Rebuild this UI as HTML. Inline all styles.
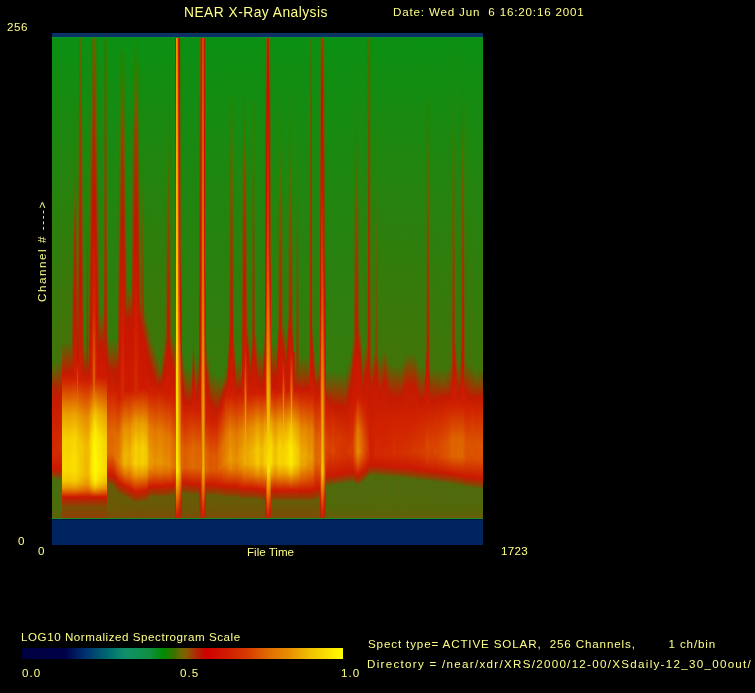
<!DOCTYPE html>
<html><head><meta charset="utf-8">
<style>
html,body{margin:0;padding:0;background:#000;}
body{width:755px;height:693px;position:relative;overflow:hidden;font-family:"Liberation Sans",sans-serif;}
.t{position:absolute;white-space:pre;color:#ffff86;-webkit-font-smoothing:antialiased;will-change:transform;font-size:11.6px;line-height:1;transform-origin:0 0;}
.bar{position:absolute;}
</style></head><body>
<div class="bar" style="left:52px;top:33px;width:431px;height:4px;background:#0a3264"></div>
<svg width="431" height="482" style="position:absolute;left:52px;top:37px" shape-rendering="crispEdges"><defs><linearGradient id="g0" x2="0" y2="1"><stop offset=".001" stop-color="#0b942d"/><stop offset=".0031" stop-color="#0b9013"/><stop offset=".6712" stop-color="#407509"/><stop offset=".6836" stop-color="#4b6e07"/><stop offset=".6961" stop-color="#636004"/><stop offset=".7023" stop-color="#7d4e02"/><stop offset=".7313" stop-color="#b62201"/><stop offset=".7707" stop-color="#cd1a00"/><stop offset=".8641" stop-color="#d32b00"/><stop offset=".8973" stop-color="#c81901"/><stop offset=".9098" stop-color="#854703"/><stop offset=".918" stop-color="#486f0e"/><stop offset=".9782" stop-color="#4d6c0c"/><stop offset=".9969" stop-color="#5f6108"/><stop offset=".999" stop-color="#1a8a2d"/></linearGradient><linearGradient id="g1" x2="0" y2="1"><stop offset=".001" stop-color="#0b942d"/><stop offset=".0031" stop-color="#0b9013"/><stop offset=".6712" stop-color="#407509"/><stop offset=".6878" stop-color="#556905"/><stop offset=".6961" stop-color="#655f04"/><stop offset=".7106" stop-color="#923f02"/><stop offset=".7396" stop-color="#be1d01"/><stop offset=".7977" stop-color="#d12200"/><stop offset=".8683" stop-color="#d32900"/><stop offset=".8973" stop-color="#c81901"/><stop offset=".9098" stop-color="#874603"/><stop offset=".918" stop-color="#4a6e0d"/><stop offset=".9782" stop-color="#4d6c0c"/><stop offset=".9969" stop-color="#5f6108"/><stop offset=".999" stop-color="#1a8a2d"/></linearGradient><linearGradient id="g2" x2="0" y2="1"><stop offset=".001" stop-color="#0b942d"/><stop offset=".0031" stop-color="#0b9013"/><stop offset=".6712" stop-color="#407509"/><stop offset=".6898" stop-color="#5b6505"/><stop offset=".723" stop-color="#aa2c02"/><stop offset=".7562" stop-color="#c91901"/><stop offset=".8641" stop-color="#d32b00"/><stop offset=".8973" stop-color="#c81901"/><stop offset=".9098" stop-color="#884403"/><stop offset=".918" stop-color="#4b6d0d"/><stop offset=".9782" stop-color="#4d6c0c"/><stop offset=".9969" stop-color="#5f6108"/><stop offset=".999" stop-color="#1a8a2d"/></linearGradient><linearGradient id="g3" x2="0" y2="1"><stop offset=".001" stop-color="#0b942d"/><stop offset=".0031" stop-color="#0b9013"/><stop offset=".6712" stop-color="#407509"/><stop offset=".6961" stop-color="#695c04"/><stop offset=".721" stop-color="#a72e02"/><stop offset=".7521" stop-color="#c81901"/><stop offset=".8662" stop-color="#d32a00"/><stop offset=".8973" stop-color="#c81901"/><stop offset=".9098" stop-color="#8a4303"/><stop offset=".918" stop-color="#4d6c0c"/><stop offset=".9782" stop-color="#4d6c0c"/><stop offset=".9969" stop-color="#5f6108"/><stop offset=".999" stop-color="#1a8a2d"/></linearGradient><linearGradient id="g4" x2="0" y2="1"><stop offset=".001" stop-color="#0b942d"/><stop offset=".0031" stop-color="#0b9013"/><stop offset=".6712" stop-color="#407509"/><stop offset=".7002" stop-color="#775203"/><stop offset=".7293" stop-color="#b42401"/><stop offset=".7583" stop-color="#c91901"/><stop offset=".8641" stop-color="#d32b00"/><stop offset=".8973" stop-color="#c91901"/><stop offset=".9077" stop-color="#993802"/><stop offset=".918" stop-color="#4e6b0c"/><stop offset=".9554" stop-color="#486f0e"/><stop offset=".9824" stop-color="#51690b"/><stop offset=".9969" stop-color="#5f6108"/><stop offset=".999" stop-color="#1a8a2d"/></linearGradient><linearGradient id="g5" x2="0" y2="1"><stop offset=".001" stop-color="#0b942d"/><stop offset=".0031" stop-color="#0b9013"/><stop offset=".6753" stop-color="#457208"/><stop offset=".7106" stop-color="#923f02"/><stop offset=".7417" stop-color="#c31a01"/><stop offset=".8496" stop-color="#d42d00"/><stop offset=".8973" stop-color="#c91901"/><stop offset=".9077" stop-color="#9b3702"/><stop offset=".9201" stop-color="#486f0e"/><stop offset=".9782" stop-color="#4d6c0c"/><stop offset=".9969" stop-color="#5f6108"/><stop offset=".999" stop-color="#1a8a2d"/></linearGradient><linearGradient id="g6" x2="0" y2="1"><stop offset=".001" stop-color="#0b942d"/><stop offset=".0031" stop-color="#0b9013"/><stop offset=".6753" stop-color="#467108"/><stop offset=".7127" stop-color="#983a02"/><stop offset=".7417" stop-color="#c41a01"/><stop offset=".8579" stop-color="#d42d00"/><stop offset=".8973" stop-color="#c91901"/><stop offset=".9077" stop-color="#9c3602"/><stop offset=".9201" stop-color="#486f0e"/><stop offset=".9782" stop-color="#4d6c0c"/><stop offset=".9969" stop-color="#5f6108"/><stop offset=".999" stop-color="#1a8a2d"/></linearGradient><linearGradient id="g7" x2="0" y2="1"><stop offset=".001" stop-color="#0b942d"/><stop offset=".0031" stop-color="#0b9013"/><stop offset=".6732" stop-color="#447208"/><stop offset=".7085" stop-color="#914002"/><stop offset=".7396" stop-color="#c31a01"/><stop offset=".8517" stop-color="#d42d00"/><stop offset=".8973" stop-color="#c91901"/><stop offset=".9077" stop-color="#9d3502"/><stop offset=".9201" stop-color="#486f0e"/><stop offset=".9782" stop-color="#4d6c0c"/><stop offset=".9969" stop-color="#5f6108"/><stop offset=".999" stop-color="#1a8a2d"/></linearGradient><linearGradient id="g8" x2="0" y2="1"><stop offset=".001" stop-color="#0b942d"/><stop offset=".0031" stop-color="#0b9013"/><stop offset=".6732" stop-color="#467108"/><stop offset=".7106" stop-color="#983a02"/><stop offset=".7396" stop-color="#c41a01"/><stop offset=".86" stop-color="#d42d00"/><stop offset=".8973" stop-color="#c91901"/><stop offset=".9077" stop-color="#9f3402"/><stop offset=".9201" stop-color="#486f0e"/><stop offset=".9782" stop-color="#4d6c0c"/><stop offset=".9969" stop-color="#5f6108"/><stop offset=".999" stop-color="#1a8a2d"/></linearGradient><linearGradient id="g9" x2="0" y2="1"><stop offset=".001" stop-color="#0b942d"/><stop offset=".0031" stop-color="#0b9013"/><stop offset=".6712" stop-color="#447308"/><stop offset=".7064" stop-color="#904002"/><stop offset=".7376" stop-color="#c31a01"/><stop offset=".8517" stop-color="#d42d00"/><stop offset=".8994" stop-color="#c81901"/><stop offset=".9118" stop-color="#854703"/><stop offset=".9201" stop-color="#486f0e"/><stop offset=".9782" stop-color="#4d6c0c"/><stop offset=".9969" stop-color="#5f6108"/><stop offset=".999" stop-color="#1a8a2d"/></linearGradient><linearGradient id="g10" x2="0" y2="1"><stop offset=".001" stop-color="#0b942d"/><stop offset=".0031" stop-color="#0b9013"/><stop offset=".6338" stop-color="#437308"/><stop offset=".6691" stop-color="#914002"/><stop offset=".7002" stop-color="#c81801"/><stop offset=".721" stop-color="#d53100"/><stop offset=".7811" stop-color="#ea9d00"/><stop offset=".833" stop-color="#f6d200"/><stop offset=".8973" stop-color="#f9dc00"/><stop offset=".9201" stop-color="#f4c900"/><stop offset=".9346" stop-color="#e99900"/><stop offset=".9471" stop-color="#da4c00"/><stop offset=".9533" stop-color="#d01e00"/><stop offset=".9554" stop-color="#c81901"/><stop offset=".9761" stop-color="#7b4e04"/><stop offset=".9969" stop-color="#8e4003"/><stop offset=".999" stop-color="#1a8a2d"/></linearGradient><linearGradient id="g11" x2="0" y2="1"><stop offset=".001" stop-color="#0b942d"/><stop offset=".0031" stop-color="#0b9013"/><stop offset=".6338" stop-color="#447308"/><stop offset=".6691" stop-color="#923f02"/><stop offset=".7002" stop-color="#c81801"/><stop offset=".721" stop-color="#d43100"/><stop offset=".7811" stop-color="#ea9d00"/><stop offset=".833" stop-color="#f6d200"/><stop offset=".8973" stop-color="#f9dc00"/><stop offset=".9201" stop-color="#f4c800"/><stop offset=".9346" stop-color="#e99900"/><stop offset=".9471" stop-color="#da4c00"/><stop offset=".9533" stop-color="#d01e00"/><stop offset=".9554" stop-color="#c81901"/><stop offset=".9761" stop-color="#7b4e04"/><stop offset=".9969" stop-color="#8e4003"/><stop offset=".999" stop-color="#1a8a2d"/></linearGradient><linearGradient id="g12" x2="0" y2="1"><stop offset=".001" stop-color="#0b942d"/><stop offset=".0031" stop-color="#0b9013"/><stop offset=".6338" stop-color="#457208"/><stop offset=".6691" stop-color="#933e02"/><stop offset=".7002" stop-color="#c81801"/><stop offset=".721" stop-color="#d43100"/><stop offset=".7811" stop-color="#ea9d00"/><stop offset=".833" stop-color="#f6d200"/><stop offset=".8973" stop-color="#f8dc00"/><stop offset=".9201" stop-color="#f4c800"/><stop offset=".9346" stop-color="#e99900"/><stop offset=".9471" stop-color="#da4c00"/><stop offset=".9533" stop-color="#d01e00"/><stop offset=".9554" stop-color="#c81901"/><stop offset=".9761" stop-color="#7b4e04"/><stop offset=".9969" stop-color="#8e4003"/><stop offset=".999" stop-color="#1a8a2d"/></linearGradient><linearGradient id="g13" x2="0" y2="1"><stop offset=".001" stop-color="#0b942d"/><stop offset=".0031" stop-color="#0b9013"/><stop offset=".6317" stop-color="#427408"/><stop offset=".667" stop-color="#8f4102"/><stop offset=".6981" stop-color="#c41901"/><stop offset=".7168" stop-color="#d32900"/><stop offset=".7811" stop-color="#ea9c00"/><stop offset=".833" stop-color="#f6d100"/><stop offset=".8973" stop-color="#f8dc00"/><stop offset=".9201" stop-color="#f3c800"/><stop offset=".9346" stop-color="#e99800"/><stop offset=".9471" stop-color="#da4c00"/><stop offset=".9533" stop-color="#d01e00"/><stop offset=".9554" stop-color="#c81901"/><stop offset=".9761" stop-color="#7b4e04"/><stop offset=".9969" stop-color="#8e4003"/><stop offset=".999" stop-color="#1a8a2d"/></linearGradient><linearGradient id="g14" x2="0" y2="1"><stop offset=".001" stop-color="#0b942d"/><stop offset=".0031" stop-color="#0b9013"/><stop offset=".6317" stop-color="#427408"/><stop offset=".667" stop-color="#904102"/><stop offset=".6981" stop-color="#c41901"/><stop offset=".7168" stop-color="#d32900"/><stop offset=".7811" stop-color="#ea9c00"/><stop offset=".833" stop-color="#f6d100"/><stop offset=".8973" stop-color="#f8db00"/><stop offset=".9201" stop-color="#f3c700"/><stop offset=".9346" stop-color="#e99800"/><stop offset=".9471" stop-color="#da4c00"/><stop offset=".9533" stop-color="#d01e00"/><stop offset=".9554" stop-color="#c81901"/><stop offset=".9761" stop-color="#7b4e04"/><stop offset=".9969" stop-color="#8e4003"/><stop offset=".999" stop-color="#1a8a2d"/></linearGradient><linearGradient id="g15" x2="0" y2="1"><stop offset=".001" stop-color="#0b942d"/><stop offset=".0031" stop-color="#0b9013"/><stop offset=".6317" stop-color="#437308"/><stop offset=".667" stop-color="#914002"/><stop offset=".6981" stop-color="#c41901"/><stop offset=".7168" stop-color="#d32800"/><stop offset=".7811" stop-color="#ea9b00"/><stop offset=".833" stop-color="#f5d000"/><stop offset=".8973" stop-color="#f8da00"/><stop offset=".9201" stop-color="#f3c600"/><stop offset=".9346" stop-color="#e99700"/><stop offset=".9471" stop-color="#da4b00"/><stop offset=".9533" stop-color="#d01e00"/><stop offset=".9554" stop-color="#c81901"/><stop offset=".9761" stop-color="#7b4e04"/><stop offset=".9969" stop-color="#8e4003"/><stop offset=".999" stop-color="#1a8a2d"/></linearGradient><linearGradient id="g16" x2="0" y2="1"><stop offset=".001" stop-color="#0b942d"/><stop offset=".0031" stop-color="#0b9013"/><stop offset=".6317" stop-color="#447308"/><stop offset=".667" stop-color="#923f02"/><stop offset=".6981" stop-color="#c41901"/><stop offset=".7168" stop-color="#d32800"/><stop offset=".7811" stop-color="#ea9b00"/><stop offset=".833" stop-color="#f5d000"/><stop offset=".8973" stop-color="#f8da00"/><stop offset=".9201" stop-color="#f3c600"/><stop offset=".9346" stop-color="#e99700"/><stop offset=".9471" stop-color="#da4b00"/><stop offset=".9533" stop-color="#d01e00"/><stop offset=".9554" stop-color="#c81901"/><stop offset=".9761" stop-color="#7b4e04"/><stop offset=".9969" stop-color="#8e4003"/><stop offset=".999" stop-color="#1a8a2d"/></linearGradient><linearGradient id="g17" x2="0" y2="1"><stop offset=".001" stop-color="#0b942d"/><stop offset=".0031" stop-color="#0b9013"/><stop offset=".6317" stop-color="#447308"/><stop offset=".667" stop-color="#923f02"/><stop offset=".6961" stop-color="#c21a01"/><stop offset=".7127" stop-color="#d12200"/><stop offset=".7811" stop-color="#ea9b00"/><stop offset=".833" stop-color="#f6d000"/><stop offset=".8973" stop-color="#f8db00"/><stop offset=".9201" stop-color="#f3c600"/><stop offset=".9346" stop-color="#e99700"/><stop offset=".9471" stop-color="#da4b00"/><stop offset=".9533" stop-color="#d01e00"/><stop offset=".9554" stop-color="#c81901"/><stop offset=".9761" stop-color="#7b4e04"/><stop offset=".9969" stop-color="#8e4003"/><stop offset=".999" stop-color="#1a8a2d"/></linearGradient><linearGradient id="g18" x2="0" y2="1"><stop offset=".001" stop-color="#0b942d"/><stop offset=".0031" stop-color="#0b9013"/><stop offset=".6317" stop-color="#457207"/><stop offset=".667" stop-color="#933e02"/><stop offset=".6961" stop-color="#c31a01"/><stop offset=".7127" stop-color="#d12200"/><stop offset=".7811" stop-color="#ea9c00"/><stop offset=".833" stop-color="#f6d100"/><stop offset=".8973" stop-color="#f8dc00"/><stop offset=".9201" stop-color="#f4c800"/><stop offset=".9346" stop-color="#e99800"/><stop offset=".9471" stop-color="#da4c00"/><stop offset=".9533" stop-color="#d01e00"/><stop offset=".9554" stop-color="#c81901"/><stop offset=".9761" stop-color="#7b4e04"/><stop offset=".9969" stop-color="#8e4003"/><stop offset=".999" stop-color="#1a8a2d"/></linearGradient><linearGradient id="g19" x2="0" y2="1"><stop offset=".001" stop-color="#0b942d"/><stop offset=".0031" stop-color="#0b9013"/><stop offset=".6297" stop-color="#427408"/><stop offset=".6649" stop-color="#8f4102"/><stop offset=".694" stop-color="#c11b01"/><stop offset=".7106" stop-color="#d11f00"/><stop offset=".7832" stop-color="#eba100"/><stop offset=".8351" stop-color="#f7d500"/><stop offset=".8994" stop-color="#f9dd00"/><stop offset=".9222" stop-color="#f3c500"/><stop offset=".9367" stop-color="#e79000"/><stop offset=".9492" stop-color="#d73c00"/><stop offset=".9533" stop-color="#d01e00"/><stop offset=".9554" stop-color="#c81901"/><stop offset=".9761" stop-color="#7b4e04"/><stop offset=".9969" stop-color="#8e4003"/><stop offset=".999" stop-color="#1a8a2d"/></linearGradient><linearGradient id="g20" x2="0" y2="1"><stop offset=".001" stop-color="#0b942d"/><stop offset=".0031" stop-color="#0b9013"/><stop offset=".4658" stop-color="#397908"/><stop offset=".6691" stop-color="#9a3902"/><stop offset=".6981" stop-color="#c51801"/><stop offset=".7168" stop-color="#d32a00"/><stop offset=".779" stop-color="#ea9c00"/><stop offset=".8309" stop-color="#f6d300"/><stop offset=".8952" stop-color="#f9df00"/><stop offset=".9201" stop-color="#f4cb00"/><stop offset=".9346" stop-color="#e99b00"/><stop offset=".9471" stop-color="#da4d00"/><stop offset=".9533" stop-color="#d01e00"/><stop offset=".9554" stop-color="#c81901"/><stop offset=".9761" stop-color="#7b4e04"/><stop offset=".9969" stop-color="#8e4003"/><stop offset=".999" stop-color="#1a8a2d"/></linearGradient><linearGradient id="g21" x2="0" y2="1"><stop offset=".001" stop-color="#0b942d"/><stop offset=".0031" stop-color="#0b9013"/><stop offset=".3143" stop-color="#298108"/><stop offset=".3911" stop-color="#566a02"/><stop offset=".5654" stop-color="#aa2c02"/><stop offset=".7023" stop-color="#cb1801"/><stop offset=".7313" stop-color="#d94700"/><stop offset=".7894" stop-color="#edac00"/><stop offset=".8413" stop-color="#f8da00"/><stop offset=".9056" stop-color="#f9dd00"/><stop offset=".9243" stop-color="#f2c200"/><stop offset=".9388" stop-color="#e58600"/><stop offset=".9533" stop-color="#d01e00"/><stop offset=".9554" stop-color="#c81901"/><stop offset=".9761" stop-color="#7b4e04"/><stop offset=".9969" stop-color="#8e4003"/><stop offset=".999" stop-color="#1a8a2d"/></linearGradient><linearGradient id="g22" x2="0" y2="1"><stop offset=".001" stop-color="#0b942d"/><stop offset=".0031" stop-color="#0b9013"/><stop offset=".279" stop-color="#258309"/><stop offset=".3454" stop-color="#5c6702"/><stop offset=".4098" stop-color="#9f3602"/><stop offset=".5674" stop-color="#c51701"/><stop offset=".7106" stop-color="#d12000"/><stop offset=".7811" stop-color="#eba100"/><stop offset=".8309" stop-color="#f7d500"/><stop offset=".8952" stop-color="#fae100"/><stop offset=".9201" stop-color="#f5cd00"/><stop offset=".9346" stop-color="#ea9d00"/><stop offset=".9471" stop-color="#da4e00"/><stop offset=".9533" stop-color="#d01e00"/><stop offset=".9554" stop-color="#c81901"/><stop offset=".9761" stop-color="#7b4e04"/><stop offset=".9969" stop-color="#8e4003"/><stop offset=".999" stop-color="#1a8a2d"/></linearGradient><linearGradient id="g23" x2="0" y2="1"><stop offset=".001" stop-color="#0b942d"/><stop offset=".0031" stop-color="#0b9013"/><stop offset=".277" stop-color="#258309"/><stop offset=".3434" stop-color="#596802"/><stop offset=".4098" stop-color="#9f3602"/><stop offset=".5674" stop-color="#c51701"/><stop offset=".7106" stop-color="#d12000"/><stop offset=".7811" stop-color="#eba000"/><stop offset=".833" stop-color="#f7d500"/><stop offset=".8973" stop-color="#f9e000"/><stop offset=".9201" stop-color="#f5cc00"/><stop offset=".9346" stop-color="#ea9c00"/><stop offset=".9471" stop-color="#da4d00"/><stop offset=".9533" stop-color="#d01e00"/><stop offset=".9554" stop-color="#c81901"/><stop offset=".9761" stop-color="#7b4e04"/><stop offset=".9969" stop-color="#8e4003"/><stop offset=".999" stop-color="#1a8a2d"/></linearGradient><linearGradient id="g24" x2="0" y2="1"><stop offset=".001" stop-color="#0b942d"/><stop offset=".0031" stop-color="#0b9013"/><stop offset=".3081" stop-color="#288209"/><stop offset=".3869" stop-color="#526c03"/><stop offset=".5488" stop-color="#a43102"/><stop offset=".6836" stop-color="#cd1800"/><stop offset=".7189" stop-color="#d42d00"/><stop offset=".7811" stop-color="#ea9d00"/><stop offset=".833" stop-color="#f6d200"/><stop offset=".8973" stop-color="#f8dc00"/><stop offset=".9201" stop-color="#f4c800"/><stop offset=".9346" stop-color="#e99900"/><stop offset=".9471" stop-color="#da4c00"/><stop offset=".9533" stop-color="#d01e00"/><stop offset=".9554" stop-color="#c81901"/><stop offset=".9761" stop-color="#7b4e04"/><stop offset=".9969" stop-color="#8e4003"/><stop offset=".999" stop-color="#1a8a2d"/></linearGradient><linearGradient id="g25" x2="0" y2="1"><stop offset=".001" stop-color="#0b942d"/><stop offset=".0031" stop-color="#0b9013"/><stop offset=".4201" stop-color="#317d09"/><stop offset=".4927" stop-color="#735702"/><stop offset=".5363" stop-color="#924002"/><stop offset=".6566" stop-color="#c41801"/><stop offset=".6732" stop-color="#c91701"/><stop offset=".6815" stop-color="#d22400"/><stop offset=".7604" stop-color="#e37a00"/><stop offset=".8185" stop-color="#f2c300"/><stop offset=".8745" stop-color="#f8d900"/><stop offset=".9139" stop-color="#f5ce00"/><stop offset=".9305" stop-color="#eca700"/><stop offset=".9429" stop-color="#df6800"/><stop offset=".9533" stop-color="#d01e00"/><stop offset=".9554" stop-color="#c81901"/><stop offset=".9761" stop-color="#7b4e04"/><stop offset=".9969" stop-color="#8e4003"/><stop offset=".999" stop-color="#1a8a2d"/></linearGradient><linearGradient id="g26" x2="0" y2="1"><stop offset=".001" stop-color="#0b942d"/><stop offset=".0031" stop-color="#0b9013"/><stop offset=".1338" stop-color="#138c0f"/><stop offset=".138" stop-color="#1d8608"/><stop offset=".4554" stop-color="#7d5102"/><stop offset=".6421" stop-color="#b32402"/><stop offset=".6691" stop-color="#c91701"/><stop offset=".7189" stop-color="#d32a00"/><stop offset=".7832" stop-color="#e99800"/><stop offset=".8371" stop-color="#f4cb00"/><stop offset=".9015" stop-color="#f6d200"/><stop offset=".9222" stop-color="#f1bb00"/><stop offset=".9367" stop-color="#e68900"/><stop offset=".9533" stop-color="#cf1d00"/><stop offset=".9554" stop-color="#c81901"/><stop offset=".9761" stop-color="#7b4e04"/><stop offset=".9969" stop-color="#8e4003"/><stop offset=".999" stop-color="#1a8a2d"/></linearGradient><linearGradient id="g27" x2="0" y2="1"><stop offset=".001" stop-color="#0b942d"/><stop offset=".0031" stop-color="#2f7c01"/><stop offset=".2728" stop-color="#8d4802"/><stop offset=".5031" stop-color="#bf1901"/><stop offset=".7106" stop-color="#d01d00"/><stop offset=".7873" stop-color="#e99a00"/><stop offset=".8413" stop-color="#f4ca00"/><stop offset=".9035" stop-color="#f5ce00"/><stop offset=".9243" stop-color="#efb300"/><stop offset=".9388" stop-color="#e37c00"/><stop offset=".9533" stop-color="#cf1d00"/><stop offset=".9575" stop-color="#bf2001"/><stop offset=".9761" stop-color="#7b4e04"/><stop offset=".9969" stop-color="#8e4003"/><stop offset=".999" stop-color="#1a8a2d"/></linearGradient><linearGradient id="g28" x2="0" y2="1"><stop offset=".001" stop-color="#0b942d"/><stop offset=".0031" stop-color="#546d00"/><stop offset=".2728" stop-color="#a63103"/><stop offset=".5031" stop-color="#c51501"/><stop offset=".7127" stop-color="#d01f00"/><stop offset=".7873" stop-color="#e99800"/><stop offset=".8434" stop-color="#f4c800"/><stop offset=".9056" stop-color="#f4ca00"/><stop offset=".9263" stop-color="#edab00"/><stop offset=".9409" stop-color="#e16f00"/><stop offset=".9533" stop-color="#cf1d00"/><stop offset=".9575" stop-color="#bf2001"/><stop offset=".9761" stop-color="#7b4e04"/><stop offset=".9969" stop-color="#8e4003"/><stop offset=".999" stop-color="#1a8a2d"/></linearGradient><linearGradient id="g29" x2="0" y2="1"><stop offset=".001" stop-color="#0b942d"/><stop offset=".0031" stop-color="#2f7c01"/><stop offset=".2728" stop-color="#8d4802"/><stop offset=".5031" stop-color="#bf1901"/><stop offset=".7106" stop-color="#cf1c00"/><stop offset=".7894" stop-color="#e99800"/><stop offset=".8454" stop-color="#f3c600"/><stop offset=".9077" stop-color="#f3c600"/><stop offset=".9263" stop-color="#eca900"/><stop offset=".9409" stop-color="#e06e00"/><stop offset=".9533" stop-color="#cf1d00"/><stop offset=".9575" stop-color="#bf2001"/><stop offset=".9761" stop-color="#7b4e04"/><stop offset=".9969" stop-color="#8e4003"/><stop offset=".999" stop-color="#1a8a2d"/></linearGradient><linearGradient id="g30" x2="0" y2="1"><stop offset=".001" stop-color="#0b942d"/><stop offset=".0031" stop-color="#0b9013"/><stop offset=".1338" stop-color="#128c0f"/><stop offset=".138" stop-color="#1d8608"/><stop offset=".4554" stop-color="#7d5102"/><stop offset=".6919" stop-color="#ba1f01"/><stop offset=".7106" stop-color="#cf1c00"/><stop offset=".7894" stop-color="#e99600"/><stop offset=".8454" stop-color="#f3c400"/><stop offset=".9077" stop-color="#f3c400"/><stop offset=".9263" stop-color="#eca600"/><stop offset=".9409" stop-color="#e06c00"/><stop offset=".9533" stop-color="#cf1d00"/><stop offset=".9575" stop-color="#bf2001"/><stop offset=".9761" stop-color="#7b4e04"/><stop offset=".9969" stop-color="#8e4003"/><stop offset=".999" stop-color="#1a8a2d"/></linearGradient><linearGradient id="g31" x2="0" y2="1"><stop offset=".001" stop-color="#0b942d"/><stop offset=".0031" stop-color="#0b9013"/><stop offset=".445" stop-color="#2f7e0a"/><stop offset=".6587" stop-color="#735503"/><stop offset=".6898" stop-color="#b62201"/><stop offset=".7106" stop-color="#cf1b00"/><stop offset=".7915" stop-color="#e89500"/><stop offset=".8496" stop-color="#f2c100"/><stop offset=".9077" stop-color="#f2c000"/><stop offset=".9263" stop-color="#eba300"/><stop offset=".9409" stop-color="#e06a00"/><stop offset=".9533" stop-color="#cf1d00"/><stop offset=".9595" stop-color="#ba2201"/><stop offset=".9761" stop-color="#7b4e04"/><stop offset=".9969" stop-color="#8e4003"/><stop offset=".999" stop-color="#1a8a2d"/></linearGradient><linearGradient id="g32" x2="0" y2="1"><stop offset=".001" stop-color="#0b942d"/><stop offset=".0031" stop-color="#0b9013"/><stop offset=".6276" stop-color="#367b0c"/><stop offset=".667" stop-color="#884702"/><stop offset=".7002" stop-color="#c41901"/><stop offset=".721" stop-color="#d32700"/><stop offset=".7894" stop-color="#e79000"/><stop offset=".8475" stop-color="#f1bd00"/><stop offset=".9077" stop-color="#f1bc00"/><stop offset=".9284" stop-color="#e99a00"/><stop offset=".9429" stop-color="#dd5c00"/><stop offset=".9533" stop-color="#cf1d00"/><stop offset=".9595" stop-color="#ba2201"/><stop offset=".9761" stop-color="#7b4e04"/><stop offset=".9969" stop-color="#8e4003"/><stop offset=".999" stop-color="#1a8a2d"/></linearGradient><linearGradient id="g33" x2="0" y2="1"><stop offset=".001" stop-color="#0b942d"/><stop offset=".0031" stop-color="#0b9013"/><stop offset=".6276" stop-color="#317e0e"/><stop offset=".6691" stop-color="#8b4402"/><stop offset=".7023" stop-color="#c61801"/><stop offset=".7251" stop-color="#d42d00"/><stop offset=".7894" stop-color="#e78d00"/><stop offset=".8496" stop-color="#f0ba00"/><stop offset=".9098" stop-color="#f0b700"/><stop offset=".9284" stop-color="#e99700"/><stop offset=".9429" stop-color="#dd5b00"/><stop offset=".9533" stop-color="#cf1c00"/><stop offset=".9595" stop-color="#ba2201"/><stop offset=".9761" stop-color="#7b4e04"/><stop offset=".9969" stop-color="#8e4003"/><stop offset=".999" stop-color="#1a8a2d"/></linearGradient><linearGradient id="g34" x2="0" y2="1"><stop offset=".001" stop-color="#0b942d"/><stop offset=".0031" stop-color="#0b9013"/><stop offset=".4201" stop-color="#2c800a"/><stop offset=".6525" stop-color="#616104"/><stop offset=".6919" stop-color="#b72201"/><stop offset=".7106" stop-color="#ce1a00"/><stop offset=".7936" stop-color="#e79100"/><stop offset=".8517" stop-color="#f0ba00"/><stop offset=".9098" stop-color="#efb600"/><stop offset=".9284" stop-color="#e99600"/><stop offset=".9429" stop-color="#dc5a00"/><stop offset=".9533" stop-color="#cf1c00"/><stop offset=".9595" stop-color="#ba2201"/><stop offset=".9761" stop-color="#7b4e04"/><stop offset=".9969" stop-color="#8e4003"/><stop offset=".999" stop-color="#1a8a2d"/></linearGradient><linearGradient id="g35" x2="0" y2="1"><stop offset=".001" stop-color="#0b942d"/><stop offset=".0031" stop-color="#0b9013"/><stop offset=".2832" stop-color="#23840a"/><stop offset=".3786" stop-color="#5a6802"/><stop offset=".4201" stop-color="#725902"/><stop offset=".6878" stop-color="#b02702"/><stop offset=".7085" stop-color="#cd1900"/><stop offset=".7956" stop-color="#e89400"/><stop offset=".8537" stop-color="#f1bc00"/><stop offset=".9098" stop-color="#f0b700"/><stop offset=".9284" stop-color="#e99700"/><stop offset=".9429" stop-color="#dd5b00"/><stop offset=".9533" stop-color="#cf1c00"/><stop offset=".9595" stop-color="#ba2201"/><stop offset=".9761" stop-color="#7b4e04"/><stop offset=".9969" stop-color="#8e4003"/><stop offset=".999" stop-color="#1a8a2d"/></linearGradient><linearGradient id="g36" x2="0" y2="1"><stop offset=".001" stop-color="#0b942d"/><stop offset=".0031" stop-color="#0b9013"/><stop offset=".4201" stop-color="#2c800a"/><stop offset=".5612" stop-color="#4e6d05"/><stop offset=".6649" stop-color="#7c4f02"/><stop offset=".7023" stop-color="#c71801"/><stop offset=".7251" stop-color="#d42e00"/><stop offset=".7894" stop-color="#e78f00"/><stop offset=".8475" stop-color="#f1bc00"/><stop offset=".9077" stop-color="#f1bb00"/><stop offset=".9284" stop-color="#e99900"/><stop offset=".9429" stop-color="#dd5c00"/><stop offset=".9533" stop-color="#cf1c00"/><stop offset=".9595" stop-color="#ba2201"/><stop offset=".9761" stop-color="#7b4e04"/><stop offset=".9969" stop-color="#8e4003"/><stop offset=".999" stop-color="#1a8a2d"/></linearGradient><linearGradient id="g37" x2="0" y2="1"><stop offset=".001" stop-color="#0b942d"/><stop offset=".0031" stop-color="#0b9013"/><stop offset=".3039" stop-color="#23840b"/><stop offset=".5695" stop-color="#8b4502"/><stop offset=".6629" stop-color="#ad2902"/><stop offset=".6898" stop-color="#c81701"/><stop offset=".7147" stop-color="#d12100"/><stop offset=".7853" stop-color="#e89400"/><stop offset=".8413" stop-color="#f3c500"/><stop offset=".9035" stop-color="#f4c900"/><stop offset=".9243" stop-color="#eeaf00"/><stop offset=".9388" stop-color="#e37900"/><stop offset=".9533" stop-color="#cf1d00"/><stop offset=".9575" stop-color="#bf2001"/><stop offset=".9761" stop-color="#7b4e04"/><stop offset=".9969" stop-color="#8e4003"/><stop offset=".999" stop-color="#1a8a2d"/></linearGradient><linearGradient id="g38" x2="0" y2="1"><stop offset=".001" stop-color="#0b942d"/><stop offset=".0031" stop-color="#0b9013"/><stop offset=".1483" stop-color="#138c10"/><stop offset=".1525" stop-color="#1e8608"/><stop offset=".3994" stop-color="#7e5102"/><stop offset=".6006" stop-color="#bc1d01"/><stop offset=".7085" stop-color="#cf1b00"/><stop offset=".7853" stop-color="#ea9e00"/><stop offset=".8392" stop-color="#f6d000"/><stop offset=".9035" stop-color="#f7d500"/><stop offset=".9243" stop-color="#f0ba00"/><stop offset=".9388" stop-color="#e48000"/><stop offset=".9533" stop-color="#d01e00"/><stop offset=".9554" stop-color="#c81901"/><stop offset=".9761" stop-color="#7b4e04"/><stop offset=".9969" stop-color="#8e4003"/><stop offset=".999" stop-color="#1a8a2d"/></linearGradient><linearGradient id="g39" x2="0" y2="1"><stop offset=".001" stop-color="#0b942d"/><stop offset=".0031" stop-color="#188705"/><stop offset=".1815" stop-color="#586a01"/><stop offset=".4118" stop-color="#b02602"/><stop offset=".5778" stop-color="#cb1501"/><stop offset=".7127" stop-color="#d22400"/><stop offset=".779" stop-color="#eba000"/><stop offset=".8288" stop-color="#f7d600"/><stop offset=".8911" stop-color="#fae300"/><stop offset=".918" stop-color="#f6d300"/><stop offset=".9326" stop-color="#eca800"/><stop offset=".945" stop-color="#dd5f00"/><stop offset=".9533" stop-color="#d01e00"/><stop offset=".9554" stop-color="#c81901"/><stop offset=".9761" stop-color="#7b4e04"/><stop offset=".9969" stop-color="#8e4003"/><stop offset=".999" stop-color="#1a8a2d"/></linearGradient><linearGradient id="g40" x2="0" y2="1"><stop offset=".001" stop-color="#0b942d"/><stop offset=".0031" stop-color="#397800"/><stop offset=".1981" stop-color="#924503"/><stop offset=".3662" stop-color="#c21601"/><stop offset=".5591" stop-color="#d11d00"/><stop offset=".7189" stop-color="#d53300"/><stop offset=".777" stop-color="#eca800"/><stop offset=".8247" stop-color="#f9df00"/><stop offset=".889" stop-color="#fced00"/><stop offset=".918" stop-color="#f9de00"/><stop offset=".9326" stop-color="#efb300"/><stop offset=".945" stop-color="#df6500"/><stop offset=".9533" stop-color="#d01f00"/><stop offset=".9554" stop-color="#c81901"/><stop offset=".9761" stop-color="#7b4e04"/><stop offset=".9969" stop-color="#8e4003"/><stop offset=".999" stop-color="#1a8a2d"/></linearGradient><linearGradient id="g41" x2="0" y2="1"><stop offset=".001" stop-color="#0b942d"/><stop offset=".0031" stop-color="#5e6900"/><stop offset=".2044" stop-color="#ac2b03"/><stop offset=".3662" stop-color="#c81201"/><stop offset=".555" stop-color="#d22300"/><stop offset=".6857" stop-color="#dc5700"/><stop offset=".721" stop-color="#dd5e00"/><stop offset=".75" stop-color="#e47f00"/><stop offset=".8019" stop-color="#f7d400"/><stop offset=".8517" stop-color="#fdf200"/><stop offset=".9139" stop-color="#fcec00"/><stop offset=".9284" stop-color="#f5ce00"/><stop offset=".9409" stop-color="#e68a00"/><stop offset=".9533" stop-color="#d02000"/><stop offset=".9554" stop-color="#c81901"/><stop offset=".9761" stop-color="#7b4e04"/><stop offset=".9969" stop-color="#8e4003"/><stop offset=".999" stop-color="#1a8a2d"/></linearGradient><linearGradient id="g42" x2="0" y2="1"><stop offset=".001" stop-color="#0b942d"/><stop offset=".0031" stop-color="#5e6900"/><stop offset=".2044" stop-color="#ac2b03"/><stop offset=".3662" stop-color="#c81201"/><stop offset=".555" stop-color="#d22300"/><stop offset=".6857" stop-color="#dc5700"/><stop offset=".721" stop-color="#dd5e00"/><stop offset=".7459" stop-color="#e37b00"/><stop offset=".7956" stop-color="#f7d400"/><stop offset=".8413" stop-color="#fef400"/><stop offset=".9139" stop-color="#fdf100"/><stop offset=".9284" stop-color="#f7d400"/><stop offset=".9409" stop-color="#e78f00"/><stop offset=".9533" stop-color="#d12000"/><stop offset=".9554" stop-color="#c81901"/><stop offset=".9761" stop-color="#7b4e04"/><stop offset=".9969" stop-color="#8e4003"/><stop offset=".999" stop-color="#1a8a2d"/></linearGradient><linearGradient id="g43" x2="0" y2="1"><stop offset=".001" stop-color="#0b942d"/><stop offset=".0031" stop-color="#397800"/><stop offset=".1981" stop-color="#924503"/><stop offset=".3662" stop-color="#c21601"/><stop offset=".5591" stop-color="#d11d00"/><stop offset=".7147" stop-color="#d53200"/><stop offset=".7728" stop-color="#efb500"/><stop offset=".8143" stop-color="#fcea00"/><stop offset=".8807" stop-color="#fefa00"/><stop offset=".918" stop-color="#fdf000"/><stop offset=".9305" stop-color="#f5d000"/><stop offset=".9429" stop-color="#e48200"/><stop offset=".9533" stop-color="#d12000"/><stop offset=".9554" stop-color="#c81901"/><stop offset=".9761" stop-color="#7b4e04"/><stop offset=".9969" stop-color="#8e4003"/><stop offset=".999" stop-color="#1a8a2d"/></linearGradient><linearGradient id="g44" x2="0" y2="1"><stop offset=".001" stop-color="#0b942d"/><stop offset=".0031" stop-color="#188705"/><stop offset=".1815" stop-color="#586a01"/><stop offset=".4118" stop-color="#b02602"/><stop offset=".5778" stop-color="#cb1501"/><stop offset=".7085" stop-color="#d22300"/><stop offset=".7749" stop-color="#eeb200"/><stop offset=".8185" stop-color="#fbe700"/><stop offset=".8849" stop-color="#fef700"/><stop offset=".918" stop-color="#fcea00"/><stop offset=".9305" stop-color="#f4c900"/><stop offset=".9429" stop-color="#e37d00"/><stop offset=".9533" stop-color="#d12000"/><stop offset=".9554" stop-color="#c81901"/><stop offset=".9761" stop-color="#7b4e04"/><stop offset=".9969" stop-color="#8e4003"/><stop offset=".999" stop-color="#1a8a2d"/></linearGradient><linearGradient id="g45" x2="0" y2="1"><stop offset=".001" stop-color="#0b942d"/><stop offset=".0031" stop-color="#0b9013"/><stop offset=".1483" stop-color="#138c10"/><stop offset=".1525" stop-color="#1e8608"/><stop offset=".3994" stop-color="#7e5102"/><stop offset=".6006" stop-color="#bc1d01"/><stop offset=".7044" stop-color="#cf1b00"/><stop offset=".7811" stop-color="#efb600"/><stop offset=".8268" stop-color="#fbe700"/><stop offset=".8973" stop-color="#fdf200"/><stop offset=".9201" stop-color="#fae200"/><stop offset=".9326" stop-color="#f0ba00"/><stop offset=".945" stop-color="#df6900"/><stop offset=".9533" stop-color="#d02000"/><stop offset=".9554" stop-color="#c81901"/><stop offset=".9761" stop-color="#7b4e04"/><stop offset=".9969" stop-color="#8e4003"/><stop offset=".999" stop-color="#1a8a2d"/></linearGradient><linearGradient id="g46" x2="0" y2="1"><stop offset=".001" stop-color="#0b942d"/><stop offset=".0031" stop-color="#0b9013"/><stop offset=".3039" stop-color="#23840b"/><stop offset=".5695" stop-color="#8b4502"/><stop offset=".6255" stop-color="#a23202"/><stop offset=".6525" stop-color="#c71701"/><stop offset=".7044" stop-color="#ce1a00"/><stop offset=".7811" stop-color="#eeb100"/><stop offset=".8268" stop-color="#fae300"/><stop offset=".8952" stop-color="#fdef00"/><stop offset=".9201" stop-color="#f9dd00"/><stop offset=".9326" stop-color="#efb500"/><stop offset=".945" stop-color="#df6700"/><stop offset=".9533" stop-color="#d01f00"/><stop offset=".9554" stop-color="#c81901"/><stop offset=".9761" stop-color="#7b4e04"/><stop offset=".9969" stop-color="#8e4003"/><stop offset=".999" stop-color="#1a8a2d"/></linearGradient><linearGradient id="g47" x2="0" y2="1"><stop offset=".001" stop-color="#0b942d"/><stop offset=".0031" stop-color="#0b9013"/><stop offset=".4782" stop-color="#2f7e0b"/><stop offset=".5902" stop-color="#5f6303"/><stop offset=".6297" stop-color="#b62202"/><stop offset=".6566" stop-color="#c91701"/><stop offset=".7044" stop-color="#ce1a00"/><stop offset=".7832" stop-color="#eeb000"/><stop offset=".8309" stop-color="#fae200"/><stop offset=".8994" stop-color="#fceb00"/><stop offset=".9222" stop-color="#f7d500"/><stop offset=".9346" stop-color="#eca700"/><stop offset=".9471" stop-color="#db5300"/><stop offset=".9533" stop-color="#d01f00"/><stop offset=".9554" stop-color="#c81901"/><stop offset=".9761" stop-color="#7b4e04"/><stop offset=".9969" stop-color="#8e4003"/><stop offset=".999" stop-color="#1a8a2d"/></linearGradient><linearGradient id="g48" x2="0" y2="1"><stop offset=".001" stop-color="#0b942d"/><stop offset=".0031" stop-color="#0b9013"/><stop offset=".5674" stop-color="#347c0b"/><stop offset=".6048" stop-color="#824b02"/><stop offset=".6338" stop-color="#bc1d01"/><stop offset=".6587" stop-color="#c91701"/><stop offset=".7064" stop-color="#cf1c00"/><stop offset=".7811" stop-color="#edaa00"/><stop offset=".8288" stop-color="#f9dd00"/><stop offset=".8952" stop-color="#fbe900"/><stop offset=".9201" stop-color="#f7d600"/><stop offset=".9346" stop-color="#eca400"/><stop offset=".9471" stop-color="#db5200"/><stop offset=".9533" stop-color="#d01f00"/><stop offset=".9554" stop-color="#c81901"/><stop offset=".9761" stop-color="#7b4e04"/><stop offset=".9969" stop-color="#8e4003"/><stop offset=".999" stop-color="#1a8a2d"/></linearGradient><linearGradient id="g49" x2="0" y2="1"><stop offset=".001" stop-color="#0b942d"/><stop offset=".0031" stop-color="#0b9013"/><stop offset=".5674" stop-color="#347c0b"/><stop offset=".6048" stop-color="#824b02"/><stop offset=".6338" stop-color="#bc1d01"/><stop offset=".6587" stop-color="#c91701"/><stop offset=".7064" stop-color="#cf1b00"/><stop offset=".7832" stop-color="#edaa00"/><stop offset=".833" stop-color="#f9dd00"/><stop offset=".8994" stop-color="#fbe600"/><stop offset=".9222" stop-color="#f5cf00"/><stop offset=".9367" stop-color="#e99700"/><stop offset=".9492" stop-color="#d73f00"/><stop offset=".9533" stop-color="#d01e00"/><stop offset=".9554" stop-color="#c81901"/><stop offset=".9761" stop-color="#7b4e04"/><stop offset=".9969" stop-color="#8e4003"/><stop offset=".999" stop-color="#1a8a2d"/></linearGradient><linearGradient id="g50" x2="0" y2="1"><stop offset=".001" stop-color="#0b942d"/><stop offset=".0031" stop-color="#0b9013"/><stop offset=".5674" stop-color="#347c0b"/><stop offset=".6048" stop-color="#824b02"/><stop offset=".6338" stop-color="#bc1d01"/><stop offset=".6587" stop-color="#c91701"/><stop offset=".7064" stop-color="#cf1b00"/><stop offset=".7832" stop-color="#eca700"/><stop offset=".833" stop-color="#f8d900"/><stop offset=".8973" stop-color="#fae300"/><stop offset=".9201" stop-color="#f5d000"/><stop offset=".9346" stop-color="#ea9f00"/><stop offset=".9471" stop-color="#da4f00"/><stop offset=".9533" stop-color="#d01e00"/><stop offset=".9554" stop-color="#c81901"/><stop offset=".9761" stop-color="#7b4e04"/><stop offset=".9969" stop-color="#8e4003"/><stop offset=".999" stop-color="#1a8a2d"/></linearGradient><linearGradient id="g51" x2="0" y2="1"><stop offset=".001" stop-color="#0b942d"/><stop offset=".0031" stop-color="#0b9013"/><stop offset=".4782" stop-color="#307e0a"/><stop offset=".5799" stop-color="#4a6f06"/><stop offset=".6151" stop-color="#9b3802"/><stop offset=".6442" stop-color="#c61701"/><stop offset=".7064" stop-color="#ce1b00"/><stop offset=".7853" stop-color="#eca700"/><stop offset=".8351" stop-color="#f7d700"/><stop offset=".8994" stop-color="#f9e000"/><stop offset=".9222" stop-color="#f4c800"/><stop offset=".9367" stop-color="#e89200"/><stop offset=".9492" stop-color="#d73d00"/><stop offset=".9533" stop-color="#d01e00"/><stop offset=".9554" stop-color="#c81901"/><stop offset=".9761" stop-color="#7b4e04"/><stop offset=".9969" stop-color="#8e4003"/><stop offset=".999" stop-color="#1a8a2d"/></linearGradient><linearGradient id="g52" x2="0" y2="1"><stop offset=".001" stop-color="#0b942d"/><stop offset=".0031" stop-color="#238202"/><stop offset=".3952" stop-color="#7e5102"/><stop offset=".6255" stop-color="#b02702"/><stop offset=".6525" stop-color="#c91701"/><stop offset=".7064" stop-color="#ce1a00"/><stop offset=".7873" stop-color="#eca700"/><stop offset=".8392" stop-color="#f7d600"/><stop offset=".9035" stop-color="#f8db00"/><stop offset=".9243" stop-color="#f2c000"/><stop offset=".9388" stop-color="#e58500"/><stop offset=".9533" stop-color="#d01e00"/><stop offset=".9554" stop-color="#c81901"/><stop offset=".9761" stop-color="#7b4e04"/><stop offset=".9969" stop-color="#8e4003"/><stop offset=".999" stop-color="#1a8a2d"/></linearGradient><linearGradient id="g53" x2="0" y2="1"><stop offset=".001" stop-color="#0b942d"/><stop offset=".0031" stop-color="#546d00"/><stop offset=".3475" stop-color="#a43202"/><stop offset=".6732" stop-color="#c91701"/><stop offset=".7106" stop-color="#d01e00"/><stop offset=".7832" stop-color="#ea9e00"/><stop offset=".8351" stop-color="#f6d100"/><stop offset=".8994" stop-color="#f8da00"/><stop offset=".9222" stop-color="#f2c200"/><stop offset=".9367" stop-color="#e78d00"/><stop offset=".9492" stop-color="#d63b00"/><stop offset=".9533" stop-color="#d01e00"/><stop offset=".9554" stop-color="#c81901"/><stop offset=".9761" stop-color="#7b4e04"/><stop offset=".9969" stop-color="#8e4003"/><stop offset=".999" stop-color="#1a8a2d"/></linearGradient><linearGradient id="g54" x2="0" y2="1"><stop offset=".001" stop-color="#0b942d"/><stop offset=".0031" stop-color="#238202"/><stop offset=".3952" stop-color="#7e5102"/><stop offset=".6546" stop-color="#b62202"/><stop offset=".6815" stop-color="#c81701"/><stop offset=".7106" stop-color="#d01e00"/><stop offset=".7853" stop-color="#ea9e00"/><stop offset=".8392" stop-color="#f5d000"/><stop offset=".9035" stop-color="#f7d500"/><stop offset=".9243" stop-color="#f0b900"/><stop offset=".9388" stop-color="#e48000"/><stop offset=".9533" stop-color="#d01e00"/><stop offset=".9554" stop-color="#c81901"/><stop offset=".9761" stop-color="#7b4e04"/><stop offset=".9969" stop-color="#8e4003"/><stop offset=".999" stop-color="#1a8a2d"/></linearGradient><linearGradient id="g55" x2="0" y2="1"><stop offset=".001" stop-color="#0b942d"/><stop offset=".0031" stop-color="#0b9013"/><stop offset=".4782" stop-color="#307e0a"/><stop offset=".6193" stop-color="#516b05"/><stop offset=".667" stop-color="#b72101"/><stop offset=".6919" stop-color="#c81701"/><stop offset=".7376" stop-color="#d12100"/><stop offset=".8185" stop-color="#de6200"/><stop offset=".8641" stop-color="#df6700"/><stop offset=".9056" stop-color="#cb1900"/><stop offset=".9201" stop-color="#953b02"/><stop offset=".9284" stop-color="#655d07"/><stop offset=".9782" stop-color="#6b5906"/><stop offset=".9969" stop-color="#7d4c04"/><stop offset=".999" stop-color="#1a8a2d"/></linearGradient><linearGradient id="g56" x2="0" y2="1"><stop offset=".001" stop-color="#0b942d"/><stop offset=".0031" stop-color="#0b9013"/><stop offset=".6151" stop-color="#367b0b"/><stop offset=".6525" stop-color="#834a02"/><stop offset=".6836" stop-color="#be1c01"/><stop offset=".7127" stop-color="#c81801"/><stop offset=".75" stop-color="#d42d00"/><stop offset=".8226" stop-color="#de6500"/><stop offset=".8641" stop-color="#df6800"/><stop offset=".9077" stop-color="#c91901"/><stop offset=".9222" stop-color="#8e4003"/><stop offset=".9284" stop-color="#695a06"/><stop offset=".9782" stop-color="#6b5906"/><stop offset=".9969" stop-color="#7d4c04"/><stop offset=".999" stop-color="#1a8a2d"/></linearGradient><linearGradient id="g57" x2="0" y2="1"><stop offset=".001" stop-color="#0b942d"/><stop offset=".0031" stop-color="#0b9013"/><stop offset=".6255" stop-color="#357b0c"/><stop offset=".6629" stop-color="#824b02"/><stop offset=".694" stop-color="#bd1d01"/><stop offset=".7313" stop-color="#cf1d00"/><stop offset=".8185" stop-color="#de6400"/><stop offset=".8641" stop-color="#df6900"/><stop offset=".9077" stop-color="#ca1901"/><stop offset=".9222" stop-color="#923e02"/><stop offset=".9305" stop-color="#655d07"/><stop offset=".9782" stop-color="#6b5906"/><stop offset=".9969" stop-color="#7d4c04"/><stop offset=".999" stop-color="#1a8a2d"/></linearGradient><linearGradient id="g58" x2="0" y2="1"><stop offset=".001" stop-color="#0b942d"/><stop offset=".0031" stop-color="#0b9013"/><stop offset=".6255" stop-color="#357b0c"/><stop offset=".6629" stop-color="#824b02"/><stop offset=".694" stop-color="#bd1d01"/><stop offset=".7313" stop-color="#d01d00"/><stop offset=".8164" stop-color="#de6400"/><stop offset=".8641" stop-color="#e06a00"/><stop offset=".8973" stop-color="#d32900"/><stop offset=".9098" stop-color="#c81901"/><stop offset=".9243" stop-color="#8a4303"/><stop offset=".9305" stop-color="#655d07"/><stop offset=".9782" stop-color="#6b5906"/><stop offset=".9969" stop-color="#7d4c04"/><stop offset=".999" stop-color="#1a8a2d"/></linearGradient><linearGradient id="g59" x2="0" y2="1"><stop offset=".001" stop-color="#0b942d"/><stop offset=".0031" stop-color="#0b9013"/><stop offset=".6255" stop-color="#357b0c"/><stop offset=".6629" stop-color="#824b02"/><stop offset=".694" stop-color="#bd1d01"/><stop offset=".7313" stop-color="#d01e00"/><stop offset=".8164" stop-color="#df6500"/><stop offset=".8641" stop-color="#e06b00"/><stop offset=".8952" stop-color="#d43000"/><stop offset=".9098" stop-color="#c91901"/><stop offset=".9243" stop-color="#8e4003"/><stop offset=".9305" stop-color="#695a06"/><stop offset=".9782" stop-color="#6b5906"/><stop offset=".9969" stop-color="#7d4c04"/><stop offset=".999" stop-color="#1a8a2d"/></linearGradient><linearGradient id="g60" x2="0" y2="1"><stop offset=".001" stop-color="#0b942d"/><stop offset=".0031" stop-color="#0b9013"/><stop offset=".6255" stop-color="#357b0c"/><stop offset=".6629" stop-color="#824b02"/><stop offset=".694" stop-color="#bd1d01"/><stop offset=".7313" stop-color="#d01e00"/><stop offset=".8164" stop-color="#df6600"/><stop offset=".8641" stop-color="#e06c00"/><stop offset=".8952" stop-color="#d53100"/><stop offset=".9098" stop-color="#ca1901"/><stop offset=".9243" stop-color="#923e02"/><stop offset=".9326" stop-color="#655d07"/><stop offset=".9782" stop-color="#6b5906"/><stop offset=".9969" stop-color="#7d4c04"/><stop offset=".999" stop-color="#1a8a2d"/></linearGradient><linearGradient id="g61" x2="0" y2="1"><stop offset=".001" stop-color="#0b942d"/><stop offset=".0031" stop-color="#0b9013"/><stop offset=".6255" stop-color="#357b0c"/><stop offset=".6629" stop-color="#824b02"/><stop offset=".694" stop-color="#bd1d01"/><stop offset=".7313" stop-color="#d01e00"/><stop offset=".8143" stop-color="#df6600"/><stop offset=".8641" stop-color="#e06d00"/><stop offset=".8952" stop-color="#d53300"/><stop offset=".9118" stop-color="#c81901"/><stop offset=".9263" stop-color="#8a4303"/><stop offset=".9326" stop-color="#655d07"/><stop offset=".9782" stop-color="#6b5906"/><stop offset=".9969" stop-color="#7d4c04"/><stop offset=".999" stop-color="#1a8a2d"/></linearGradient><linearGradient id="g62" x2="0" y2="1"><stop offset=".001" stop-color="#0b942d"/><stop offset=".0031" stop-color="#0b9013"/><stop offset=".6255" stop-color="#357b0c"/><stop offset=".6629" stop-color="#824b02"/><stop offset=".694" stop-color="#bd1d01"/><stop offset=".7334" stop-color="#d01d00"/><stop offset=".8185" stop-color="#df6800"/><stop offset=".8683" stop-color="#e17000"/><stop offset=".8973" stop-color="#d63700"/><stop offset=".9139" stop-color="#c91901"/><stop offset=".9284" stop-color="#8f4003"/><stop offset=".9367" stop-color="#655d07"/><stop offset=".9782" stop-color="#6b5906"/><stop offset=".9969" stop-color="#7d4c04"/><stop offset=".999" stop-color="#1a8a2d"/></linearGradient><linearGradient id="g63" x2="0" y2="1"><stop offset=".001" stop-color="#0b942d"/><stop offset=".0031" stop-color="#0b9013"/><stop offset=".6255" stop-color="#357b0c"/><stop offset=".6629" stop-color="#824b02"/><stop offset=".694" stop-color="#bd1d01"/><stop offset=".721" stop-color="#c81801"/><stop offset=".7562" stop-color="#d43000"/><stop offset=".8247" stop-color="#e06c00"/><stop offset=".8724" stop-color="#e17200"/><stop offset=".8994" stop-color="#d63b00"/><stop offset=".916" stop-color="#cb1901"/><stop offset=".9305" stop-color="#933d02"/><stop offset=".9388" stop-color="#655d07"/><stop offset=".9782" stop-color="#6b5906"/><stop offset=".9969" stop-color="#7d4c04"/><stop offset=".999" stop-color="#1a8a2d"/></linearGradient><linearGradient id="g64" x2="0" y2="1"><stop offset=".001" stop-color="#0b942d"/><stop offset=".0031" stop-color="#0b9013"/><stop offset=".6255" stop-color="#357b0c"/><stop offset=".6629" stop-color="#824b02"/><stop offset=".694" stop-color="#bd1d01"/><stop offset=".721" stop-color="#c81801"/><stop offset=".7521" stop-color="#d32900"/><stop offset=".8247" stop-color="#e06c00"/><stop offset=".8745" stop-color="#e27600"/><stop offset=".8994" stop-color="#d84500"/><stop offset=".918" stop-color="#cc1900"/><stop offset=".9326" stop-color="#983a02"/><stop offset=".9409" stop-color="#675b07"/><stop offset=".9782" stop-color="#6b5906"/><stop offset=".9969" stop-color="#7d4c04"/><stop offset=".999" stop-color="#1a8a2d"/></linearGradient><linearGradient id="g65" x2="0" y2="1"><stop offset=".001" stop-color="#0b942d"/><stop offset=".0031" stop-color="#0b9013"/><stop offset=".5446" stop-color="#347c0a"/><stop offset=".6483" stop-color="#5f6304"/><stop offset=".6878" stop-color="#b52302"/><stop offset=".7127" stop-color="#c81801"/><stop offset=".7479" stop-color="#d12100"/><stop offset=".8268" stop-color="#e06d00"/><stop offset=".8786" stop-color="#e37900"/><stop offset=".9015" stop-color="#d94b00"/><stop offset=".9222" stop-color="#ca1901"/><stop offset=".9367" stop-color="#913e03"/><stop offset=".945" stop-color="#655d07"/><stop offset=".9782" stop-color="#6b5906"/><stop offset=".9969" stop-color="#7d4c04"/><stop offset=".999" stop-color="#1a8a2d"/></linearGradient><linearGradient id="g66" x2="0" y2="1"><stop offset=".001" stop-color="#0b942d"/><stop offset=".0031" stop-color="#0b9013"/><stop offset=".3475" stop-color="#27820a"/><stop offset=".638" stop-color="#914002"/><stop offset=".6566" stop-color="#9e3602"/><stop offset=".6857" stop-color="#c61801"/><stop offset=".7479" stop-color="#d01e00"/><stop offset=".8288" stop-color="#e06e00"/><stop offset=".8828" stop-color="#e37b00"/><stop offset=".9056" stop-color="#d94a00"/><stop offset=".9243" stop-color="#cc1900"/><stop offset=".9388" stop-color="#953b02"/><stop offset=".9471" stop-color="#655d07"/><stop offset=".9782" stop-color="#6b5906"/><stop offset=".9969" stop-color="#7d4c04"/><stop offset=".999" stop-color="#1a8a2d"/></linearGradient><linearGradient id="g67" x2="0" y2="1"><stop offset=".001" stop-color="#0b942d"/><stop offset=".0031" stop-color="#0b9013"/><stop offset=".1629" stop-color="#148b0f"/><stop offset=".167" stop-color="#1e8608"/><stop offset=".4139" stop-color="#765602"/><stop offset=".6317" stop-color="#b91f01"/><stop offset=".694" stop-color="#c81801"/><stop offset=".7438" stop-color="#cf1c00"/><stop offset=".8268" stop-color="#e27400"/><stop offset=".8807" stop-color="#e58400"/><stop offset=".9015" stop-color="#dd5d00"/><stop offset=".9243" stop-color="#ce1b00"/><stop offset=".9388" stop-color="#9b3702"/><stop offset=".9492" stop-color="#655d07"/><stop offset=".9803" stop-color="#6d5706"/><stop offset=".9969" stop-color="#7d4c04"/><stop offset=".999" stop-color="#1a8a2d"/></linearGradient><linearGradient id="g68" x2="0" y2="1"><stop offset=".001" stop-color="#0b942d"/><stop offset=".0031" stop-color="#0b9013"/><stop offset=".0259" stop-color="#0c9012"/><stop offset=".0301" stop-color="#188806"/><stop offset=".138" stop-color="#2f7d03"/><stop offset=".2376" stop-color="#676201"/><stop offset=".4616" stop-color="#b52202"/><stop offset=".6359" stop-color="#cc1700"/><stop offset=".7459" stop-color="#d12000"/><stop offset=".8205" stop-color="#e27700"/><stop offset=".8786" stop-color="#e78d00"/><stop offset=".8994" stop-color="#e06a00"/><stop offset=".9263" stop-color="#cc1a00"/><stop offset=".9409" stop-color="#973a02"/><stop offset=".9492" stop-color="#675b07"/><stop offset=".9782" stop-color="#6b5906"/><stop offset=".9969" stop-color="#7d4c04"/><stop offset=".999" stop-color="#1a8a2d"/></linearGradient><linearGradient id="g69" x2="0" y2="1"><stop offset=".001" stop-color="#0b942d"/><stop offset=".0031" stop-color="#0b9013"/><stop offset=".0259" stop-color="#0c9012"/><stop offset=".0342" stop-color="#138b09"/><stop offset=".1131" stop-color="#357a02"/><stop offset=".2044" stop-color="#8c4a02"/><stop offset=".3828" stop-color="#c11701"/><stop offset=".6172" stop-color="#d01d00"/><stop offset=".75" stop-color="#d32800"/><stop offset=".8164" stop-color="#e37c00"/><stop offset=".8745" stop-color="#e99700"/><stop offset=".8911" stop-color="#e68700"/><stop offset=".916" stop-color="#d73b00"/><stop offset=".9284" stop-color="#cb1900"/><stop offset=".9429" stop-color="#923d02"/><stop offset=".9512" stop-color="#655d07"/><stop offset=".9803" stop-color="#6d5706"/><stop offset=".9969" stop-color="#7d4c04"/><stop offset=".999" stop-color="#1a8a2d"/></linearGradient><linearGradient id="g70" x2="0" y2="1"><stop offset=".001" stop-color="#0b942d"/><stop offset=".0031" stop-color="#0b9013"/><stop offset=".0778" stop-color="#228304"/><stop offset=".1566" stop-color="#6a6201"/><stop offset=".2023" stop-color="#964103"/><stop offset=".3849" stop-color="#c11701"/><stop offset=".6234" stop-color="#d01e00"/><stop offset=".7479" stop-color="#d32900"/><stop offset=".8122" stop-color="#e58300"/><stop offset=".8683" stop-color="#eba300"/><stop offset=".8869" stop-color="#ea9b00"/><stop offset=".9098" stop-color="#dd5b00"/><stop offset=".9284" stop-color="#cd1a00"/><stop offset=".9409" stop-color="#a33202"/><stop offset=".9512" stop-color="#695a06"/><stop offset=".9782" stop-color="#6b5906"/><stop offset=".9969" stop-color="#7d4c04"/><stop offset=".999" stop-color="#1a8a2d"/></linearGradient><linearGradient id="g71" x2="0" y2="1"><stop offset=".001" stop-color="#0b942d"/><stop offset=".0031" stop-color="#0b9013"/><stop offset=".0259" stop-color="#0c9012"/><stop offset=".0342" stop-color="#138b09"/><stop offset=".1131" stop-color="#357a02"/><stop offset=".2044" stop-color="#8c4a02"/><stop offset=".3828" stop-color="#c11701"/><stop offset=".6172" stop-color="#d01d00"/><stop offset=".7459" stop-color="#d32900"/><stop offset=".8081" stop-color="#e58700"/><stop offset=".8641" stop-color="#edad00"/><stop offset=".8849" stop-color="#eca900"/><stop offset=".9077" stop-color="#e06c00"/><stop offset=".9284" stop-color="#cf1d00"/><stop offset=".9388" stop-color="#b02801"/><stop offset=".9533" stop-color="#655d07"/><stop offset=".9803" stop-color="#6d5706"/><stop offset=".9969" stop-color="#7d4c04"/><stop offset=".999" stop-color="#1a8a2d"/></linearGradient><linearGradient id="g72" x2="0" y2="1"><stop offset=".001" stop-color="#0b942d"/><stop offset=".0031" stop-color="#0b9013"/><stop offset=".0259" stop-color="#0c9012"/><stop offset=".0301" stop-color="#188806"/><stop offset=".138" stop-color="#2f7d03"/><stop offset=".2376" stop-color="#676201"/><stop offset=".4616" stop-color="#b52202"/><stop offset=".6359" stop-color="#cc1700"/><stop offset=".7376" stop-color="#d01f00"/><stop offset=".8081" stop-color="#e68b00"/><stop offset=".862" stop-color="#eeb100"/><stop offset=".8849" stop-color="#eeae00"/><stop offset=".9077" stop-color="#e17100"/><stop offset=".9305" stop-color="#ce1b00"/><stop offset=".9429" stop-color="#a43102"/><stop offset=".9554" stop-color="#655d07"/><stop offset=".9803" stop-color="#6d5706"/><stop offset=".9969" stop-color="#7d4c04"/><stop offset=".999" stop-color="#1a8a2d"/></linearGradient><linearGradient id="g73" x2="0" y2="1"><stop offset=".001" stop-color="#0b942d"/><stop offset=".0031" stop-color="#0b9013"/><stop offset=".1629" stop-color="#148b0f"/><stop offset=".167" stop-color="#1e8608"/><stop offset=".4139" stop-color="#765602"/><stop offset=".5799" stop-color="#b42302"/><stop offset=".6068" stop-color="#c91601"/><stop offset=".7334" stop-color="#ce1b00"/><stop offset=".8081" stop-color="#e78d00"/><stop offset=".862" stop-color="#efb400"/><stop offset=".8849" stop-color="#eeb100"/><stop offset=".9077" stop-color="#e27500"/><stop offset=".9326" stop-color="#cc1a00"/><stop offset=".9471" stop-color="#953b02"/><stop offset=".9554" stop-color="#655d07"/><stop offset=".9803" stop-color="#6d5706"/><stop offset=".9969" stop-color="#7d4c04"/><stop offset=".999" stop-color="#1a8a2d"/></linearGradient><linearGradient id="g74" x2="0" y2="1"><stop offset=".001" stop-color="#0b942d"/><stop offset=".0031" stop-color="#0b9013"/><stop offset=".3475" stop-color="#27820a"/><stop offset=".5508" stop-color="#745602"/><stop offset=".582" stop-color="#b81f02"/><stop offset=".6089" stop-color="#c91601"/><stop offset=".7334" stop-color="#ce1b00"/><stop offset=".8102" stop-color="#e78e00"/><stop offset=".8641" stop-color="#efb300"/><stop offset=".8849" stop-color="#eeaf00"/><stop offset=".9077" stop-color="#e27600"/><stop offset=".9326" stop-color="#ce1b00"/><stop offset=".9429" stop-color="#ae2a01"/><stop offset=".9575" stop-color="#655d07"/><stop offset=".9824" stop-color="#6f5606"/><stop offset=".9969" stop-color="#7d4c04"/><stop offset=".999" stop-color="#1a8a2d"/></linearGradient><linearGradient id="g75" x2="0" y2="1"><stop offset=".001" stop-color="#0b942d"/><stop offset=".0031" stop-color="#0b9013"/><stop offset=".5156" stop-color="#2c800d"/><stop offset=".5571" stop-color="#884702"/><stop offset=".5861" stop-color="#bf1b01"/><stop offset=".6131" stop-color="#c91601"/><stop offset=".7334" stop-color="#ce1a00"/><stop offset=".8102" stop-color="#e78d00"/><stop offset=".8641" stop-color="#eeb100"/><stop offset=".8869" stop-color="#edaa00"/><stop offset=".9118" stop-color="#df6900"/><stop offset=".9346" stop-color="#cd1a00"/><stop offset=".9492" stop-color="#983a02"/><stop offset=".9575" stop-color="#675b07"/><stop offset=".9782" stop-color="#6b5906"/><stop offset=".9969" stop-color="#7d4c04"/><stop offset=".999" stop-color="#1a8a2d"/></linearGradient><linearGradient id="g76" x2="0" y2="1"><stop offset=".001" stop-color="#0b942d"/><stop offset=".0031" stop-color="#0b9013"/><stop offset=".5156" stop-color="#2c800d"/><stop offset=".5571" stop-color="#8b4502"/><stop offset=".5861" stop-color="#c01a01"/><stop offset=".6193" stop-color="#c91601"/><stop offset=".7334" stop-color="#ce1a00"/><stop offset=".8122" stop-color="#e78c00"/><stop offset=".8662" stop-color="#eeae00"/><stop offset=".8869" stop-color="#eca800"/><stop offset=".9118" stop-color="#df6a00"/><stop offset=".9346" stop-color="#cf1c00"/><stop offset=".9471" stop-color="#a72e02"/><stop offset=".9595" stop-color="#655d07"/><stop offset=".9824" stop-color="#6f5606"/><stop offset=".9969" stop-color="#7d4c04"/><stop offset=".999" stop-color="#1a8a2d"/></linearGradient><linearGradient id="g77" x2="0" y2="1"><stop offset=".001" stop-color="#0b942d"/><stop offset=".0031" stop-color="#0b9013"/><stop offset=".5135" stop-color="#2c800d"/><stop offset=".555" stop-color="#884702"/><stop offset=".584" stop-color="#bf1a01"/><stop offset=".611" stop-color="#c91601"/><stop offset=".7334" stop-color="#cd1a00"/><stop offset=".8122" stop-color="#e68c00"/><stop offset=".8662" stop-color="#eeae00"/><stop offset=".8869" stop-color="#eca800"/><stop offset=".9139" stop-color="#df6500"/><stop offset=".9367" stop-color="#cd1a00"/><stop offset=".9512" stop-color="#9a3802"/><stop offset=".9616" stop-color="#655d07"/><stop offset=".9865" stop-color="#735305"/><stop offset=".9969" stop-color="#7d4c04"/><stop offset=".999" stop-color="#1a8a2d"/></linearGradient><linearGradient id="g78" x2="0" y2="1"><stop offset=".001" stop-color="#0b942d"/><stop offset=".0031" stop-color="#0b9013"/><stop offset=".4969" stop-color="#317d0b"/><stop offset=".5218" stop-color="#407507"/><stop offset=".555" stop-color="#8b4502"/><stop offset=".584" stop-color="#c01a01"/><stop offset=".6172" stop-color="#c91601"/><stop offset=".7334" stop-color="#ce1b00"/><stop offset=".8102" stop-color="#e78e00"/><stop offset=".8641" stop-color="#efb300"/><stop offset=".8869" stop-color="#edad00"/><stop offset=".9139" stop-color="#e06a00"/><stop offset=".9367" stop-color="#cf1c00"/><stop offset=".9409" stop-color="#c81901"/><stop offset=".9554" stop-color="#8a4303"/><stop offset=".9616" stop-color="#655d07"/><stop offset=".9865" stop-color="#735305"/><stop offset=".9969" stop-color="#7d4c04"/><stop offset=".999" stop-color="#1a8a2d"/></linearGradient><linearGradient id="g79" x2="0" y2="1"><stop offset=".001" stop-color="#0b942d"/><stop offset=".0031" stop-color="#0b9013"/><stop offset=".3371" stop-color="#26830a"/><stop offset=".5467" stop-color="#775402"/><stop offset=".5757" stop-color="#b72102"/><stop offset=".6027" stop-color="#c91601"/><stop offset=".7313" stop-color="#cd1a00"/><stop offset=".8081" stop-color="#e89300"/><stop offset=".86" stop-color="#f0ba00"/><stop offset=".8849" stop-color="#f0b800"/><stop offset=".9098" stop-color="#e47f00"/><stop offset=".9388" stop-color="#ce1b00"/><stop offset=".9512" stop-color="#a63002"/><stop offset=".9637" stop-color="#655d07"/><stop offset=".9969" stop-color="#7d4c04"/><stop offset=".999" stop-color="#1a8a2d"/></linearGradient><linearGradient id="g80" x2="0" y2="1"><stop offset=".001" stop-color="#0b942d"/><stop offset=".0031" stop-color="#0b9013"/><stop offset=".1857" stop-color="#158b0f"/><stop offset=".1919" stop-color="#208509"/><stop offset=".445" stop-color="#814e02"/><stop offset=".5654" stop-color="#ae2802"/><stop offset=".5923" stop-color="#ca1601"/><stop offset=".7313" stop-color="#ce1a00"/><stop offset=".806" stop-color="#e89600"/><stop offset=".8579" stop-color="#f2c000"/><stop offset=".8849" stop-color="#f1bf00"/><stop offset=".9098" stop-color="#e58500"/><stop offset=".9409" stop-color="#cd1a00"/><stop offset=".9554" stop-color="#983a02"/><stop offset=".9637" stop-color="#675b07"/><stop offset=".9824" stop-color="#6f5606"/><stop offset=".9969" stop-color="#7d4c04"/><stop offset=".999" stop-color="#1a8a2d"/></linearGradient><linearGradient id="g81" x2="0" y2="1"><stop offset=".001" stop-color="#0b942d"/><stop offset=".0031" stop-color="#0b9013"/><stop offset=".0488" stop-color="#0d8f11"/><stop offset=".0508" stop-color="#1a8706"/><stop offset=".1483" stop-color="#337c03"/><stop offset=".4118" stop-color="#a23302"/><stop offset=".5882" stop-color="#ca1501"/><stop offset=".7334" stop-color="#d01d00"/><stop offset=".8019" stop-color="#e89500"/><stop offset=".8537" stop-color="#f2c300"/><stop offset=".8849" stop-color="#f3c400"/><stop offset=".9098" stop-color="#e68a00"/><stop offset=".9409" stop-color="#cf1c00"/><stop offset=".9512" stop-color="#b02901"/><stop offset=".9658" stop-color="#655d07"/><stop offset=".9969" stop-color="#7d4c04"/><stop offset=".999" stop-color="#1a8a2d"/></linearGradient><linearGradient id="g82" x2="0" y2="1"><stop offset=".001" stop-color="#0b942d"/><stop offset=".0031" stop-color="#0b9013"/><stop offset=".0114" stop-color="#148a07"/><stop offset=".1006" stop-color="#327c02"/><stop offset=".1898" stop-color="#7a5702"/><stop offset=".3869" stop-color="#bb1c02"/><stop offset=".5633" stop-color="#ce1800"/><stop offset=".7396" stop-color="#d32900"/><stop offset=".7977" stop-color="#e89400"/><stop offset=".8475" stop-color="#f3c700"/><stop offset=".8849" stop-color="#f4ca00"/><stop offset=".9077" stop-color="#e99700"/><stop offset=".9429" stop-color="#ce1b00"/><stop offset=".9554" stop-color="#a43102"/><stop offset=".9678" stop-color="#655d07"/><stop offset=".9969" stop-color="#7d4c04"/><stop offset=".999" stop-color="#1a8a2d"/></linearGradient><linearGradient id="g83" x2="0" y2="1"><stop offset=".001" stop-color="#0b942d"/><stop offset=".0031" stop-color="#0b9013"/><stop offset=".0612" stop-color="#248203"/><stop offset=".1463" stop-color="#745c01"/><stop offset=".1836" stop-color="#954203"/><stop offset=".3724" stop-color="#c11701"/><stop offset=".6151" stop-color="#d01d00"/><stop offset=".7376" stop-color="#d22700"/><stop offset=".7977" stop-color="#e99a00"/><stop offset=".8454" stop-color="#f5cc00"/><stop offset=".8849" stop-color="#f6d100"/><stop offset=".9077" stop-color="#ea9e00"/><stop offset=".9429" stop-color="#cf1d00"/><stop offset=".9471" stop-color="#c81901"/><stop offset=".9616" stop-color="#8a4303"/><stop offset=".9678" stop-color="#655d07"/><stop offset=".9969" stop-color="#7d4c04"/><stop offset=".999" stop-color="#1a8a2d"/></linearGradient><linearGradient id="g84" x2="0" y2="1"><stop offset=".001" stop-color="#0b942d"/><stop offset=".0031" stop-color="#0b9013"/><stop offset=".0612" stop-color="#248203"/><stop offset=".1463" stop-color="#745c01"/><stop offset=".1836" stop-color="#954203"/><stop offset=".3724" stop-color="#c11701"/><stop offset=".6151" stop-color="#d01d00"/><stop offset=".7376" stop-color="#d22700"/><stop offset=".7977" stop-color="#e99a00"/><stop offset=".8454" stop-color="#f5cc00"/><stop offset=".8849" stop-color="#f6d100"/><stop offset=".9077" stop-color="#ea9e00"/><stop offset=".9429" stop-color="#cf1c00"/><stop offset=".9533" stop-color="#b02901"/><stop offset=".9678" stop-color="#655d07"/><stop offset=".9969" stop-color="#7d4c04"/><stop offset=".999" stop-color="#1a8a2d"/></linearGradient><linearGradient id="g85" x2="0" y2="1"><stop offset=".001" stop-color="#0b942d"/><stop offset=".0031" stop-color="#0b9013"/><stop offset=".0114" stop-color="#148a07"/><stop offset=".1006" stop-color="#327c02"/><stop offset=".1898" stop-color="#7a5702"/><stop offset=".3869" stop-color="#bb1c02"/><stop offset=".5633" stop-color="#ce1800"/><stop offset=".7396" stop-color="#d32a00"/><stop offset=".7977" stop-color="#e99700"/><stop offset=".8475" stop-color="#f4ca00"/><stop offset=".8849" stop-color="#f5ce00"/><stop offset=".9077" stop-color="#e99a00"/><stop offset=".9429" stop-color="#ce1b00"/><stop offset=".9554" stop-color="#a62f02"/><stop offset=".9678" stop-color="#655d07"/><stop offset=".9969" stop-color="#7d4c04"/><stop offset=".999" stop-color="#1a8a2d"/></linearGradient><linearGradient id="g86" x2="0" y2="1"><stop offset=".001" stop-color="#0b942d"/><stop offset=".0031" stop-color="#0b9013"/><stop offset=".0488" stop-color="#0d8f11"/><stop offset=".0508" stop-color="#1a8706"/><stop offset=".1483" stop-color="#337c03"/><stop offset=".4118" stop-color="#a23302"/><stop offset=".5882" stop-color="#ca1501"/><stop offset=".7334" stop-color="#d01e00"/><stop offset=".7998" stop-color="#e99700"/><stop offset=".8496" stop-color="#f3c700"/><stop offset=".8849" stop-color="#f4ca00"/><stop offset=".9077" stop-color="#e99700"/><stop offset=".9429" stop-color="#ce1b00"/><stop offset=".9554" stop-color="#a43102"/><stop offset=".9678" stop-color="#655d07"/><stop offset=".9969" stop-color="#7d4c04"/><stop offset=".999" stop-color="#1a8a2d"/></linearGradient><linearGradient id="g87" x2="0" y2="1"><stop offset=".001" stop-color="#0b942d"/><stop offset=".0031" stop-color="#0b9013"/><stop offset=".1857" stop-color="#158b0f"/><stop offset=".1919" stop-color="#208509"/><stop offset=".445" stop-color="#814e02"/><stop offset=".5674" stop-color="#b12602"/><stop offset=".5944" stop-color="#c91601"/><stop offset=".7293" stop-color="#cd1a00"/><stop offset=".8039" stop-color="#ea9c00"/><stop offset=".8537" stop-color="#f4c800"/><stop offset=".8849" stop-color="#f4c900"/><stop offset=".9077" stop-color="#e89600"/><stop offset=".9429" stop-color="#cd1a00"/><stop offset=".9575" stop-color="#983902"/><stop offset=".9658" stop-color="#685a06"/><stop offset=".9824" stop-color="#6f5606"/><stop offset=".9969" stop-color="#7d4c04"/><stop offset=".999" stop-color="#1a8a2d"/></linearGradient><linearGradient id="g88" x2="0" y2="1"><stop offset=".001" stop-color="#0b942d"/><stop offset=".0031" stop-color="#0b9013"/><stop offset=".3371" stop-color="#26830a"/><stop offset=".5529" stop-color="#7a5202"/><stop offset=".582" stop-color="#b82002"/><stop offset=".6089" stop-color="#c91601"/><stop offset=".7293" stop-color="#cd1a00"/><stop offset=".8039" stop-color="#ea9e00"/><stop offset=".8537" stop-color="#f4cb00"/><stop offset=".8849" stop-color="#f4cb00"/><stop offset=".9077" stop-color="#e99700"/><stop offset=".9429" stop-color="#cd1a00"/><stop offset=".9575" stop-color="#963a02"/><stop offset=".9658" stop-color="#665c07"/><stop offset=".9969" stop-color="#7d4c04"/><stop offset=".999" stop-color="#1a8a2d"/></linearGradient><linearGradient id="g89" x2="0" y2="1"><stop offset=".001" stop-color="#0b942d"/><stop offset=".0031" stop-color="#0b9013"/><stop offset=".2355" stop-color="#19890e"/><stop offset=".2521" stop-color="#20850b"/><stop offset=".3641" stop-color="#347b07"/><stop offset=".5674" stop-color="#884802"/><stop offset=".5965" stop-color="#bf1b01"/><stop offset=".6234" stop-color="#c91601"/><stop offset=".7293" stop-color="#ce1a00"/><stop offset=".8019" stop-color="#ea9e00"/><stop offset=".8496" stop-color="#f5cd00"/><stop offset=".8849" stop-color="#f5cf00"/><stop offset=".9077" stop-color="#e99a00"/><stop offset=".9409" stop-color="#cf1d00"/><stop offset=".9512" stop-color="#b12801"/><stop offset=".9658" stop-color="#655d07"/><stop offset=".9969" stop-color="#7d4c04"/><stop offset=".999" stop-color="#1a8a2d"/></linearGradient><linearGradient id="g90" x2="0" y2="1"><stop offset=".001" stop-color="#0b942d"/><stop offset=".0031" stop-color="#0b9013"/><stop offset=".2936" stop-color="#23840a"/><stop offset=".3828" stop-color="#596802"/><stop offset=".4284" stop-color="#735802"/><stop offset=".5902" stop-color="#a62f02"/><stop offset=".6172" stop-color="#c81601"/><stop offset=".7293" stop-color="#ce1a00"/><stop offset=".8019" stop-color="#eba000"/><stop offset=".8496" stop-color="#f5cf00"/><stop offset=".8849" stop-color="#f6d200"/><stop offset=".9056" stop-color="#eba200"/><stop offset=".9409" stop-color="#cf1c00"/><stop offset=".9512" stop-color="#af2901"/><stop offset=".9658" stop-color="#655d07"/><stop offset=".9969" stop-color="#7d4c04"/><stop offset=".999" stop-color="#1a8a2d"/></linearGradient><linearGradient id="g91" x2="0" y2="1"><stop offset=".001" stop-color="#0b942d"/><stop offset=".0031" stop-color="#0b9013"/><stop offset=".2355" stop-color="#1a890e"/><stop offset=".3724" stop-color="#387a06"/><stop offset=".5902" stop-color="#914002"/><stop offset=".6193" stop-color="#c21901"/><stop offset=".7064" stop-color="#c81801"/><stop offset=".7334" stop-color="#d01f00"/><stop offset=".7977" stop-color="#e99800"/><stop offset=".8454" stop-color="#f4cb00"/><stop offset=".8849" stop-color="#f5cf00"/><stop offset=".9056" stop-color="#ea9f00"/><stop offset=".9409" stop-color="#ce1b00"/><stop offset=".9512" stop-color="#ae2a01"/><stop offset=".9658" stop-color="#655d07"/><stop offset=".9969" stop-color="#7d4c04"/><stop offset=".999" stop-color="#1a8a2d"/></linearGradient><linearGradient id="g92" x2="0" y2="1"><stop offset=".001" stop-color="#0b942d"/><stop offset=".0031" stop-color="#0b9013"/><stop offset=".5197" stop-color="#367a09"/><stop offset=".5695" stop-color="#4b6f05"/><stop offset=".6068" stop-color="#a13302"/><stop offset=".6338" stop-color="#c71701"/><stop offset=".7293" stop-color="#cd1a00"/><stop offset=".8039" stop-color="#ea9e00"/><stop offset=".8537" stop-color="#f4cb00"/><stop offset=".8849" stop-color="#f4cb00"/><stop offset=".9077" stop-color="#e89500"/><stop offset=".9409" stop-color="#ce1b00"/><stop offset=".9533" stop-color="#a33102"/><stop offset=".9658" stop-color="#655d07"/><stop offset=".9969" stop-color="#7d4c04"/><stop offset=".999" stop-color="#1a8a2d"/></linearGradient><linearGradient id="g93" x2="0" y2="1"><stop offset=".001" stop-color="#0b942d"/><stop offset=".0031" stop-color="#0b9013"/><stop offset=".5695" stop-color="#3a7809"/><stop offset=".6048" stop-color="#864902"/><stop offset=".6338" stop-color="#be1c01"/><stop offset=".6608" stop-color="#c91701"/><stop offset=".7313" stop-color="#cf1c00"/><stop offset=".8019" stop-color="#e99800"/><stop offset=".8517" stop-color="#f3c700"/><stop offset=".8849" stop-color="#f4c800"/><stop offset=".9077" stop-color="#e89200"/><stop offset=".9409" stop-color="#cd1a00"/><stop offset=".9554" stop-color="#973a02"/><stop offset=".9637" stop-color="#675b07"/><stop offset=".9824" stop-color="#6f5606"/><stop offset=".9969" stop-color="#7d4c04"/><stop offset=".999" stop-color="#1a8a2d"/></linearGradient><linearGradient id="g94" x2="0" y2="1"><stop offset=".001" stop-color="#0b942d"/><stop offset=".0031" stop-color="#0b9013"/><stop offset=".5799" stop-color="#3c7709"/><stop offset=".6151" stop-color="#884702"/><stop offset=".6442" stop-color="#be1b01"/><stop offset=".6732" stop-color="#c91701"/><stop offset=".7313" stop-color="#cf1b00"/><stop offset=".8019" stop-color="#e99800"/><stop offset=".8517" stop-color="#f3c600"/><stop offset=".8849" stop-color="#f3c700"/><stop offset=".9077" stop-color="#e79100"/><stop offset=".9409" stop-color="#cc1a00"/><stop offset=".9554" stop-color="#953b02"/><stop offset=".9637" stop-color="#655d07"/><stop offset=".9969" stop-color="#7d4c04"/><stop offset=".999" stop-color="#1a8a2d"/></linearGradient><linearGradient id="g95" x2="0" y2="1"><stop offset=".001" stop-color="#0b942d"/><stop offset=".0031" stop-color="#0b9013"/><stop offset=".5882" stop-color="#3a7809"/><stop offset=".6255" stop-color="#8b4502"/><stop offset=".6546" stop-color="#bf1b01"/><stop offset=".6857" stop-color="#c81701"/><stop offset=".7334" stop-color="#d01d00"/><stop offset=".806" stop-color="#e79000"/><stop offset=".86" stop-color="#f0ba00"/><stop offset=".8869" stop-color="#f0b700"/><stop offset=".9118" stop-color="#e27700"/><stop offset=".9367" stop-color="#ce1c00"/><stop offset=".9471" stop-color="#af2901"/><stop offset=".9616" stop-color="#655d07"/><stop offset=".9865" stop-color="#735305"/><stop offset=".9969" stop-color="#7d4c04"/><stop offset=".999" stop-color="#1a8a2d"/></linearGradient><linearGradient id="g96" x2="0" y2="1"><stop offset=".001" stop-color="#0b942d"/><stop offset=".0031" stop-color="#0b9013"/><stop offset=".5985" stop-color="#3c7709"/><stop offset=".6338" stop-color="#884702"/><stop offset=".6629" stop-color="#be1c01"/><stop offset=".6898" stop-color="#c81701"/><stop offset=".7355" stop-color="#d01e00"/><stop offset=".8102" stop-color="#e68800"/><stop offset=".8683" stop-color="#edac00"/><stop offset=".889" stop-color="#eca600"/><stop offset=".9139" stop-color="#de6300"/><stop offset=".9346" stop-color="#cd1a00"/><stop offset=".9471" stop-color="#a33102"/><stop offset=".9575" stop-color="#695a06"/><stop offset=".9782" stop-color="#6b5906"/><stop offset=".9969" stop-color="#7d4c04"/><stop offset=".999" stop-color="#1a8a2d"/></linearGradient><linearGradient id="g97" x2="0" y2="1"><stop offset=".001" stop-color="#0b942d"/><stop offset=".0031" stop-color="#0b9013"/><stop offset=".6089" stop-color="#3e7609"/><stop offset=".6442" stop-color="#8a4502"/><stop offset=".6732" stop-color="#bf1c01"/><stop offset=".7044" stop-color="#c81801"/><stop offset=".7396" stop-color="#d12100"/><stop offset=".8143" stop-color="#e47f00"/><stop offset=".8745" stop-color="#ea9d00"/><stop offset=".8911" stop-color="#e89500"/><stop offset=".9139" stop-color="#dc5700"/><stop offset=".9326" stop-color="#cc1900"/><stop offset=".9471" stop-color="#953b02"/><stop offset=".9554" stop-color="#655d07"/><stop offset=".9803" stop-color="#6d5706"/><stop offset=".9969" stop-color="#7d4c04"/><stop offset=".999" stop-color="#1a8a2d"/></linearGradient><linearGradient id="g98" x2="0" y2="1"><stop offset=".001" stop-color="#0b942d"/><stop offset=".0031" stop-color="#0b9013"/><stop offset=".6193" stop-color="#3f7509"/><stop offset=".6546" stop-color="#8c4402"/><stop offset=".6836" stop-color="#c01b01"/><stop offset=".7147" stop-color="#c81801"/><stop offset=".7417" stop-color="#d22300"/><stop offset=".8143" stop-color="#e47f00"/><stop offset=".8745" stop-color="#ea9c00"/><stop offset=".8911" stop-color="#e89400"/><stop offset=".9139" stop-color="#dc5600"/><stop offset=".9326" stop-color="#cc1900"/><stop offset=".9471" stop-color="#953b02"/><stop offset=".9554" stop-color="#655d07"/><stop offset=".9803" stop-color="#6d5706"/><stop offset=".9969" stop-color="#7d4c04"/><stop offset=".999" stop-color="#1a8a2d"/></linearGradient><linearGradient id="g99" x2="0" y2="1"><stop offset=".001" stop-color="#0b942d"/><stop offset=".0031" stop-color="#0b9013"/><stop offset=".6255" stop-color="#3f7509"/><stop offset=".6608" stop-color="#8c4402"/><stop offset=".6898" stop-color="#c01b01"/><stop offset=".721" stop-color="#c81801"/><stop offset=".7479" stop-color="#d32b00"/><stop offset=".8164" stop-color="#e47f00"/><stop offset=".8766" stop-color="#ea9b00"/><stop offset=".8932" stop-color="#e78f00"/><stop offset=".916" stop-color="#da4e00"/><stop offset=".9326" stop-color="#cc1900"/><stop offset=".9471" stop-color="#953b02"/><stop offset=".9554" stop-color="#655d07"/><stop offset=".9803" stop-color="#6d5706"/><stop offset=".9969" stop-color="#7d4c04"/><stop offset=".999" stop-color="#1a8a2d"/></linearGradient><linearGradient id="g100" x2="0" y2="1"><stop offset=".001" stop-color="#0b942d"/><stop offset=".0031" stop-color="#0b9013"/><stop offset=".6317" stop-color="#407509"/><stop offset=".667" stop-color="#8c4402"/><stop offset=".6961" stop-color="#bf1b01"/><stop offset=".7376" stop-color="#d01e00"/><stop offset=".8164" stop-color="#e37d00"/><stop offset=".8786" stop-color="#e99900"/><stop offset=".8952" stop-color="#e68900"/><stop offset=".9201" stop-color="#d73e00"/><stop offset=".9326" stop-color="#cc1900"/><stop offset=".9471" stop-color="#953b02"/><stop offset=".9554" stop-color="#655d07"/><stop offset=".9803" stop-color="#6d5706"/><stop offset=".9969" stop-color="#7d4c04"/><stop offset=".999" stop-color="#1a8a2d"/></linearGradient><linearGradient id="g101" x2="0" y2="1"><stop offset=".001" stop-color="#0b942d"/><stop offset=".0031" stop-color="#0b9013"/><stop offset=".638" stop-color="#407509"/><stop offset=".6732" stop-color="#8c4402"/><stop offset=".7044" stop-color="#c11a01"/><stop offset=".7396" stop-color="#d01f00"/><stop offset=".8185" stop-color="#e37c00"/><stop offset=".8807" stop-color="#e89600"/><stop offset=".8994" stop-color="#e37d00"/><stop offset=".9326" stop-color="#cc1900"/><stop offset=".9471" stop-color="#953b02"/><stop offset=".9554" stop-color="#655d07"/><stop offset=".9803" stop-color="#6d5706"/><stop offset=".9969" stop-color="#7d4c04"/><stop offset=".999" stop-color="#1a8a2d"/></linearGradient><linearGradient id="g102" x2="0" y2="1"><stop offset=".001" stop-color="#0b942d"/><stop offset=".0031" stop-color="#0b9013"/><stop offset=".6442" stop-color="#407509"/><stop offset=".6795" stop-color="#8c4402"/><stop offset=".7106" stop-color="#c11a01"/><stop offset=".7396" stop-color="#d01f00"/><stop offset=".8205" stop-color="#e37b00"/><stop offset=".8828" stop-color="#e89200"/><stop offset=".9035" stop-color="#e17000"/><stop offset=".9326" stop-color="#cc1900"/><stop offset=".9471" stop-color="#953b02"/><stop offset=".9554" stop-color="#655d07"/><stop offset=".9803" stop-color="#6d5706"/><stop offset=".9969" stop-color="#7d4c04"/><stop offset=".999" stop-color="#1a8a2d"/></linearGradient><linearGradient id="g103" x2="0" y2="1"><stop offset=".001" stop-color="#0b942d"/><stop offset=".0031" stop-color="#0b9013"/><stop offset=".6504" stop-color="#407509"/><stop offset=".6857" stop-color="#8c4402"/><stop offset=".7168" stop-color="#c11b01"/><stop offset=".7417" stop-color="#d12000"/><stop offset=".8205" stop-color="#e37a00"/><stop offset=".8828" stop-color="#e89100"/><stop offset=".9035" stop-color="#e16f00"/><stop offset=".9326" stop-color="#cc1900"/><stop offset=".9471" stop-color="#953b02"/><stop offset=".9554" stop-color="#655d07"/><stop offset=".9803" stop-color="#6d5706"/><stop offset=".9969" stop-color="#7d4c04"/><stop offset=".999" stop-color="#1a8a2d"/></linearGradient><linearGradient id="g104" x2="0" y2="1"><stop offset=".001" stop-color="#0b942d"/><stop offset=".0031" stop-color="#0b9013"/><stop offset=".6566" stop-color="#407509"/><stop offset=".6919" stop-color="#8c4402"/><stop offset=".7251" stop-color="#c61801"/><stop offset=".7541" stop-color="#d43000"/><stop offset=".8205" stop-color="#e37b00"/><stop offset=".8828" stop-color="#e89300"/><stop offset=".9035" stop-color="#e17000"/><stop offset=".9326" stop-color="#cc1900"/><stop offset=".9471" stop-color="#953b02"/><stop offset=".9554" stop-color="#655d07"/><stop offset=".9803" stop-color="#6d5706"/><stop offset=".9969" stop-color="#7d4c04"/><stop offset=".999" stop-color="#1a8a2d"/></linearGradient><linearGradient id="g105" x2="0" y2="1"><stop offset=".001" stop-color="#0b942d"/><stop offset=".0031" stop-color="#0b9013"/><stop offset=".6629" stop-color="#407509"/><stop offset=".6981" stop-color="#8c4402"/><stop offset=".7251" stop-color="#c71801"/><stop offset=".7541" stop-color="#d53100"/><stop offset=".8205" stop-color="#e37d00"/><stop offset=".8828" stop-color="#e89500"/><stop offset=".9035" stop-color="#e17200"/><stop offset=".9326" stop-color="#cc1900"/><stop offset=".9471" stop-color="#953b02"/><stop offset=".9554" stop-color="#655d07"/><stop offset=".9803" stop-color="#6d5706"/><stop offset=".9969" stop-color="#7d4c04"/><stop offset=".999" stop-color="#1a8a2d"/></linearGradient><linearGradient id="g106" x2="0" y2="1"><stop offset=".001" stop-color="#0b942d"/><stop offset=".0031" stop-color="#0b9013"/><stop offset=".6691" stop-color="#407509"/><stop offset=".7002" stop-color="#814b02"/><stop offset=".7168" stop-color="#ba1f01"/><stop offset=".7355" stop-color="#cf1c00"/><stop offset=".8185" stop-color="#e37d00"/><stop offset=".8807" stop-color="#e99700"/><stop offset=".8994" stop-color="#e47e00"/><stop offset=".9326" stop-color="#cc1900"/><stop offset=".9471" stop-color="#953b02"/><stop offset=".9554" stop-color="#655d07"/><stop offset=".9803" stop-color="#6d5706"/><stop offset=".9969" stop-color="#7d4c04"/><stop offset=".999" stop-color="#1a8a2d"/></linearGradient><linearGradient id="g107" x2="0" y2="1"><stop offset=".001" stop-color="#0b942d"/><stop offset=".0031" stop-color="#0b9013"/><stop offset=".6774" stop-color="#447308"/><stop offset=".6961" stop-color="#675d04"/><stop offset=".7106" stop-color="#a92c02"/><stop offset=".7272" stop-color="#c91801"/><stop offset=".7666" stop-color="#d84300"/><stop offset=".8268" stop-color="#e58400"/><stop offset=".8849" stop-color="#e99600"/><stop offset=".9056" stop-color="#e06e00"/><stop offset=".9326" stop-color="#cc1900"/><stop offset=".9471" stop-color="#953b02"/><stop offset=".9554" stop-color="#655d07"/><stop offset=".9803" stop-color="#6d5706"/><stop offset=".9969" stop-color="#7d4c04"/><stop offset=".999" stop-color="#1a8a2d"/></linearGradient><linearGradient id="g108" x2="0" y2="1"><stop offset=".001" stop-color="#0b942d"/><stop offset=".0031" stop-color="#0b9013"/><stop offset=".6836" stop-color="#447309"/><stop offset=".6961" stop-color="#5b6505"/><stop offset=".6981" stop-color="#765303"/><stop offset=".7147" stop-color="#b52301"/><stop offset=".7313" stop-color="#cc1900"/><stop offset=".8226" stop-color="#e48000"/><stop offset=".8828" stop-color="#e99700"/><stop offset=".9035" stop-color="#e27400"/><stop offset=".9326" stop-color="#cc1900"/><stop offset=".9471" stop-color="#953b02"/><stop offset=".9554" stop-color="#655d07"/><stop offset=".9803" stop-color="#6d5706"/><stop offset=".9969" stop-color="#7d4c04"/><stop offset=".999" stop-color="#1a8a2d"/></linearGradient><linearGradient id="g109" x2="0" y2="1"><stop offset=".001" stop-color="#0b942d"/><stop offset=".0031" stop-color="#0b9013"/><stop offset=".667" stop-color="#407509"/><stop offset=".7023" stop-color="#8c4402"/><stop offset=".721" stop-color="#c01b01"/><stop offset=".7417" stop-color="#d12100"/><stop offset=".8185" stop-color="#e37b00"/><stop offset=".8807" stop-color="#e89500"/><stop offset=".8994" stop-color="#e37d00"/><stop offset=".9326" stop-color="#cc1900"/><stop offset=".9471" stop-color="#943c02"/><stop offset=".9554" stop-color="#655d07"/><stop offset=".9803" stop-color="#6d5706"/><stop offset=".9969" stop-color="#7d4c04"/><stop offset=".999" stop-color="#1a8a2d"/></linearGradient><linearGradient id="g110" x2="0" y2="1"><stop offset=".001" stop-color="#0b942d"/><stop offset=".0031" stop-color="#0b9013"/><stop offset=".6525" stop-color="#407509"/><stop offset=".6878" stop-color="#8c4402"/><stop offset=".7189" stop-color="#c11b01"/><stop offset=".7438" stop-color="#d12200"/><stop offset=".8205" stop-color="#e37a00"/><stop offset=".8828" stop-color="#e89200"/><stop offset=".9015" stop-color="#e27600"/><stop offset=".9326" stop-color="#cb1900"/><stop offset=".9471" stop-color="#933d02"/><stop offset=".9554" stop-color="#655d07"/><stop offset=".9803" stop-color="#6d5706"/><stop offset=".9969" stop-color="#7d4c04"/><stop offset=".999" stop-color="#1a8a2d"/></linearGradient><linearGradient id="g111" x2="0" y2="1"><stop offset=".001" stop-color="#0b942d"/><stop offset=".0031" stop-color="#0b9013"/><stop offset=".638" stop-color="#407509"/><stop offset=".6732" stop-color="#8c4402"/><stop offset=".7044" stop-color="#c11a01"/><stop offset=".7417" stop-color="#d01f00"/><stop offset=".8226" stop-color="#e37900"/><stop offset=".8849" stop-color="#e78f00"/><stop offset=".9056" stop-color="#df6a00"/><stop offset=".9305" stop-color="#ce1b00"/><stop offset=".9429" stop-color="#a62f02"/><stop offset=".9554" stop-color="#655d07"/><stop offset=".9803" stop-color="#6d5706"/><stop offset=".9969" stop-color="#7d4c04"/><stop offset=".999" stop-color="#1a8a2d"/></linearGradient><linearGradient id="g112" x2="0" y2="1"><stop offset=".001" stop-color="#0b942d"/><stop offset=".0031" stop-color="#0b9013"/><stop offset=".6234" stop-color="#3f7509"/><stop offset=".6587" stop-color="#8c4402"/><stop offset=".6878" stop-color="#c01b01"/><stop offset=".7189" stop-color="#c81801"/><stop offset=".7479" stop-color="#d22400"/><stop offset=".8247" stop-color="#e27800"/><stop offset=".8849" stop-color="#e78d00"/><stop offset=".9056" stop-color="#df6800"/><stop offset=".9305" stop-color="#ce1b00"/><stop offset=".9429" stop-color="#a63002"/><stop offset=".9554" stop-color="#655d07"/><stop offset=".9803" stop-color="#6d5706"/><stop offset=".9969" stop-color="#7d4c04"/><stop offset=".999" stop-color="#1a8a2d"/></linearGradient><linearGradient id="g113" x2="0" y2="1"><stop offset=".001" stop-color="#0b942d"/><stop offset=".0031" stop-color="#0b9013"/><stop offset=".6089" stop-color="#3f7508"/><stop offset=".6442" stop-color="#8c4402"/><stop offset=".6732" stop-color="#c01b01"/><stop offset=".7064" stop-color="#c81801"/><stop offset=".7459" stop-color="#d12100"/><stop offset=".8247" stop-color="#e27500"/><stop offset=".8849" stop-color="#e68a00"/><stop offset=".9035" stop-color="#e06c00"/><stop offset=".9305" stop-color="#ce1b00"/><stop offset=".9429" stop-color="#a53002"/><stop offset=".9554" stop-color="#655d07"/><stop offset=".9803" stop-color="#6d5706"/><stop offset=".9969" stop-color="#7d4c04"/><stop offset=".999" stop-color="#1a8a2d"/></linearGradient><linearGradient id="g114" x2="0" y2="1"><stop offset=".001" stop-color="#0b942d"/><stop offset=".0031" stop-color="#0b9013"/><stop offset=".3517" stop-color="#2c7f08"/><stop offset=".6234" stop-color="#824b02"/><stop offset=".6566" stop-color="#bf1b01"/><stop offset=".6878" stop-color="#c81701"/><stop offset=".7417" stop-color="#cf1c00"/><stop offset=".8288" stop-color="#e27700"/><stop offset=".8869" stop-color="#e68800"/><stop offset=".9077" stop-color="#de6000"/><stop offset=".9305" stop-color="#cd1a00"/><stop offset=".945" stop-color="#9a3802"/><stop offset=".9554" stop-color="#655d07"/><stop offset=".9803" stop-color="#6d5706"/><stop offset=".9969" stop-color="#7d4c04"/><stop offset=".999" stop-color="#1a8a2d"/></linearGradient><linearGradient id="g115" x2="0" y2="1"><stop offset=".001" stop-color="#0b942d"/><stop offset=".0031" stop-color="#0b9013"/><stop offset=".2251" stop-color="#218409"/><stop offset=".3143" stop-color="#4b7002"/><stop offset=".3724" stop-color="#6c5d02"/><stop offset=".611" stop-color="#b62202"/><stop offset=".6442" stop-color="#c31901"/><stop offset=".7438" stop-color="#d01e00"/><stop offset=".8268" stop-color="#e27500"/><stop offset=".8869" stop-color="#e68900"/><stop offset=".9077" stop-color="#de6100"/><stop offset=".9305" stop-color="#cd1a00"/><stop offset=".945" stop-color="#993902"/><stop offset=".9533" stop-color="#695a06"/><stop offset=".9782" stop-color="#6b5906"/><stop offset=".9969" stop-color="#7d4c04"/><stop offset=".999" stop-color="#1a8a2d"/></linearGradient><linearGradient id="g116" x2="0" y2="1"><stop offset=".001" stop-color="#0b942d"/><stop offset=".0031" stop-color="#0b9013"/><stop offset=".2168" stop-color="#208509"/><stop offset=".2977" stop-color="#546c02"/><stop offset=".3517" stop-color="#815002"/><stop offset=".584" stop-color="#bb1e01"/><stop offset=".6691" stop-color="#c91701"/><stop offset=".7417" stop-color="#cf1c00"/><stop offset=".8268" stop-color="#e27700"/><stop offset=".8869" stop-color="#e68c00"/><stop offset=".9056" stop-color="#df6900"/><stop offset=".9305" stop-color="#cd1a00"/><stop offset=".945" stop-color="#983a02"/><stop offset=".9533" stop-color="#675b07"/><stop offset=".9782" stop-color="#6b5906"/><stop offset=".9969" stop-color="#7d4c04"/><stop offset=".999" stop-color="#1a8a2d"/></linearGradient><linearGradient id="g117" x2="0" y2="1"><stop offset=".001" stop-color="#0b942d"/><stop offset=".0031" stop-color="#0b9013"/><stop offset=".2251" stop-color="#218409"/><stop offset=".3143" stop-color="#4b7002"/><stop offset=".3724" stop-color="#6c5d02"/><stop offset=".611" stop-color="#b62202"/><stop offset=".6442" stop-color="#c31901"/><stop offset=".7417" stop-color="#cf1c00"/><stop offset=".8288" stop-color="#e27800"/><stop offset=".889" stop-color="#e68a00"/><stop offset=".9077" stop-color="#de6300"/><stop offset=".9305" stop-color="#cd1a00"/><stop offset=".945" stop-color="#963a02"/><stop offset=".9533" stop-color="#665c07"/><stop offset=".9803" stop-color="#6d5706"/><stop offset=".9969" stop-color="#7d4c04"/><stop offset=".999" stop-color="#1a8a2d"/></linearGradient><linearGradient id="g118" x2="0" y2="1"><stop offset=".001" stop-color="#0b942d"/><stop offset=".0031" stop-color="#0b9013"/><stop offset=".3517" stop-color="#2c7f08"/><stop offset=".6234" stop-color="#824b02"/><stop offset=".6566" stop-color="#bf1b01"/><stop offset=".6878" stop-color="#c81701"/><stop offset=".7438" stop-color="#cf1c00"/><stop offset=".8309" stop-color="#e27500"/><stop offset=".889" stop-color="#e58500"/><stop offset=".9077" stop-color="#de6000"/><stop offset=".9305" stop-color="#cc1900"/><stop offset=".945" stop-color="#953b02"/><stop offset=".9533" stop-color="#655d07"/><stop offset=".9803" stop-color="#6d5706"/><stop offset=".9969" stop-color="#7d4c04"/><stop offset=".999" stop-color="#1a8a2d"/></linearGradient><linearGradient id="g119" x2="0" y2="1"><stop offset=".001" stop-color="#0b942d"/><stop offset=".0031" stop-color="#0b9013"/><stop offset=".6089" stop-color="#3f7508"/><stop offset=".6442" stop-color="#8c4402"/><stop offset=".6732" stop-color="#c01b01"/><stop offset=".7064" stop-color="#c81801"/><stop offset=".75" stop-color="#d02000"/><stop offset=".833" stop-color="#e16f00"/><stop offset=".889" stop-color="#e47e00"/><stop offset=".9098" stop-color="#db5400"/><stop offset=".9305" stop-color="#cb1900"/><stop offset=".945" stop-color="#933d02"/><stop offset=".9533" stop-color="#655d07"/><stop offset=".9803" stop-color="#6d5706"/><stop offset=".9969" stop-color="#7d4c04"/><stop offset=".999" stop-color="#1a8a2d"/></linearGradient><linearGradient id="g120" x2="0" y2="1"><stop offset=".001" stop-color="#0b942d"/><stop offset=".0031" stop-color="#0b9013"/><stop offset=".6151" stop-color="#3f7609"/><stop offset=".6504" stop-color="#8b4402"/><stop offset=".6795" stop-color="#bf1b01"/><stop offset=".7106" stop-color="#c81801"/><stop offset=".7541" stop-color="#d12200"/><stop offset=".8371" stop-color="#e06c00"/><stop offset=".8911" stop-color="#e27700"/><stop offset=".9118" stop-color="#d94900"/><stop offset=".9305" stop-color="#ca1901"/><stop offset=".945" stop-color="#913e03"/><stop offset=".9533" stop-color="#655d07"/><stop offset=".9803" stop-color="#6d5706"/><stop offset=".9969" stop-color="#7d4c04"/><stop offset=".999" stop-color="#1a8a2d"/></linearGradient><linearGradient id="g121" x2="0" y2="1"><stop offset=".001" stop-color="#0b942d"/><stop offset=".0031" stop-color="#0b9013"/><stop offset=".6214" stop-color="#3e7609"/><stop offset=".6566" stop-color="#8a4502"/><stop offset=".6857" stop-color="#bf1c01"/><stop offset=".7168" stop-color="#c81801"/><stop offset=".7562" stop-color="#d12200"/><stop offset=".8392" stop-color="#e06a00"/><stop offset=".8911" stop-color="#e17300"/><stop offset=".9139" stop-color="#d74000"/><stop offset=".9305" stop-color="#c91901"/><stop offset=".945" stop-color="#8f4003"/><stop offset=".9533" stop-color="#655d07"/><stop offset=".9803" stop-color="#6d5706"/><stop offset=".9969" stop-color="#7d4c04"/><stop offset=".999" stop-color="#1a8a2d"/></linearGradient><linearGradient id="g122" x2="0" y2="1"><stop offset=".001" stop-color="#0b942d"/><stop offset=".0031" stop-color="#0b9013"/><stop offset=".6276" stop-color="#3d7609"/><stop offset=".6649" stop-color="#8e4202"/><stop offset=".694" stop-color="#c01b01"/><stop offset=".7521" stop-color="#d01e00"/><stop offset=".8413" stop-color="#df6900"/><stop offset=".8911" stop-color="#e17100"/><stop offset=".9139" stop-color="#d73e00"/><stop offset=".9305" stop-color="#c91901"/><stop offset=".945" stop-color="#8c4203"/><stop offset=".9512" stop-color="#675b07"/><stop offset=".9782" stop-color="#6b5906"/><stop offset=".9969" stop-color="#7d4c04"/><stop offset=".999" stop-color="#1a8a2d"/></linearGradient><linearGradient id="g123" x2="0" y2="1"><stop offset=".001" stop-color="#0b942d"/><stop offset=".0031" stop-color="#cf0c00"/><stop offset=".6193" stop-color="#d42d00"/><stop offset=".7936" stop-color="#d84400"/><stop offset=".862" stop-color="#e06e00"/><stop offset=".8932" stop-color="#e06c00"/><stop offset=".918" stop-color="#d63800"/><stop offset=".9699" stop-color="#c61e01"/><stop offset=".9969" stop-color="#ad2a01"/><stop offset=".999" stop-color="#1a8a2d"/></linearGradient><linearGradient id="g124" x2="0" y2="1"><stop offset=".001" stop-color="#0b942d"/><stop offset=".0031" stop-color="#e99500"/><stop offset=".5716" stop-color="#f7d500"/><stop offset=".9015" stop-color="#fae400"/><stop offset=".9886" stop-color="#d22900"/><stop offset=".9969" stop-color="#cc2000"/><stop offset=".999" stop-color="#1a8a2d"/></linearGradient><linearGradient id="g125" x2="0" y2="1"><stop offset=".001" stop-color="#0b942d"/><stop offset=".0031" stop-color="#e47e00"/><stop offset=".6006" stop-color="#f5cf00"/><stop offset=".9015" stop-color="#fae400"/><stop offset=".9886" stop-color="#d22900"/><stop offset=".9969" stop-color="#cc2000"/><stop offset=".999" stop-color="#1a8a2d"/></linearGradient><linearGradient id="g126" x2="0" y2="1"><stop offset=".001" stop-color="#0b942d"/><stop offset=".0031" stop-color="#d01400"/><stop offset=".4699" stop-color="#db5200"/><stop offset=".9015" stop-color="#f5ce00"/><stop offset=".9824" stop-color="#d22800"/><stop offset=".9969" stop-color="#c61e01"/><stop offset=".999" stop-color="#1a8a2d"/></linearGradient><linearGradient id="g127" x2="0" y2="1"><stop offset=".001" stop-color="#0b942d"/><stop offset=".0031" stop-color="#c50e01"/><stop offset=".4035" stop-color="#d11b00"/><stop offset=".528" stop-color="#d63700"/><stop offset=".9015" stop-color="#f0bb00"/><stop offset=".9761" stop-color="#d12800"/><stop offset=".9969" stop-color="#bd2101"/><stop offset=".999" stop-color="#1a8a2d"/></linearGradient><linearGradient id="g128" x2="0" y2="1"><stop offset=".001" stop-color="#0b942d"/><stop offset=".0031" stop-color="#198705"/><stop offset=".445" stop-color="#8c4602"/><stop offset=".5218" stop-color="#c11901"/><stop offset=".6048" stop-color="#d01d00"/><stop offset=".9015" stop-color="#e99900"/><stop offset=".9637" stop-color="#d12600"/><stop offset=".9844" stop-color="#bc2101"/><stop offset=".9969" stop-color="#9f3402"/><stop offset=".999" stop-color="#1a8a2d"/></linearGradient><linearGradient id="g129" x2="0" y2="1"><stop offset=".001" stop-color="#0b942d"/><stop offset=".0031" stop-color="#188705"/><stop offset=".4492" stop-color="#536b03"/><stop offset=".5633" stop-color="#ac2a02"/><stop offset=".6525" stop-color="#ca1701"/><stop offset=".7956" stop-color="#d63800"/><stop offset=".86" stop-color="#df6700"/><stop offset=".8932" stop-color="#df6600"/><stop offset=".945" stop-color="#d02500"/><stop offset=".9741" stop-color="#b82401"/><stop offset=".9969" stop-color="#884503"/><stop offset=".999" stop-color="#1a8a2d"/></linearGradient><linearGradient id="g130" x2="0" y2="1"><stop offset=".001" stop-color="#0b942d"/><stop offset=".0031" stop-color="#0b9013"/><stop offset=".6463" stop-color="#367b0c"/><stop offset=".6836" stop-color="#814b02"/><stop offset=".7147" stop-color="#bd1d01"/><stop offset=".7396" stop-color="#c81801"/><stop offset=".777" stop-color="#d12300"/><stop offset=".8517" stop-color="#de6200"/><stop offset=".8911" stop-color="#df6700"/><stop offset=".916" stop-color="#d42c00"/><stop offset=".9263" stop-color="#c91901"/><stop offset=".9409" stop-color="#8d4103"/><stop offset=".9471" stop-color="#685b06"/><stop offset=".9782" stop-color="#6b5906"/><stop offset=".9969" stop-color="#7d4c04"/><stop offset=".999" stop-color="#1a8a2d"/></linearGradient><linearGradient id="g131" x2="0" y2="1"><stop offset=".001" stop-color="#0b942d"/><stop offset=".0031" stop-color="#0b9013"/><stop offset=".6608" stop-color="#377a0c"/><stop offset=".6981" stop-color="#834a02"/><stop offset=".7293" stop-color="#bd1d01"/><stop offset=".7583" stop-color="#c81901"/><stop offset=".7956" stop-color="#d53200"/><stop offset=".86" stop-color="#de6200"/><stop offset=".8932" stop-color="#de6200"/><stop offset=".9243" stop-color="#cc1900"/><stop offset=".9388" stop-color="#953b02"/><stop offset=".9471" stop-color="#655d07"/><stop offset=".9782" stop-color="#6b5906"/><stop offset=".9969" stop-color="#7d4c04"/><stop offset=".999" stop-color="#1a8a2d"/></linearGradient><linearGradient id="g132" x2="0" y2="1"><stop offset=".001" stop-color="#0b942d"/><stop offset=".0031" stop-color="#0b9013"/><stop offset=".6732" stop-color="#327d0e"/><stop offset=".7147" stop-color="#8a4502"/><stop offset=".7459" stop-color="#c01c01"/><stop offset=".779" stop-color="#d12000"/><stop offset=".8558" stop-color="#dd5d00"/><stop offset=".8932" stop-color="#dd5e00"/><stop offset=".9243" stop-color="#cc1900"/><stop offset=".9388" stop-color="#973a02"/><stop offset=".9471" stop-color="#665c07"/><stop offset=".9782" stop-color="#6b5906"/><stop offset=".9969" stop-color="#7d4c04"/><stop offset=".999" stop-color="#1a8a2d"/></linearGradient><linearGradient id="g133" x2="0" y2="1"><stop offset=".001" stop-color="#0b942d"/><stop offset=".0031" stop-color="#0b9013"/><stop offset=".6878" stop-color="#367a0d"/><stop offset=".7251" stop-color="#814b02"/><stop offset=".7583" stop-color="#c41a01"/><stop offset=".7915" stop-color="#d32b00"/><stop offset=".86" stop-color="#dd5d00"/><stop offset=".8932" stop-color="#dd5d00"/><stop offset=".9263" stop-color="#c91901"/><stop offset=".9409" stop-color="#8d4103"/><stop offset=".9471" stop-color="#685b06"/><stop offset=".9782" stop-color="#6b5906"/><stop offset=".9969" stop-color="#7d4c04"/><stop offset=".999" stop-color="#1a8a2d"/></linearGradient><linearGradient id="g134" x2="0" y2="1"><stop offset=".001" stop-color="#0b942d"/><stop offset=".0031" stop-color="#0b9013"/><stop offset=".6878" stop-color="#367a0d"/><stop offset=".7251" stop-color="#814b02"/><stop offset=".7583" stop-color="#c41a01"/><stop offset=".7915" stop-color="#d32c00"/><stop offset=".86" stop-color="#dd5f00"/><stop offset=".8932" stop-color="#dd5e00"/><stop offset=".9263" stop-color="#c91901"/><stop offset=".9409" stop-color="#8e4003"/><stop offset=".9492" stop-color="#655d07"/><stop offset=".9803" stop-color="#6d5706"/><stop offset=".9969" stop-color="#7d4c04"/><stop offset=".999" stop-color="#1a8a2d"/></linearGradient><linearGradient id="g135" x2="0" y2="1"><stop offset=".001" stop-color="#0b942d"/><stop offset=".0031" stop-color="#0b9013"/><stop offset=".6878" stop-color="#367a0d"/><stop offset=".7251" stop-color="#814b02"/><stop offset=".7583" stop-color="#c51901"/><stop offset=".7915" stop-color="#d42d00"/><stop offset=".8579" stop-color="#de6200"/><stop offset=".8932" stop-color="#de6200"/><stop offset=".9263" stop-color="#ca1901"/><stop offset=".9409" stop-color="#903f03"/><stop offset=".9492" stop-color="#655d07"/><stop offset=".9803" stop-color="#6d5706"/><stop offset=".9969" stop-color="#7d4c04"/><stop offset=".999" stop-color="#1a8a2d"/></linearGradient><linearGradient id="g136" x2="0" y2="1"><stop offset=".001" stop-color="#0b942d"/><stop offset=".0031" stop-color="#0b9013"/><stop offset=".6878" stop-color="#367a0d"/><stop offset=".7251" stop-color="#814b02"/><stop offset=".7583" stop-color="#c61901"/><stop offset=".7936" stop-color="#d53100"/><stop offset=".8579" stop-color="#de6400"/><stop offset=".8932" stop-color="#de6400"/><stop offset=".9263" stop-color="#ca1901"/><stop offset=".9409" stop-color="#913e03"/><stop offset=".9492" stop-color="#655d07"/><stop offset=".9803" stop-color="#6d5706"/><stop offset=".9969" stop-color="#7d4c04"/><stop offset=".999" stop-color="#1a8a2d"/></linearGradient><linearGradient id="g137" x2="0" y2="1"><stop offset=".001" stop-color="#0b942d"/><stop offset=".0031" stop-color="#0b9013"/><stop offset=".6878" stop-color="#367a0d"/><stop offset=".7251" stop-color="#814b02"/><stop offset=".7583" stop-color="#c61901"/><stop offset=".7936" stop-color="#d53100"/><stop offset=".8579" stop-color="#df6500"/><stop offset=".8932" stop-color="#df6500"/><stop offset=".9263" stop-color="#cb1900"/><stop offset=".9409" stop-color="#933d02"/><stop offset=".9492" stop-color="#655d07"/><stop offset=".9803" stop-color="#6d5706"/><stop offset=".9969" stop-color="#7d4c04"/><stop offset=".999" stop-color="#1a8a2d"/></linearGradient><linearGradient id="g138" x2="0" y2="1"><stop offset=".001" stop-color="#0b942d"/><stop offset=".0031" stop-color="#0b9013"/><stop offset=".6878" stop-color="#367a0d"/><stop offset=".7251" stop-color="#814b02"/><stop offset=".7583" stop-color="#c61901"/><stop offset=".7936" stop-color="#d53200"/><stop offset=".8579" stop-color="#df6600"/><stop offset=".8932" stop-color="#df6600"/><stop offset=".9263" stop-color="#cb1900"/><stop offset=".9409" stop-color="#943c02"/><stop offset=".9492" stop-color="#655d07"/><stop offset=".9803" stop-color="#6d5706"/><stop offset=".9969" stop-color="#7d4c04"/><stop offset=".999" stop-color="#1a8a2d"/></linearGradient><linearGradient id="g139" x2="0" y2="1"><stop offset=".001" stop-color="#0b942d"/><stop offset=".0031" stop-color="#0b9013"/><stop offset=".6878" stop-color="#367a0d"/><stop offset=".7251" stop-color="#814b02"/><stop offset=".7562" stop-color="#c41a01"/><stop offset=".7853" stop-color="#d32a00"/><stop offset=".8517" stop-color="#df6500"/><stop offset=".8911" stop-color="#e06b00"/><stop offset=".9139" stop-color="#d63600"/><stop offset=".9284" stop-color="#c81901"/><stop offset=".9429" stop-color="#8a4303"/><stop offset=".9492" stop-color="#655d07"/><stop offset=".9803" stop-color="#6d5706"/><stop offset=".9969" stop-color="#7d4c04"/><stop offset=".999" stop-color="#1a8a2d"/></linearGradient><linearGradient id="g140" x2="0" y2="1"><stop offset=".001" stop-color="#0b942d"/><stop offset=".0031" stop-color="#0b9013"/><stop offset=".6504" stop-color="#367b0c"/><stop offset=".6878" stop-color="#814b02"/><stop offset=".7189" stop-color="#bd1d01"/><stop offset=".7438" stop-color="#c81801"/><stop offset=".777" stop-color="#d12200"/><stop offset=".8496" stop-color="#df6700"/><stop offset=".8911" stop-color="#e06e00"/><stop offset=".9139" stop-color="#d63800"/><stop offset=".9284" stop-color="#c81901"/><stop offset=".9429" stop-color="#8c4203"/><stop offset=".9492" stop-color="#665c07"/><stop offset=".9782" stop-color="#6b5906"/><stop offset=".9969" stop-color="#7d4c04"/><stop offset=".999" stop-color="#1a8a2d"/></linearGradient><linearGradient id="g141" x2="0" y2="1"><stop offset=".001" stop-color="#0b942d"/><stop offset=".0031" stop-color="#0b9013"/><stop offset=".6131" stop-color="#357b0c"/><stop offset=".6504" stop-color="#824b02"/><stop offset=".6815" stop-color="#bd1d01"/><stop offset=".7085" stop-color="#c81801"/><stop offset=".7687" stop-color="#ce1c00"/><stop offset=".8496" stop-color="#df6700"/><stop offset=".8911" stop-color="#e06e00"/><stop offset=".9139" stop-color="#d63900"/><stop offset=".9284" stop-color="#c91901"/><stop offset=".9429" stop-color="#8d4103"/><stop offset=".9492" stop-color="#685b06"/><stop offset=".9782" stop-color="#6b5906"/><stop offset=".9969" stop-color="#7d4c04"/><stop offset=".999" stop-color="#1a8a2d"/></linearGradient><linearGradient id="g142" x2="0" y2="1"><stop offset=".001" stop-color="#0b942d"/><stop offset=".0031" stop-color="#0b9013"/><stop offset=".6483" stop-color="#367b0c"/><stop offset=".6857" stop-color="#814b02"/><stop offset=".7168" stop-color="#bd1d01"/><stop offset=".7417" stop-color="#c81801"/><stop offset=".777" stop-color="#d12200"/><stop offset=".8496" stop-color="#df6600"/><stop offset=".8911" stop-color="#e06d00"/><stop offset=".9139" stop-color="#d63900"/><stop offset=".9284" stop-color="#c91901"/><stop offset=".9429" stop-color="#8e4003"/><stop offset=".9512" stop-color="#655d07"/><stop offset=".9803" stop-color="#6d5706"/><stop offset=".9969" stop-color="#7d4c04"/><stop offset=".999" stop-color="#1a8a2d"/></linearGradient><linearGradient id="g143" x2="0" y2="1"><stop offset=".001" stop-color="#0b942d"/><stop offset=".0031" stop-color="#0b9013"/><stop offset=".6836" stop-color="#367a0d"/><stop offset=".721" stop-color="#814b02"/><stop offset=".7562" stop-color="#c41a01"/><stop offset=".7853" stop-color="#d32a00"/><stop offset=".8517" stop-color="#de6400"/><stop offset=".8932" stop-color="#df6700"/><stop offset=".9284" stop-color="#ca1901"/><stop offset=".9429" stop-color="#903f03"/><stop offset=".9512" stop-color="#655d07"/><stop offset=".9803" stop-color="#6d5706"/><stop offset=".9969" stop-color="#7d4c04"/><stop offset=".999" stop-color="#1a8a2d"/></linearGradient><linearGradient id="g144" x2="0" y2="1"><stop offset=".001" stop-color="#0b942d"/><stop offset=".0031" stop-color="#0b9013"/><stop offset=".6753" stop-color="#367a0c"/><stop offset=".7127" stop-color="#814b02"/><stop offset=".7438" stop-color="#bc1e01"/><stop offset=".7749" stop-color="#d01f00"/><stop offset=".8517" stop-color="#de6200"/><stop offset=".8932" stop-color="#df6600"/><stop offset=".9284" stop-color="#ca1901"/><stop offset=".9429" stop-color="#913e03"/><stop offset=".9512" stop-color="#655d07"/><stop offset=".9803" stop-color="#6d5706"/><stop offset=".9969" stop-color="#7d4c04"/><stop offset=".999" stop-color="#1a8a2d"/></linearGradient><linearGradient id="g145" x2="0" y2="1"><stop offset=".001" stop-color="#0b942d"/><stop offset=".0031" stop-color="#0b9013"/><stop offset=".667" stop-color="#367b0c"/><stop offset=".7044" stop-color="#814b02"/><stop offset=".7355" stop-color="#bc1e01"/><stop offset=".7749" stop-color="#d01f00"/><stop offset=".8517" stop-color="#de6200"/><stop offset=".8932" stop-color="#df6600"/><stop offset=".9284" stop-color="#cb1901"/><stop offset=".9429" stop-color="#933d02"/><stop offset=".9512" stop-color="#655d07"/><stop offset=".9803" stop-color="#6d5706"/><stop offset=".9969" stop-color="#7d4c04"/><stop offset=".999" stop-color="#1a8a2d"/></linearGradient><linearGradient id="g146" x2="0" y2="1"><stop offset=".001" stop-color="#0b942d"/><stop offset=".0031" stop-color="#0b9013"/><stop offset=".6587" stop-color="#367b0c"/><stop offset=".6961" stop-color="#814b02"/><stop offset=".7272" stop-color="#bd1e01"/><stop offset=".7521" stop-color="#c81901"/><stop offset=".7832" stop-color="#d22600"/><stop offset=".8537" stop-color="#de6300"/><stop offset=".8932" stop-color="#df6600"/><stop offset=".9284" stop-color="#cb1900"/><stop offset=".9429" stop-color="#943c02"/><stop offset=".9512" stop-color="#655d07"/><stop offset=".9803" stop-color="#6d5706"/><stop offset=".9969" stop-color="#7d4c04"/><stop offset=".999" stop-color="#1a8a2d"/></linearGradient><linearGradient id="g147" x2="0" y2="1"><stop offset=".001" stop-color="#0b942d"/><stop offset=".0031" stop-color="#706101"/><stop offset=".7127" stop-color="#bd1d01"/><stop offset=".7749" stop-color="#d01f00"/><stop offset=".8517" stop-color="#de6200"/><stop offset=".8932" stop-color="#df6600"/><stop offset=".9284" stop-color="#cb1900"/><stop offset=".9388" stop-color="#b12801"/><stop offset=".9969" stop-color="#854703"/><stop offset=".999" stop-color="#1a8a2d"/></linearGradient><linearGradient id="g148" x2="0" y2="1"><stop offset=".001" stop-color="#0b942d"/><stop offset=".0031" stop-color="#904a03"/><stop offset=".3911" stop-color="#ba1d02"/><stop offset=".7707" stop-color="#ce1b00"/><stop offset=".8537" stop-color="#de6200"/><stop offset=".8932" stop-color="#df6700"/><stop offset=".9284" stop-color="#cc1900"/><stop offset=".9969" stop-color="#9b3702"/><stop offset=".999" stop-color="#1a8a2d"/></linearGradient><linearGradient id="g149" x2="0" y2="1"><stop offset=".001" stop-color="#0b942d"/><stop offset=".0031" stop-color="#d01400"/><stop offset=".5405" stop-color="#d53300"/><stop offset=".86" stop-color="#de6500"/><stop offset=".8952" stop-color="#df6500"/><stop offset=".972" stop-color="#cd2000"/><stop offset=".9969" stop-color="#bb2201"/><stop offset=".999" stop-color="#1a8a2d"/></linearGradient><linearGradient id="g150" x2="0" y2="1"><stop offset=".001" stop-color="#0b942d"/><stop offset=".0031" stop-color="#d94900"/><stop offset=".5384" stop-color="#e17200"/><stop offset=".9015" stop-color="#eba100"/><stop offset=".9865" stop-color="#d12700"/><stop offset=".9969" stop-color="#cc2000"/><stop offset=".999" stop-color="#1a8a2d"/></linearGradient><linearGradient id="g151" x2="0" y2="1"><stop offset=".001" stop-color="#0b942d"/><stop offset=".0031" stop-color="#d73c00"/><stop offset=".5405" stop-color="#e27500"/><stop offset=".9015" stop-color="#eeae00"/><stop offset=".9865" stop-color="#d12700"/><stop offset=".9969" stop-color="#cc2000"/><stop offset=".999" stop-color="#1a8a2d"/></linearGradient><linearGradient id="g152" x2="0" y2="1"><stop offset=".001" stop-color="#0b942d"/><stop offset=".0031" stop-color="#b42103"/><stop offset=".2459" stop-color="#ca0f01"/><stop offset=".4927" stop-color="#d12000"/><stop offset=".9015" stop-color="#e89300"/><stop offset=".9678" stop-color="#d02600"/><stop offset=".9907" stop-color="#bb2201"/><stop offset=".9969" stop-color="#af2901"/><stop offset=".999" stop-color="#1a8a2d"/></linearGradient><linearGradient id="g153" x2="0" y2="1"><stop offset=".001" stop-color="#0b942d"/><stop offset=".0031" stop-color="#188705"/><stop offset=".4554" stop-color="#745702"/><stop offset=".5882" stop-color="#b72102"/><stop offset=".7168" stop-color="#cd1a00"/><stop offset=".7998" stop-color="#d42c00"/><stop offset=".862" stop-color="#de6300"/><stop offset=".8973" stop-color="#df6600"/><stop offset=".9243" stop-color="#d22600"/><stop offset=".9658" stop-color="#b92301"/><stop offset=".9969" stop-color="#874503"/><stop offset=".999" stop-color="#1a8a2d"/></linearGradient><linearGradient id="g154" x2="0" y2="1"><stop offset=".001" stop-color="#0b942d"/><stop offset=".0031" stop-color="#0b9013"/><stop offset=".6338" stop-color="#357b0c"/><stop offset=".6712" stop-color="#814b02"/><stop offset=".7023" stop-color="#bd1d01"/><stop offset=".7272" stop-color="#c81801"/><stop offset=".7853" stop-color="#cf1c00"/><stop offset=".862" stop-color="#de6200"/><stop offset=".8973" stop-color="#df6700"/><stop offset=".9284" stop-color="#cc1900"/><stop offset=".9429" stop-color="#953b02"/><stop offset=".9512" stop-color="#655d07"/><stop offset=".9803" stop-color="#6d5706"/><stop offset=".9969" stop-color="#7d4c04"/><stop offset=".999" stop-color="#1a8a2d"/></linearGradient><linearGradient id="g155" x2="0" y2="1"><stop offset=".001" stop-color="#0b942d"/><stop offset=".0031" stop-color="#0b9013"/><stop offset=".6483" stop-color="#377a0c"/><stop offset=".6857" stop-color="#844902"/><stop offset=".7168" stop-color="#be1d01"/><stop offset=".7459" stop-color="#c81901"/><stop offset=".7915" stop-color="#d12000"/><stop offset=".862" stop-color="#dd6000"/><stop offset=".8973" stop-color="#de6400"/><stop offset=".9284" stop-color="#cc1900"/><stop offset=".9429" stop-color="#953b02"/><stop offset=".9512" stop-color="#655d07"/><stop offset=".9803" stop-color="#6d5706"/><stop offset=".9969" stop-color="#7d4c04"/><stop offset=".999" stop-color="#1a8a2d"/></linearGradient><linearGradient id="g156" x2="0" y2="1"><stop offset=".001" stop-color="#0b942d"/><stop offset=".0031" stop-color="#0b9013"/><stop offset=".6608" stop-color="#367b0c"/><stop offset=".6981" stop-color="#814b02"/><stop offset=".7293" stop-color="#bd1e01"/><stop offset=".7541" stop-color="#c81901"/><stop offset=".7956" stop-color="#d12200"/><stop offset=".8641" stop-color="#dd5d00"/><stop offset=".8994" stop-color="#dd5e00"/><stop offset=".9284" stop-color="#cc1900"/><stop offset=".9429" stop-color="#953b02"/><stop offset=".9512" stop-color="#655d07"/><stop offset=".9803" stop-color="#6d5706"/><stop offset=".9969" stop-color="#7d4c04"/><stop offset=".999" stop-color="#1a8a2d"/></linearGradient><linearGradient id="g157" x2="0" y2="1"><stop offset=".001" stop-color="#0b942d"/><stop offset=".0031" stop-color="#0b9013"/><stop offset=".6753" stop-color="#387a0c"/><stop offset=".7127" stop-color="#844902"/><stop offset=".7438" stop-color="#be1d01"/><stop offset=".7728" stop-color="#c81901"/><stop offset=".806" stop-color="#d32a00"/><stop offset=".8703" stop-color="#dd5b00"/><stop offset=".8994" stop-color="#dc5a00"/><stop offset=".9284" stop-color="#cc1900"/><stop offset=".9429" stop-color="#953b02"/><stop offset=".9512" stop-color="#655d07"/><stop offset=".9803" stop-color="#6d5706"/><stop offset=".9969" stop-color="#7d4c04"/><stop offset=".999" stop-color="#1a8a2d"/></linearGradient><linearGradient id="g158" x2="0" y2="1"><stop offset=".001" stop-color="#0b942d"/><stop offset=".0031" stop-color="#0b9013"/><stop offset=".6878" stop-color="#367a0d"/><stop offset=".7251" stop-color="#814b02"/><stop offset=".7562" stop-color="#bc1e01"/><stop offset=".7956" stop-color="#d01f00"/><stop offset=".8683" stop-color="#dc5800"/><stop offset=".8994" stop-color="#dc5700"/><stop offset=".9284" stop-color="#cc1900"/><stop offset=".9429" stop-color="#953b02"/><stop offset=".9512" stop-color="#655d07"/><stop offset=".9803" stop-color="#6d5706"/><stop offset=".9969" stop-color="#7d4c04"/><stop offset=".999" stop-color="#1a8a2d"/></linearGradient><linearGradient id="g159" x2="0" y2="1"><stop offset=".001" stop-color="#0b942d"/><stop offset=".0031" stop-color="#0b9013"/><stop offset=".6919" stop-color="#38790c"/><stop offset=".7293" stop-color="#844902"/><stop offset=".7604" stop-color="#be1d01"/><stop offset=".7956" stop-color="#d01e00"/><stop offset=".8683" stop-color="#dc5800"/><stop offset=".8994" stop-color="#dc5700"/><stop offset=".9284" stop-color="#cc1900"/><stop offset=".9429" stop-color="#953b02"/><stop offset=".9512" stop-color="#655d07"/><stop offset=".9803" stop-color="#6d5706"/><stop offset=".9969" stop-color="#7d4c04"/><stop offset=".999" stop-color="#1a8a2d"/></linearGradient><linearGradient id="g160" x2="0" y2="1"><stop offset=".001" stop-color="#0b942d"/><stop offset=".0031" stop-color="#0b9013"/><stop offset=".694" stop-color="#377a0c"/><stop offset=".7334" stop-color="#874702"/><stop offset=".7645" stop-color="#bf1c01"/><stop offset=".7977" stop-color="#d02000"/><stop offset=".8683" stop-color="#dc5900"/><stop offset=".8994" stop-color="#dc5900"/><stop offset=".9284" stop-color="#cc1900"/><stop offset=".9429" stop-color="#953b02"/><stop offset=".9512" stop-color="#655d07"/><stop offset=".9803" stop-color="#6d5706"/><stop offset=".9969" stop-color="#7d4c04"/><stop offset=".999" stop-color="#1a8a2d"/></linearGradient><linearGradient id="g161" x2="0" y2="1"><stop offset=".001" stop-color="#0b942d"/><stop offset=".0031" stop-color="#0b9013"/><stop offset=".6961" stop-color="#337c0e"/><stop offset=".7376" stop-color="#8a4502"/><stop offset=".7687" stop-color="#c01c01"/><stop offset=".7998" stop-color="#d12100"/><stop offset=".8683" stop-color="#dc5a00"/><stop offset=".8994" stop-color="#dc5a00"/><stop offset=".9284" stop-color="#cc1900"/><stop offset=".9429" stop-color="#953b02"/><stop offset=".9512" stop-color="#655d07"/><stop offset=".9803" stop-color="#6d5706"/><stop offset=".9969" stop-color="#7d4c04"/><stop offset=".999" stop-color="#1a8a2d"/></linearGradient><linearGradient id="g162" x2="0" y2="1"><stop offset=".001" stop-color="#0b942d"/><stop offset=".0031" stop-color="#0b9013"/><stop offset=".7002" stop-color="#38790c"/><stop offset=".7396" stop-color="#884602"/><stop offset=".7707" stop-color="#bf1c01"/><stop offset=".7998" stop-color="#d12100"/><stop offset=".8683" stop-color="#dc5a00"/><stop offset=".8994" stop-color="#dc5a00"/><stop offset=".9284" stop-color="#cc1900"/><stop offset=".9429" stop-color="#953b02"/><stop offset=".9512" stop-color="#655d07"/><stop offset=".9803" stop-color="#6d5706"/><stop offset=".9969" stop-color="#7d4c04"/><stop offset=".999" stop-color="#1a8a2d"/></linearGradient><linearGradient id="g163" x2="0" y2="1"><stop offset=".001" stop-color="#0b942d"/><stop offset=".0031" stop-color="#0b9013"/><stop offset=".7023" stop-color="#377a0d"/><stop offset=".7417" stop-color="#864802"/><stop offset=".7728" stop-color="#bf1d01"/><stop offset=".7998" stop-color="#d02000"/><stop offset=".8683" stop-color="#dc5a00"/><stop offset=".8994" stop-color="#dc5900"/><stop offset=".9284" stop-color="#cc1900"/><stop offset=".9429" stop-color="#953b02"/><stop offset=".9512" stop-color="#655d07"/><stop offset=".9803" stop-color="#6d5706"/><stop offset=".9969" stop-color="#7d4c04"/><stop offset=".999" stop-color="#1a8a2d"/></linearGradient><linearGradient id="g164" x2="0" y2="1"><stop offset=".001" stop-color="#0b942d"/><stop offset=".0031" stop-color="#0b9013"/><stop offset=".7023" stop-color="#377a0d"/><stop offset=".7417" stop-color="#874702"/><stop offset=".7728" stop-color="#bf1c01"/><stop offset=".8019" stop-color="#d12100"/><stop offset=".8683" stop-color="#dc5800"/><stop offset=".8994" stop-color="#dc5800"/><stop offset=".9284" stop-color="#cc1900"/><stop offset=".9429" stop-color="#953b02"/><stop offset=".9512" stop-color="#655d07"/><stop offset=".9803" stop-color="#6d5706"/><stop offset=".9969" stop-color="#7d4c04"/><stop offset=".999" stop-color="#1a8a2d"/></linearGradient><linearGradient id="g165" x2="0" y2="1"><stop offset=".001" stop-color="#0b942d"/><stop offset=".0031" stop-color="#0b9013"/><stop offset=".7023" stop-color="#387a0d"/><stop offset=".7417" stop-color="#874602"/><stop offset=".7728" stop-color="#bf1c01"/><stop offset=".7977" stop-color="#d12200"/><stop offset=".8641" stop-color="#dd5c00"/><stop offset=".8973" stop-color="#dd5e00"/><stop offset=".9305" stop-color="#c91901"/><stop offset=".945" stop-color="#8c4203"/><stop offset=".9512" stop-color="#675b07"/><stop offset=".9782" stop-color="#6b5906"/><stop offset=".9969" stop-color="#7d4c04"/><stop offset=".999" stop-color="#1a8a2d"/></linearGradient><linearGradient id="g166" x2="0" y2="1"><stop offset=".001" stop-color="#0b942d"/><stop offset=".0031" stop-color="#0b9013"/><stop offset=".7023" stop-color="#38790c"/><stop offset=".7417" stop-color="#884602"/><stop offset=".7749" stop-color="#c81901"/><stop offset=".8205" stop-color="#d74100"/><stop offset=".8766" stop-color="#df6500"/><stop offset=".8973" stop-color="#de6000"/><stop offset=".9305" stop-color="#c91901"/><stop offset=".945" stop-color="#8f4003"/><stop offset=".9533" stop-color="#655d07"/><stop offset=".9803" stop-color="#6d5706"/><stop offset=".9969" stop-color="#7d4c04"/><stop offset=".999" stop-color="#1a8a2d"/></linearGradient><linearGradient id="g167" x2="0" y2="1"><stop offset=".001" stop-color="#0b942d"/><stop offset=".0031" stop-color="#0b9013"/><stop offset=".7023" stop-color="#39790c"/><stop offset=".7396" stop-color="#844902"/><stop offset=".7666" stop-color="#c41a01"/><stop offset=".7956" stop-color="#d32c00"/><stop offset=".8579" stop-color="#de6400"/><stop offset=".8952" stop-color="#df6600"/><stop offset=".9305" stop-color="#ca1901"/><stop offset=".945" stop-color="#913e03"/><stop offset=".9533" stop-color="#655d07"/><stop offset=".9803" stop-color="#6d5706"/><stop offset=".9969" stop-color="#7d4c04"/><stop offset=".999" stop-color="#1a8a2d"/></linearGradient><linearGradient id="g168" x2="0" y2="1"><stop offset=".001" stop-color="#0b942d"/><stop offset=".0031" stop-color="#0b9013"/><stop offset=".7023" stop-color="#39790c"/><stop offset=".7376" stop-color="#7f4c02"/><stop offset=".7541" stop-color="#b82101"/><stop offset=".7728" stop-color="#ce1b00"/><stop offset=".8517" stop-color="#df6600"/><stop offset=".8932" stop-color="#e06b00"/><stop offset=".9222" stop-color="#d32800"/><stop offset=".9305" stop-color="#cb1900"/><stop offset=".945" stop-color="#933d02"/><stop offset=".9533" stop-color="#655d07"/><stop offset=".9803" stop-color="#6d5706"/><stop offset=".9969" stop-color="#7d4c04"/><stop offset=".999" stop-color="#1a8a2d"/></linearGradient><linearGradient id="g169" x2="0" y2="1"><stop offset=".001" stop-color="#0b942d"/><stop offset=".0031" stop-color="#0b9013"/><stop offset=".7002" stop-color="#337c0e"/><stop offset=".7293" stop-color="#705703"/><stop offset=".7459" stop-color="#b12602"/><stop offset=".7645" stop-color="#cc1900"/><stop offset=".8496" stop-color="#e06a00"/><stop offset=".8911" stop-color="#e17100"/><stop offset=".916" stop-color="#d63a00"/><stop offset=".9305" stop-color="#cc1900"/><stop offset=".945" stop-color="#953b02"/><stop offset=".9533" stop-color="#655d07"/><stop offset=".9803" stop-color="#6d5706"/><stop offset=".9969" stop-color="#7d4c04"/><stop offset=".999" stop-color="#1a8a2d"/></linearGradient><linearGradient id="g170" x2="0" y2="1"><stop offset=".001" stop-color="#0b942d"/><stop offset=".0031" stop-color="#0b9013"/><stop offset=".7002" stop-color="#377a0d"/><stop offset=".723" stop-color="#5f6205"/><stop offset=".7251" stop-color="#755303"/><stop offset=".7417" stop-color="#b42401"/><stop offset=".7604" stop-color="#cd1a00"/><stop offset=".8434" stop-color="#e06c00"/><stop offset=".889" stop-color="#e27600"/><stop offset=".9139" stop-color="#d84100"/><stop offset=".9305" stop-color="#cc1900"/><stop offset=".945" stop-color="#983a02"/><stop offset=".9533" stop-color="#675b07"/><stop offset=".9782" stop-color="#6b5906"/><stop offset=".9969" stop-color="#7d4c04"/><stop offset=".999" stop-color="#1a8a2d"/></linearGradient><linearGradient id="g171" x2="0" y2="1"><stop offset=".001" stop-color="#0b942d"/><stop offset=".0031" stop-color="#0b9013"/><stop offset=".694" stop-color="#377a0d"/><stop offset=".7168" stop-color="#5f6205"/><stop offset=".7251" stop-color="#8d4202"/><stop offset=".7417" stop-color="#bf1c01"/><stop offset=".7645" stop-color="#d12200"/><stop offset=".8371" stop-color="#e06e00"/><stop offset=".8869" stop-color="#e37b00"/><stop offset=".9098" stop-color="#da4f00"/><stop offset=".9305" stop-color="#cd1a00"/><stop offset=".945" stop-color="#9a3802"/><stop offset=".9554" stop-color="#655d07"/><stop offset=".9803" stop-color="#6d5706"/><stop offset=".9969" stop-color="#7d4c04"/><stop offset=".999" stop-color="#1a8a2d"/></linearGradient><linearGradient id="g172" x2="0" y2="1"><stop offset=".001" stop-color="#0b942d"/><stop offset=".0031" stop-color="#0b9013"/><stop offset=".6878" stop-color="#367a0d"/><stop offset=".7106" stop-color="#5f6204"/><stop offset=".7272" stop-color="#a92d02"/><stop offset=".7438" stop-color="#c91801"/><stop offset=".7832" stop-color="#d73f00"/><stop offset=".8413" stop-color="#e27600"/><stop offset=".8869" stop-color="#e47e00"/><stop offset=".9118" stop-color="#d94a00"/><stop offset=".9326" stop-color="#ca1901"/><stop offset=".9471" stop-color="#913e03"/><stop offset=".9554" stop-color="#655d07"/><stop offset=".9803" stop-color="#6d5706"/><stop offset=".9969" stop-color="#7d4c04"/><stop offset=".999" stop-color="#1a8a2d"/></linearGradient><linearGradient id="g173" x2="0" y2="1"><stop offset=".001" stop-color="#0b942d"/><stop offset=".0031" stop-color="#0b9013"/><stop offset=".6815" stop-color="#367a0d"/><stop offset=".7064" stop-color="#636004"/><stop offset=".721" stop-color="#a52f02"/><stop offset=".7376" stop-color="#c81801"/><stop offset=".7728" stop-color="#d63900"/><stop offset=".833" stop-color="#e27700"/><stop offset=".8849" stop-color="#e58300"/><stop offset=".9098" stop-color="#db5200"/><stop offset=".9326" stop-color="#cb1900"/><stop offset=".9471" stop-color="#933d02"/><stop offset=".9554" stop-color="#655d07"/><stop offset=".9803" stop-color="#6d5706"/><stop offset=".9969" stop-color="#7d4c04"/><stop offset=".999" stop-color="#1a8a2d"/></linearGradient><linearGradient id="g174" x2="0" y2="1"><stop offset=".001" stop-color="#0b942d"/><stop offset=".0031" stop-color="#0b9013"/><stop offset=".6753" stop-color="#367a0c"/><stop offset=".7023" stop-color="#675d04"/><stop offset=".7168" stop-color="#a92c02"/><stop offset=".7334" stop-color="#c91801"/><stop offset=".7728" stop-color="#d84100"/><stop offset=".833" stop-color="#e37d00"/><stop offset=".8828" stop-color="#e68800"/><stop offset=".9077" stop-color="#dc5900"/><stop offset=".9326" stop-color="#cc1900"/><stop offset=".9471" stop-color="#953b02"/><stop offset=".9554" stop-color="#655d07"/><stop offset=".9803" stop-color="#6d5706"/><stop offset=".9969" stop-color="#7d4c04"/><stop offset=".999" stop-color="#1a8a2d"/></linearGradient><linearGradient id="g175" x2="0" y2="1"><stop offset=".001" stop-color="#0b942d"/><stop offset=".0031" stop-color="#0b9013"/><stop offset=".6483" stop-color="#377a0c"/><stop offset=".6857" stop-color="#834a02"/><stop offset=".7168" stop-color="#be1d01"/><stop offset=".7438" stop-color="#d01d00"/><stop offset=".8226" stop-color="#e27800"/><stop offset=".8807" stop-color="#e78d00"/><stop offset=".9035" stop-color="#df6600"/><stop offset=".9326" stop-color="#cc1900"/><stop offset=".9471" stop-color="#953b02"/><stop offset=".9554" stop-color="#655d07"/><stop offset=".9803" stop-color="#6d5706"/><stop offset=".9969" stop-color="#7d4c04"/><stop offset=".999" stop-color="#1a8a2d"/></linearGradient><linearGradient id="g176" x2="0" y2="1"><stop offset=".001" stop-color="#0b942d"/><stop offset=".0031" stop-color="#0b9013"/><stop offset=".5985" stop-color="#377a0b"/><stop offset=".6297" stop-color="#467207"/><stop offset=".6649" stop-color="#943d02"/><stop offset=".694" stop-color="#c31901"/><stop offset=".7438" stop-color="#d01e00"/><stop offset=".8205" stop-color="#e37b00"/><stop offset=".8786" stop-color="#e89300"/><stop offset=".9015" stop-color="#e16f00"/><stop offset=".9326" stop-color="#cc1900"/><stop offset=".9471" stop-color="#953b02"/><stop offset=".9554" stop-color="#655d07"/><stop offset=".9803" stop-color="#6d5706"/><stop offset=".9969" stop-color="#7d4c04"/><stop offset=".999" stop-color="#1a8a2d"/></linearGradient><linearGradient id="g177" x2="0" y2="1"><stop offset=".001" stop-color="#0b942d"/><stop offset=".0031" stop-color="#0b9013"/><stop offset=".25" stop-color="#1a890e"/><stop offset=".2873" stop-color="#278209"/><stop offset=".6151" stop-color="#814c02"/><stop offset=".6338" stop-color="#8c4302"/><stop offset=".6629" stop-color="#c01b01"/><stop offset=".6961" stop-color="#c81801"/><stop offset=".7417" stop-color="#cf1d00"/><stop offset=".8185" stop-color="#e47f00"/><stop offset=".8745" stop-color="#e99900"/><stop offset=".8932" stop-color="#e58700"/><stop offset=".9222" stop-color="#d53300"/><stop offset=".9346" stop-color="#c81901"/><stop offset=".9492" stop-color="#8a4303"/><stop offset=".9554" stop-color="#655d07"/><stop offset=".9803" stop-color="#6d5706"/><stop offset=".9969" stop-color="#7d4c04"/><stop offset=".999" stop-color="#1a8a2d"/></linearGradient><linearGradient id="g178" x2="0" y2="1"><stop offset=".001" stop-color="#0b942d"/><stop offset=".0031" stop-color="#0b9013"/><stop offset=".1089" stop-color="#118d10"/><stop offset=".1338" stop-color="#1a8809"/><stop offset=".2376" stop-color="#3d7703"/><stop offset=".306" stop-color="#626401"/><stop offset=".584" stop-color="#b22502"/><stop offset=".6214" stop-color="#c11a01"/><stop offset=".6566" stop-color="#c91701"/><stop offset=".7396" stop-color="#ce1b00"/><stop offset=".8185" stop-color="#e48200"/><stop offset=".8745" stop-color="#ea9d00"/><stop offset=".8932" stop-color="#e68a00"/><stop offset=".9201" stop-color="#d63b00"/><stop offset=".9326" stop-color="#cc1900"/><stop offset=".9471" stop-color="#953b02"/><stop offset=".9554" stop-color="#655d07"/><stop offset=".9803" stop-color="#6d5706"/><stop offset=".9969" stop-color="#7d4c04"/><stop offset=".999" stop-color="#1a8a2d"/></linearGradient><linearGradient id="g179" x2="0" y2="1"><stop offset=".001" stop-color="#0b942d"/><stop offset=".0031" stop-color="#0b9013"/><stop offset=".1442" stop-color="#1a880a"/><stop offset=".2293" stop-color="#4a7102"/><stop offset=".2894" stop-color="#7a5502"/><stop offset=".5488" stop-color="#b72002"/><stop offset=".582" stop-color="#c31801"/><stop offset=".7396" stop-color="#ce1a00"/><stop offset=".8205" stop-color="#e48100"/><stop offset=".8766" stop-color="#e99a00"/><stop offset=".8952" stop-color="#e58400"/><stop offset=".9326" stop-color="#cc1900"/><stop offset=".9471" stop-color="#953b02"/><stop offset=".9554" stop-color="#655d07"/><stop offset=".9803" stop-color="#6d5706"/><stop offset=".9969" stop-color="#7d4c04"/><stop offset=".999" stop-color="#1a8a2d"/></linearGradient><linearGradient id="g180" x2="0" y2="1"><stop offset=".001" stop-color="#0b942d"/><stop offset=".0031" stop-color="#0b9013"/><stop offset=".1089" stop-color="#118d10"/><stop offset=".1338" stop-color="#1a8809"/><stop offset=".2376" stop-color="#3d7703"/><stop offset=".306" stop-color="#626401"/><stop offset=".584" stop-color="#b22502"/><stop offset=".6255" stop-color="#bf1b01"/><stop offset=".6566" stop-color="#c91701"/><stop offset=".7417" stop-color="#ce1b00"/><stop offset=".8205" stop-color="#e47e00"/><stop offset=".8766" stop-color="#e99600"/><stop offset=".8973" stop-color="#e37c00"/><stop offset=".9326" stop-color="#cc1900"/><stop offset=".9471" stop-color="#953b02"/><stop offset=".9554" stop-color="#655d07"/><stop offset=".9803" stop-color="#6d5706"/><stop offset=".9969" stop-color="#7d4c04"/><stop offset=".999" stop-color="#1a8a2d"/></linearGradient><linearGradient id="g181" x2="0" y2="1"><stop offset=".001" stop-color="#0b942d"/><stop offset=".0031" stop-color="#0b9013"/><stop offset=".25" stop-color="#1a890e"/><stop offset=".2873" stop-color="#278209"/><stop offset=".6151" stop-color="#814c02"/><stop offset=".6442" stop-color="#8c4402"/><stop offset=".6732" stop-color="#c01b01"/><stop offset=".7064" stop-color="#c81801"/><stop offset=".7479" stop-color="#d12000"/><stop offset=".8205" stop-color="#e37c00"/><stop offset=".8766" stop-color="#e89400"/><stop offset=".8973" stop-color="#e37a00"/><stop offset=".9326" stop-color="#cc1900"/><stop offset=".9471" stop-color="#953b02"/><stop offset=".9554" stop-color="#655d07"/><stop offset=".9803" stop-color="#6d5706"/><stop offset=".9969" stop-color="#7d4c04"/><stop offset=".999" stop-color="#1a8a2d"/></linearGradient><linearGradient id="g182" x2="0" y2="1"><stop offset=".001" stop-color="#0b942d"/><stop offset=".0031" stop-color="#0b9013"/><stop offset=".5985" stop-color="#377a0b"/><stop offset=".6338" stop-color="#467207"/><stop offset=".6691" stop-color="#943d02"/><stop offset=".6981" stop-color="#c31901"/><stop offset=".7479" stop-color="#d01f00"/><stop offset=".8205" stop-color="#e37900"/><stop offset=".8766" stop-color="#e89200"/><stop offset=".8973" stop-color="#e27800"/><stop offset=".9326" stop-color="#cc1900"/><stop offset=".9471" stop-color="#953b02"/><stop offset=".9554" stop-color="#655d07"/><stop offset=".9803" stop-color="#6d5706"/><stop offset=".9969" stop-color="#7d4c04"/><stop offset=".999" stop-color="#1a8a2d"/></linearGradient><linearGradient id="g183" x2="0" y2="1"><stop offset=".001" stop-color="#0b942d"/><stop offset=".0031" stop-color="#0b9013"/><stop offset=".6463" stop-color="#377a0c"/><stop offset=".6836" stop-color="#834a02"/><stop offset=".7147" stop-color="#be1d01"/><stop offset=".7479" stop-color="#d01e00"/><stop offset=".8226" stop-color="#e27800"/><stop offset=".8786" stop-color="#e78f00"/><stop offset=".9015" stop-color="#e06c00"/><stop offset=".9326" stop-color="#cc1900"/><stop offset=".9471" stop-color="#953b02"/><stop offset=".9554" stop-color="#655d07"/><stop offset=".9803" stop-color="#6d5706"/><stop offset=".9969" stop-color="#7d4c04"/><stop offset=".999" stop-color="#1a8a2d"/></linearGradient><linearGradient id="g184" x2="0" y2="1"><stop offset=".001" stop-color="#0b942d"/><stop offset=".0031" stop-color="#0b9013"/><stop offset=".667" stop-color="#367b0c"/><stop offset=".7044" stop-color="#814b02"/><stop offset=".7355" stop-color="#c61901"/><stop offset=".7624" stop-color="#d42f00"/><stop offset=".8247" stop-color="#e27800"/><stop offset=".8807" stop-color="#e78c00"/><stop offset=".9035" stop-color="#df6700"/><stop offset=".9326" stop-color="#cc1a00"/><stop offset=".9471" stop-color="#983902"/><stop offset=".9554" stop-color="#695a06"/><stop offset=".9782" stop-color="#6b5906"/><stop offset=".9969" stop-color="#7d4c04"/><stop offset=".999" stop-color="#1a8a2d"/></linearGradient><linearGradient id="g185" x2="0" y2="1"><stop offset=".001" stop-color="#0b942d"/><stop offset=".0031" stop-color="#0b9013"/><stop offset=".667" stop-color="#367b0c"/><stop offset=".7044" stop-color="#814b02"/><stop offset=".7355" stop-color="#c61901"/><stop offset=".7624" stop-color="#d43000"/><stop offset=".8247" stop-color="#e37b00"/><stop offset=".8807" stop-color="#e79000"/><stop offset=".9035" stop-color="#e06a00"/><stop offset=".9326" stop-color="#cd1a00"/><stop offset=".9471" stop-color="#9b3702"/><stop offset=".9575" stop-color="#655d07"/><stop offset=".9824" stop-color="#6f5606"/><stop offset=".9969" stop-color="#7d4c04"/><stop offset=".999" stop-color="#1a8a2d"/></linearGradient><linearGradient id="g186" x2="0" y2="1"><stop offset=".001" stop-color="#0b942d"/><stop offset=".0031" stop-color="#0b9013"/><stop offset=".667" stop-color="#367b0c"/><stop offset=".7044" stop-color="#814b02"/><stop offset=".7355" stop-color="#c71801"/><stop offset=".7645" stop-color="#d53600"/><stop offset=".8226" stop-color="#e47e00"/><stop offset=".8786" stop-color="#e89600"/><stop offset=".9015" stop-color="#e17400"/><stop offset=".9346" stop-color="#cb1900"/><stop offset=".9492" stop-color="#943c02"/><stop offset=".9575" stop-color="#655d07"/><stop offset=".9824" stop-color="#6f5606"/><stop offset=".9969" stop-color="#7d4c04"/><stop offset=".999" stop-color="#1a8a2d"/></linearGradient><linearGradient id="g187" x2="0" y2="1"><stop offset=".001" stop-color="#0b942d"/><stop offset=".0031" stop-color="#0b9013"/><stop offset=".667" stop-color="#367b0c"/><stop offset=".7044" stop-color="#814b02"/><stop offset=".7334" stop-color="#c51901"/><stop offset=".7583" stop-color="#d42e00"/><stop offset=".8185" stop-color="#e47e00"/><stop offset=".8745" stop-color="#e99a00"/><stop offset=".8932" stop-color="#e68900"/><stop offset=".9222" stop-color="#d63900"/><stop offset=".9367" stop-color="#c81901"/><stop offset=".9512" stop-color="#8c4203"/><stop offset=".9575" stop-color="#675b07"/><stop offset=".9803" stop-color="#6d5706"/><stop offset=".9969" stop-color="#7d4c04"/><stop offset=".999" stop-color="#1a8a2d"/></linearGradient><linearGradient id="g188" x2="0" y2="1"><stop offset=".001" stop-color="#0b942d"/><stop offset=".0031" stop-color="#0b9013"/><stop offset=".667" stop-color="#367b0c"/><stop offset=".7044" stop-color="#814b02"/><stop offset=".7334" stop-color="#c61901"/><stop offset=".7583" stop-color="#d42f00"/><stop offset=".8185" stop-color="#e48000"/><stop offset=".8745" stop-color="#ea9c00"/><stop offset=".8932" stop-color="#e68b00"/><stop offset=".9222" stop-color="#d63b00"/><stop offset=".9367" stop-color="#ca1901"/><stop offset=".9512" stop-color="#8f4003"/><stop offset=".9595" stop-color="#655d07"/><stop offset=".9824" stop-color="#6f5606"/><stop offset=".9969" stop-color="#7d4c04"/><stop offset=".999" stop-color="#1a8a2d"/></linearGradient><linearGradient id="g189" x2="0" y2="1"><stop offset=".001" stop-color="#0b942d"/><stop offset=".0031" stop-color="#0b9013"/><stop offset=".4865" stop-color="#307e0a"/><stop offset=".6898" stop-color="#6e5903"/><stop offset=".7002" stop-color="#765303"/><stop offset=".7334" stop-color="#c61901"/><stop offset=".7583" stop-color="#d43000"/><stop offset=".8164" stop-color="#e48000"/><stop offset=".8724" stop-color="#ea9e00"/><stop offset=".8911" stop-color="#e79100"/><stop offset=".918" stop-color="#d94b00"/><stop offset=".9367" stop-color="#cb1901"/><stop offset=".9512" stop-color="#923d02"/><stop offset=".9595" stop-color="#655d07"/><stop offset=".9824" stop-color="#6f5606"/><stop offset=".9969" stop-color="#7d4c04"/><stop offset=".999" stop-color="#1a8a2d"/></linearGradient><linearGradient id="g190" x2="0" y2="1"><stop offset=".001" stop-color="#0b942d"/><stop offset=".0031" stop-color="#0b9013"/><stop offset=".223" stop-color="#18890f"/><stop offset=".2313" stop-color="#218509"/><stop offset=".5135" stop-color="#7f4f02"/><stop offset=".6795" stop-color="#b22502"/><stop offset=".7064" stop-color="#c81801"/><stop offset=".7459" stop-color="#d01f00"/><stop offset=".8143" stop-color="#e48100"/><stop offset=".8683" stop-color="#eba100"/><stop offset=".889" stop-color="#e99800"/><stop offset=".916" stop-color="#db5500"/><stop offset=".9367" stop-color="#cc1900"/><stop offset=".9512" stop-color="#953b02"/><stop offset=".9595" stop-color="#655d07"/><stop offset=".9824" stop-color="#6f5606"/><stop offset=".9969" stop-color="#7d4c04"/><stop offset=".999" stop-color="#1a8a2d"/></linearGradient><linearGradient id="g191" x2="0" y2="1"><stop offset=".001" stop-color="#0b942d"/><stop offset=".0031" stop-color="#0b9013"/><stop offset=".1089" stop-color="#118d10"/><stop offset=".138" stop-color="#1b8709"/><stop offset=".2272" stop-color="#417502"/><stop offset=".2936" stop-color="#725a02"/><stop offset=".5197" stop-color="#b82002"/><stop offset=".7189" stop-color="#ce1a00"/><stop offset=".75" stop-color="#d32700"/><stop offset=".8122" stop-color="#e58500"/><stop offset=".8662" stop-color="#eca800"/><stop offset=".8869" stop-color="#eba200"/><stop offset=".9118" stop-color="#df6700"/><stop offset=".9367" stop-color="#cc1900"/><stop offset=".9512" stop-color="#953b02"/><stop offset=".9595" stop-color="#655d07"/><stop offset=".9824" stop-color="#6f5606"/><stop offset=".9969" stop-color="#7d4c04"/><stop offset=".999" stop-color="#1a8a2d"/></linearGradient><linearGradient id="g192" x2="0" y2="1"><stop offset=".001" stop-color="#0b942d"/><stop offset=".0031" stop-color="#0b9013"/><stop offset=".1359" stop-color="#19880a"/><stop offset=".2147" stop-color="#4b7101"/><stop offset=".2853" stop-color="#8d4802"/><stop offset=".5135" stop-color="#bf1a01"/><stop offset=".6774" stop-color="#d01d00"/><stop offset=".7853" stop-color="#df6600"/><stop offset=".8392" stop-color="#eba100"/><stop offset=".8828" stop-color="#edac00"/><stop offset=".9077" stop-color="#e27700"/><stop offset=".9367" stop-color="#cc1900"/><stop offset=".9512" stop-color="#953b02"/><stop offset=".9595" stop-color="#655d07"/><stop offset=".9824" stop-color="#6f5606"/><stop offset=".9969" stop-color="#7d4c04"/><stop offset=".999" stop-color="#1a8a2d"/></linearGradient><linearGradient id="g193" x2="0" y2="1"><stop offset=".001" stop-color="#0b942d"/><stop offset=".0031" stop-color="#0b9013"/><stop offset=".1089" stop-color="#118d10"/><stop offset=".138" stop-color="#1b8709"/><stop offset=".2272" stop-color="#417502"/><stop offset=".2936" stop-color="#725a02"/><stop offset=".5197" stop-color="#b82002"/><stop offset=".6463" stop-color="#cf1b00"/><stop offset=".7521" stop-color="#e37900"/><stop offset=".8019" stop-color="#eca400"/><stop offset=".8454" stop-color="#eca500"/><stop offset=".8828" stop-color="#edac00"/><stop offset=".9077" stop-color="#e27700"/><stop offset=".9367" stop-color="#cc1900"/><stop offset=".9512" stop-color="#953b02"/><stop offset=".9595" stop-color="#655d07"/><stop offset=".9824" stop-color="#6f5606"/><stop offset=".9969" stop-color="#7d4c04"/><stop offset=".999" stop-color="#1a8a2d"/></linearGradient><linearGradient id="g194" x2="0" y2="1"><stop offset=".001" stop-color="#0b942d"/><stop offset=".0031" stop-color="#0b9013"/><stop offset=".223" stop-color="#18890f"/><stop offset=".2313" stop-color="#218509"/><stop offset=".5135" stop-color="#7f4f02"/><stop offset=".6214" stop-color="#a62f02"/><stop offset=".6463" stop-color="#c81701"/><stop offset=".7168" stop-color="#d53200"/><stop offset=".7915" stop-color="#e06d00"/><stop offset=".8454" stop-color="#eba300"/><stop offset=".8849" stop-color="#eca800"/><stop offset=".9098" stop-color="#e16f00"/><stop offset=".9367" stop-color="#cc1900"/><stop offset=".9512" stop-color="#953b02"/><stop offset=".9595" stop-color="#655d07"/><stop offset=".9824" stop-color="#6f5606"/><stop offset=".9969" stop-color="#7d4c04"/><stop offset=".999" stop-color="#1a8a2d"/></linearGradient><linearGradient id="g195" x2="0" y2="1"><stop offset=".001" stop-color="#0b942d"/><stop offset=".0031" stop-color="#0b9013"/><stop offset=".4865" stop-color="#307e0a"/><stop offset=".6027" stop-color="#5b6604"/><stop offset=".6421" stop-color="#b42302"/><stop offset=".6691" stop-color="#c91701"/><stop offset=".7479" stop-color="#d22500"/><stop offset=".8122" stop-color="#e58700"/><stop offset=".8662" stop-color="#edab00"/><stop offset=".8869" stop-color="#eba400"/><stop offset=".9118" stop-color="#df6800"/><stop offset=".9367" stop-color="#cc1900"/><stop offset=".9512" stop-color="#953b02"/><stop offset=".9595" stop-color="#655d07"/><stop offset=".9824" stop-color="#6f5606"/><stop offset=".9969" stop-color="#7d4c04"/><stop offset=".999" stop-color="#1a8a2d"/></linearGradient><linearGradient id="g196" x2="0" y2="1"><stop offset=".001" stop-color="#0b942d"/><stop offset=".0031" stop-color="#0b9013"/><stop offset=".6006" stop-color="#357b0b"/><stop offset=".638" stop-color="#824b02"/><stop offset=".64" stop-color="#943e02"/><stop offset=".6546" stop-color="#a82e02"/><stop offset=".6815" stop-color="#c81701"/><stop offset=".7396" stop-color="#ce1b00"/><stop offset=".8143" stop-color="#e68a00"/><stop offset=".8683" stop-color="#edac00"/><stop offset=".8869" stop-color="#eca600"/><stop offset=".9118" stop-color="#df6900"/><stop offset=".9346" stop-color="#cf1c00"/><stop offset=".9388" stop-color="#c81901"/><stop offset=".9533" stop-color="#8a4303"/><stop offset=".9595" stop-color="#655d07"/><stop offset=".9824" stop-color="#6f5606"/><stop offset=".9969" stop-color="#7d4c04"/><stop offset=".999" stop-color="#1a8a2d"/></linearGradient><linearGradient id="g197" x2="0" y2="1"><stop offset=".001" stop-color="#0b942d"/><stop offset=".0031" stop-color="#0b9013"/><stop offset=".6193" stop-color="#357b0c"/><stop offset=".6566" stop-color="#824b02"/><stop offset=".6878" stop-color="#bd1d01"/><stop offset=".7147" stop-color="#c81801"/><stop offset=".7438" stop-color="#d02000"/><stop offset=".8102" stop-color="#e68800"/><stop offset=".8641" stop-color="#eeae00"/><stop offset=".8869" stop-color="#eca800"/><stop offset=".9118" stop-color="#e06a00"/><stop offset=".9346" stop-color="#cf1c00"/><stop offset=".9388" stop-color="#c81901"/><stop offset=".9533" stop-color="#8a4303"/><stop offset=".9595" stop-color="#655d07"/><stop offset=".9824" stop-color="#6f5606"/><stop offset=".9969" stop-color="#7d4c04"/><stop offset=".999" stop-color="#1a8a2d"/></linearGradient><linearGradient id="g198" x2="0" y2="1"><stop offset=".001" stop-color="#0b942d"/><stop offset=".0031" stop-color="#0b9013"/><stop offset=".638" stop-color="#357b0c"/><stop offset=".6753" stop-color="#814b02"/><stop offset=".7064" stop-color="#bd1d01"/><stop offset=".7417" stop-color="#d01e00"/><stop offset=".8102" stop-color="#e68a00"/><stop offset=".862" stop-color="#eeb000"/><stop offset=".8849" stop-color="#edad00"/><stop offset=".9098" stop-color="#e17300"/><stop offset=".9346" stop-color="#cf1d00"/><stop offset=".9388" stop-color="#c81901"/><stop offset=".9533" stop-color="#8a4303"/><stop offset=".9595" stop-color="#655d07"/><stop offset=".9824" stop-color="#6f5606"/><stop offset=".9969" stop-color="#7d4c04"/><stop offset=".999" stop-color="#1a8a2d"/></linearGradient><linearGradient id="g199" x2="0" y2="1"><stop offset=".001" stop-color="#0b942d"/><stop offset=".0031" stop-color="#0b9013"/><stop offset=".6151" stop-color="#357b0c"/><stop offset=".6525" stop-color="#824b02"/><stop offset=".6836" stop-color="#bd1d01"/><stop offset=".7106" stop-color="#c81801"/><stop offset=".7438" stop-color="#d12100"/><stop offset=".8081" stop-color="#e68900"/><stop offset=".86" stop-color="#eeb200"/><stop offset=".8849" stop-color="#eeb000"/><stop offset=".9098" stop-color="#e27400"/><stop offset=".9346" stop-color="#cf1d00"/><stop offset=".9388" stop-color="#c81901"/><stop offset=".9533" stop-color="#8a4303"/><stop offset=".9595" stop-color="#655d07"/><stop offset=".9824" stop-color="#6f5606"/><stop offset=".9969" stop-color="#7d4c04"/><stop offset=".999" stop-color="#1a8a2d"/></linearGradient><linearGradient id="g200" x2="0" y2="1"><stop offset=".001" stop-color="#0b942d"/><stop offset=".0031" stop-color="#0b9013"/><stop offset=".1317" stop-color="#128c10"/><stop offset=".1359" stop-color="#1d8608"/><stop offset=".2832" stop-color="#317d05"/><stop offset=".6359" stop-color="#924002"/><stop offset=".6649" stop-color="#c21901"/><stop offset=".7396" stop-color="#cf1c00"/><stop offset=".8102" stop-color="#e78e00"/><stop offset=".862" stop-color="#efb500"/><stop offset=".8849" stop-color="#efb200"/><stop offset=".9098" stop-color="#e27600"/><stop offset=".9346" stop-color="#cf1d00"/><stop offset=".9388" stop-color="#c81901"/><stop offset=".9533" stop-color="#8a4303"/><stop offset=".9595" stop-color="#655d07"/><stop offset=".9824" stop-color="#6f5606"/><stop offset=".9969" stop-color="#7d4c04"/><stop offset=".999" stop-color="#1a8a2d"/></linearGradient><linearGradient id="g201" x2="0" y2="1"><stop offset=".001" stop-color="#0b942d"/><stop offset=".0031" stop-color="#0b9013"/><stop offset=".167" stop-color="#1b870a"/><stop offset=".2541" stop-color="#4c7002"/><stop offset=".3102" stop-color="#775702"/><stop offset=".584" stop-color="#b62202"/><stop offset=".6089" stop-color="#c51701"/><stop offset=".7376" stop-color="#ce1a00"/><stop offset=".8102" stop-color="#e79000"/><stop offset=".862" stop-color="#f0b800"/><stop offset=".8849" stop-color="#efb500"/><stop offset=".9098" stop-color="#e27800"/><stop offset=".9346" stop-color="#cf1d00"/><stop offset=".9388" stop-color="#c81901"/><stop offset=".9533" stop-color="#8a4303"/><stop offset=".9595" stop-color="#655d07"/><stop offset=".9824" stop-color="#6f5606"/><stop offset=".9969" stop-color="#7d4c04"/><stop offset=".999" stop-color="#1a8a2d"/></linearGradient><linearGradient id="g202" x2="0" y2="1"><stop offset=".001" stop-color="#0b942d"/><stop offset=".0031" stop-color="#0b9013"/><stop offset=".1317" stop-color="#128c10"/><stop offset=".1359" stop-color="#1d8608"/><stop offset=".2832" stop-color="#317d05"/><stop offset=".6089" stop-color="#8a4502"/><stop offset=".638" stop-color="#bf1b01"/><stop offset=".6691" stop-color="#c91701"/><stop offset=".7376" stop-color="#ce1b00"/><stop offset=".8081" stop-color="#e89100"/><stop offset=".8579" stop-color="#f0bb00"/><stop offset=".8849" stop-color="#f0b900"/><stop offset=".9077" stop-color="#e48100"/><stop offset=".9367" stop-color="#cc1a00"/><stop offset=".9512" stop-color="#953b02"/><stop offset=".9595" stop-color="#655d07"/><stop offset=".9824" stop-color="#6f5606"/><stop offset=".9969" stop-color="#7d4c04"/><stop offset=".999" stop-color="#1a8a2d"/></linearGradient><linearGradient id="g203" x2="0" y2="1"><stop offset=".001" stop-color="#0b942d"/><stop offset=".0031" stop-color="#0b9013"/><stop offset=".6027" stop-color="#357b0b"/><stop offset=".64" stop-color="#824b02"/><stop offset=".6712" stop-color="#be1c01"/><stop offset=".6981" stop-color="#c81801"/><stop offset=".7376" stop-color="#cf1c00"/><stop offset=".806" stop-color="#e89400"/><stop offset=".8558" stop-color="#f2c100"/><stop offset=".8849" stop-color="#f2c000"/><stop offset=".9077" stop-color="#e58600"/><stop offset=".9367" stop-color="#cc1a00"/><stop offset=".9512" stop-color="#953b02"/><stop offset=".9595" stop-color="#655d07"/><stop offset=".9824" stop-color="#6f5606"/><stop offset=".9969" stop-color="#7d4c04"/><stop offset=".999" stop-color="#1a8a2d"/></linearGradient><linearGradient id="g204" x2="0" y2="1"><stop offset=".001" stop-color="#0b942d"/><stop offset=".0031" stop-color="#0b9013"/><stop offset=".6172" stop-color="#357b0c"/><stop offset=".6546" stop-color="#824b02"/><stop offset=".6857" stop-color="#bd1d01"/><stop offset=".7127" stop-color="#c81801"/><stop offset=".7396" stop-color="#d02000"/><stop offset=".8039" stop-color="#e99700"/><stop offset=".8517" stop-color="#f3c500"/><stop offset=".8849" stop-color="#f3c700"/><stop offset=".9056" stop-color="#e89200"/><stop offset=".9367" stop-color="#cd1a00"/><stop offset=".9492" stop-color="#a23202"/><stop offset=".9595" stop-color="#685b06"/><stop offset=".9782" stop-color="#6b5906"/><stop offset=".9969" stop-color="#7d4c04"/><stop offset=".999" stop-color="#1a8a2d"/></linearGradient><linearGradient id="g205" x2="0" y2="1"><stop offset=".001" stop-color="#0b942d"/><stop offset=".0031" stop-color="#0b9013"/><stop offset=".6317" stop-color="#357b0c"/><stop offset=".6691" stop-color="#824b02"/><stop offset=".7002" stop-color="#bd1d01"/><stop offset=".7251" stop-color="#c81801"/><stop offset=".7438" stop-color="#d32700"/><stop offset=".8019" stop-color="#e99600"/><stop offset=".8496" stop-color="#f3c700"/><stop offset=".8849" stop-color="#f4ca00"/><stop offset=".9056" stop-color="#e89500"/><stop offset=".9367" stop-color="#ce1b00"/><stop offset=".9471" stop-color="#ad2a01"/><stop offset=".9616" stop-color="#655d07"/><stop offset=".9865" stop-color="#735305"/><stop offset=".9969" stop-color="#7d4c04"/><stop offset=".999" stop-color="#1a8a2d"/></linearGradient><linearGradient id="g206" x2="0" y2="1"><stop offset=".001" stop-color="#0b942d"/><stop offset=".0031" stop-color="#0b9013"/><stop offset=".6463" stop-color="#367b0c"/><stop offset=".6836" stop-color="#814b02"/><stop offset=".7147" stop-color="#bd1d01"/><stop offset=".7376" stop-color="#cf1d00"/><stop offset=".8039" stop-color="#e99600"/><stop offset=".8517" stop-color="#f3c500"/><stop offset=".8849" stop-color="#f3c700"/><stop offset=".9077" stop-color="#e78d00"/><stop offset=".9367" stop-color="#cf1c00"/><stop offset=".9471" stop-color="#af2901"/><stop offset=".9616" stop-color="#655d07"/><stop offset=".9865" stop-color="#735305"/><stop offset=".9969" stop-color="#7d4c04"/><stop offset=".999" stop-color="#1a8a2d"/></linearGradient><linearGradient id="g207" x2="0" y2="1"><stop offset=".001" stop-color="#0b942d"/><stop offset=".0031" stop-color="#0b9013"/><stop offset=".6463" stop-color="#367b0c"/><stop offset=".6836" stop-color="#814b02"/><stop offset=".7147" stop-color="#bd1d01"/><stop offset=".7396" stop-color="#d01e00"/><stop offset=".806" stop-color="#e89500"/><stop offset=".8558" stop-color="#f2c200"/><stop offset=".8849" stop-color="#f2c100"/><stop offset=".9077" stop-color="#e68a00"/><stop offset=".9388" stop-color="#cc1a00"/><stop offset=".9533" stop-color="#953b02"/><stop offset=".9616" stop-color="#655d07"/><stop offset=".9865" stop-color="#735305"/><stop offset=".9969" stop-color="#7d4c04"/><stop offset=".999" stop-color="#1a8a2d"/></linearGradient><linearGradient id="g208" x2="0" y2="1"><stop offset=".001" stop-color="#0b942d"/><stop offset=".0031" stop-color="#0b9013"/><stop offset=".6463" stop-color="#367b0c"/><stop offset=".6836" stop-color="#814b02"/><stop offset=".7147" stop-color="#bd1d01"/><stop offset=".7396" stop-color="#d01d00"/><stop offset=".806" stop-color="#e79000"/><stop offset=".8558" stop-color="#f1bc00"/><stop offset=".8849" stop-color="#f1bc00"/><stop offset=".9098" stop-color="#e48000"/><stop offset=".9388" stop-color="#cd1a00"/><stop offset=".9533" stop-color="#983902"/><stop offset=".9616" stop-color="#685b06"/><stop offset=".9803" stop-color="#6d5706"/><stop offset=".9969" stop-color="#7d4c04"/><stop offset=".999" stop-color="#1a8a2d"/></linearGradient><linearGradient id="g209" x2="0" y2="1"><stop offset=".001" stop-color="#0b942d"/><stop offset=".0031" stop-color="#0b9013"/><stop offset=".6463" stop-color="#367b0c"/><stop offset=".6836" stop-color="#814b02"/><stop offset=".7147" stop-color="#bd1d01"/><stop offset=".7396" stop-color="#cf1d00"/><stop offset=".8081" stop-color="#e78f00"/><stop offset=".86" stop-color="#f0b900"/><stop offset=".8849" stop-color="#f0b700"/><stop offset=".9098" stop-color="#e47e00"/><stop offset=".9388" stop-color="#ce1b00"/><stop offset=".9512" stop-color="#a53002"/><stop offset=".9637" stop-color="#655d07"/><stop offset=".9969" stop-color="#7d4c04"/><stop offset=".999" stop-color="#1a8a2d"/></linearGradient><linearGradient id="g210" x2="0" y2="1"><stop offset=".001" stop-color="#0b942d"/><stop offset=".0031" stop-color="#0b9013"/><stop offset=".6463" stop-color="#367b0c"/><stop offset=".6836" stop-color="#814b02"/><stop offset=".7147" stop-color="#bd1d01"/><stop offset=".7396" stop-color="#cf1d00"/><stop offset=".8081" stop-color="#e79000"/><stop offset=".8579" stop-color="#f0ba00"/><stop offset=".8849" stop-color="#f0b900"/><stop offset=".9098" stop-color="#e48000"/><stop offset=".9388" stop-color="#ce1c00"/><stop offset=".9512" stop-color="#a72f02"/><stop offset=".9637" stop-color="#655d07"/><stop offset=".9969" stop-color="#7d4c04"/><stop offset=".999" stop-color="#1a8a2d"/></linearGradient><linearGradient id="g211" x2="0" y2="1"><stop offset=".001" stop-color="#0b942d"/><stop offset=".0031" stop-color="#0b9013"/><stop offset=".6234" stop-color="#307e0e"/><stop offset=".6649" stop-color="#8a4602"/><stop offset=".694" stop-color="#be1c01"/><stop offset=".7251" stop-color="#c81801"/><stop offset=".7438" stop-color="#d22400"/><stop offset=".8039" stop-color="#e79000"/><stop offset=".8537" stop-color="#f1bf00"/><stop offset=".8849" stop-color="#f2c000"/><stop offset=".9098" stop-color="#e58500"/><stop offset=".9388" stop-color="#cf1d00"/><stop offset=".9429" stop-color="#c81901"/><stop offset=".9575" stop-color="#8a4303"/><stop offset=".9637" stop-color="#655d07"/><stop offset=".9969" stop-color="#7d4c04"/><stop offset=".999" stop-color="#1a8a2d"/></linearGradient><linearGradient id="g212" x2="0" y2="1"><stop offset=".001" stop-color="#0b942d"/><stop offset=".0031" stop-color="#0b9013"/><stop offset=".6027" stop-color="#357b0b"/><stop offset=".64" stop-color="#824b02"/><stop offset=".6712" stop-color="#be1c01"/><stop offset=".6981" stop-color="#c81801"/><stop offset=".7376" stop-color="#cf1d00"/><stop offset=".8039" stop-color="#e99700"/><stop offset=".8517" stop-color="#f3c600"/><stop offset=".8849" stop-color="#f4c800"/><stop offset=".9077" stop-color="#e89100"/><stop offset=".9409" stop-color="#cc1a00"/><stop offset=".9554" stop-color="#953b02"/><stop offset=".9637" stop-color="#655d07"/><stop offset=".9969" stop-color="#7d4c04"/><stop offset=".999" stop-color="#1a8a2d"/></linearGradient><linearGradient id="g213" x2="0" y2="1"><stop offset=".001" stop-color="#0b942d"/><stop offset=".0031" stop-color="#4b7100"/><stop offset=".306" stop-color="#a03602"/><stop offset=".5799" stop-color="#c61601"/><stop offset=".7396" stop-color="#d12100"/><stop offset=".8019" stop-color="#e99900"/><stop offset=".8496" stop-color="#f4cb00"/><stop offset=".8849" stop-color="#f5ce00"/><stop offset=".9056" stop-color="#ea9d00"/><stop offset=".9409" stop-color="#cc1a00"/><stop offset=".9969" stop-color="#9b3702"/><stop offset=".999" stop-color="#1a8a2d"/></linearGradient><linearGradient id="g214" x2="0" y2="1"><stop offset=".001" stop-color="#0b942d"/><stop offset=".0031" stop-color="#716101"/><stop offset=".2064" stop-color="#b71f02"/><stop offset=".3724" stop-color="#cc1200"/><stop offset=".5322" stop-color="#d32a00"/><stop offset=".7832" stop-color="#e37d00"/><stop offset=".833" stop-color="#f2c300"/><stop offset=".8807" stop-color="#f7d600"/><stop offset=".8994" stop-color="#efb300"/><stop offset=".918" stop-color="#e37d00"/><stop offset=".9761" stop-color="#d02400"/><stop offset=".9969" stop-color="#bc2101"/><stop offset=".999" stop-color="#1a8a2d"/></linearGradient><linearGradient id="g215" x2="0" y2="1"><stop offset=".001" stop-color="#0b942d"/><stop offset=".0031" stop-color="#aa2e04"/><stop offset=".1089" stop-color="#c80d01"/><stop offset=".3185" stop-color="#d22400"/><stop offset=".499" stop-color="#db5100"/><stop offset=".8807" stop-color="#f8d900"/><stop offset=".9015" stop-color="#f8da00"/><stop offset=".9886" stop-color="#d22800"/><stop offset=".9969" stop-color="#cc2000"/><stop offset=".999" stop-color="#1a8a2d"/></linearGradient><linearGradient id="g216" x2="0" y2="1"><stop offset=".001" stop-color="#0b942d"/><stop offset=".0031" stop-color="#b42103"/><stop offset=".1131" stop-color="#cc0c00"/><stop offset=".445" stop-color="#d73e00"/><stop offset=".8994" stop-color="#fbe800"/><stop offset=".9886" stop-color="#d22900"/><stop offset=".9969" stop-color="#cc2000"/><stop offset=".999" stop-color="#1a8a2d"/></linearGradient><linearGradient id="g217" x2="0" y2="1"><stop offset=".001" stop-color="#0b942d"/><stop offset=".0031" stop-color="#716101"/><stop offset=".2064" stop-color="#b71f02"/><stop offset=".3724" stop-color="#cc1200"/><stop offset=".4844" stop-color="#d22200"/><stop offset=".8185" stop-color="#f1bd00"/><stop offset=".8641" stop-color="#f9de00"/><stop offset=".9015" stop-color="#f8d900"/><stop offset=".9782" stop-color="#d22900"/><stop offset=".9969" stop-color="#be2101"/><stop offset=".999" stop-color="#1a8a2d"/></linearGradient><linearGradient id="g218" x2="0" y2="1"><stop offset=".001" stop-color="#0b942d"/><stop offset=".0031" stop-color="#198705"/><stop offset=".445" stop-color="#8c4602"/><stop offset=".5114" stop-color="#c11801"/><stop offset=".584" stop-color="#d11d00"/><stop offset=".779" stop-color="#e47f00"/><stop offset=".8268" stop-color="#f4ca00"/><stop offset=".8745" stop-color="#fae300"/><stop offset=".8911" stop-color="#f7d400"/><stop offset=".9658" stop-color="#d22a00"/><stop offset=".9844" stop-color="#c02001"/><stop offset=".9969" stop-color="#a03402"/><stop offset=".999" stop-color="#1a8a2d"/></linearGradient><linearGradient id="g219" x2="0" y2="1"><stop offset=".001" stop-color="#0b942d"/><stop offset=".0031" stop-color="#0b9013"/><stop offset=".6131" stop-color="#357b0c"/><stop offset=".6504" stop-color="#824b02"/><stop offset=".6815" stop-color="#bd1d01"/><stop offset=".7085" stop-color="#c81801"/><stop offset=".7376" stop-color="#d12000"/><stop offset=".7998" stop-color="#eba000"/><stop offset=".8434" stop-color="#f6d300"/><stop offset=".8828" stop-color="#f8dc00"/><stop offset=".9015" stop-color="#efb400"/><stop offset=".9284" stop-color="#d94900"/><stop offset=".9409" stop-color="#cd1a00"/><stop offset=".9554" stop-color="#953b02"/><stop offset=".9637" stop-color="#655d07"/><stop offset=".9969" stop-color="#7d4c04"/><stop offset=".999" stop-color="#1a8a2d"/></linearGradient><linearGradient id="g220" x2="0" y2="1"><stop offset=".001" stop-color="#0b942d"/><stop offset=".0031" stop-color="#0b9013"/><stop offset=".6338" stop-color="#357b0c"/><stop offset=".6712" stop-color="#814b02"/><stop offset=".7023" stop-color="#bd1d01"/><stop offset=".7272" stop-color="#c81801"/><stop offset=".7438" stop-color="#d32900"/><stop offset=".7998" stop-color="#e99900"/><stop offset=".8454" stop-color="#f5cc00"/><stop offset=".8828" stop-color="#f6d400"/><stop offset=".9035" stop-color="#eca600"/><stop offset=".9409" stop-color="#cd1a00"/><stop offset=".9554" stop-color="#953b02"/><stop offset=".9637" stop-color="#655d07"/><stop offset=".9969" stop-color="#7d4c04"/><stop offset=".999" stop-color="#1a8a2d"/></linearGradient><linearGradient id="g221" x2="0" y2="1"><stop offset=".001" stop-color="#0b942d"/><stop offset=".0031" stop-color="#0b9013"/><stop offset=".6338" stop-color="#357b0c"/><stop offset=".6712" stop-color="#814b02"/><stop offset=".7023" stop-color="#bd1d01"/><stop offset=".7272" stop-color="#c81801"/><stop offset=".7459" stop-color="#d32a00"/><stop offset=".8019" stop-color="#e89300"/><stop offset=".8496" stop-color="#f3c400"/><stop offset=".8849" stop-color="#f3c700"/><stop offset=".9077" stop-color="#e79100"/><stop offset=".9409" stop-color="#cc1a00"/><stop offset=".9554" stop-color="#953b02"/><stop offset=".9637" stop-color="#655d07"/><stop offset=".9969" stop-color="#7d4c04"/><stop offset=".999" stop-color="#1a8a2d"/></linearGradient><linearGradient id="g222" x2="0" y2="1"><stop offset=".001" stop-color="#0b942d"/><stop offset=".0031" stop-color="#0b9013"/><stop offset=".6338" stop-color="#357b0c"/><stop offset=".6712" stop-color="#814b02"/><stop offset=".7023" stop-color="#bd1d01"/><stop offset=".7272" stop-color="#c81801"/><stop offset=".7459" stop-color="#d32800"/><stop offset=".8039" stop-color="#e79000"/><stop offset=".8537" stop-color="#f1be00"/><stop offset=".8849" stop-color="#f1bf00"/><stop offset=".9098" stop-color="#e58500"/><stop offset=".9388" stop-color="#cf1d00"/><stop offset=".9429" stop-color="#c81901"/><stop offset=".9575" stop-color="#8a4303"/><stop offset=".9637" stop-color="#655d07"/><stop offset=".9969" stop-color="#7d4c04"/><stop offset=".999" stop-color="#1a8a2d"/></linearGradient><linearGradient id="g223" x2="0" y2="1"><stop offset=".001" stop-color="#0b942d"/><stop offset=".0031" stop-color="#0b9013"/><stop offset=".6338" stop-color="#357b0c"/><stop offset=".6712" stop-color="#814b02"/><stop offset=".7023" stop-color="#bd1d01"/><stop offset=".7272" stop-color="#c81801"/><stop offset=".7459" stop-color="#d32800"/><stop offset=".8039" stop-color="#e79000"/><stop offset=".8537" stop-color="#f1be00"/><stop offset=".8849" stop-color="#f1bf00"/><stop offset=".9098" stop-color="#e58400"/><stop offset=".9388" stop-color="#cf1d00"/><stop offset=".9429" stop-color="#c81901"/><stop offset=".9575" stop-color="#8a4303"/><stop offset=".9637" stop-color="#655d07"/><stop offset=".9969" stop-color="#7d4c04"/><stop offset=".999" stop-color="#1a8a2d"/></linearGradient><linearGradient id="g224" x2="0" y2="1"><stop offset=".001" stop-color="#0b942d"/><stop offset=".0031" stop-color="#0b9013"/><stop offset=".6338" stop-color="#357b0c"/><stop offset=".6712" stop-color="#814b02"/><stop offset=".7023" stop-color="#bd1d01"/><stop offset=".7272" stop-color="#c81801"/><stop offset=".7459" stop-color="#d32900"/><stop offset=".8039" stop-color="#e89300"/><stop offset=".8537" stop-color="#f2c200"/><stop offset=".8849" stop-color="#f2c200"/><stop offset=".9077" stop-color="#e78d00"/><stop offset=".9409" stop-color="#cc1900"/><stop offset=".9554" stop-color="#953b02"/><stop offset=".9637" stop-color="#655d07"/><stop offset=".9969" stop-color="#7d4c04"/><stop offset=".999" stop-color="#1a8a2d"/></linearGradient><linearGradient id="g225" x2="0" y2="1"><stop offset=".001" stop-color="#0b942d"/><stop offset=".0031" stop-color="#0b9013"/><stop offset=".6027" stop-color="#357b0b"/><stop offset=".64" stop-color="#824b02"/><stop offset=".6712" stop-color="#be1c01"/><stop offset=".6981" stop-color="#c81801"/><stop offset=".7355" stop-color="#ce1b00"/><stop offset=".806" stop-color="#ea9d00"/><stop offset=".8537" stop-color="#f4ca00"/><stop offset=".8849" stop-color="#f4cb00"/><stop offset=".9077" stop-color="#e89400"/><stop offset=".9409" stop-color="#cc1a00"/><stop offset=".9554" stop-color="#953b02"/><stop offset=".9637" stop-color="#655d07"/><stop offset=".9969" stop-color="#7d4c04"/><stop offset=".999" stop-color="#1a8a2d"/></linearGradient><linearGradient id="g226" x2="0" y2="1"><stop offset=".001" stop-color="#0b942d"/><stop offset=".0031" stop-color="#0b9013"/><stop offset=".3185" stop-color="#25830a"/><stop offset=".6027" stop-color="#715703"/><stop offset=".6338" stop-color="#b62202"/><stop offset=".6608" stop-color="#c91701"/><stop offset=".7334" stop-color="#cd1a00"/><stop offset=".806" stop-color="#eba300"/><stop offset=".8517" stop-color="#f6d000"/><stop offset=".8849" stop-color="#f6d200"/><stop offset=".9056" stop-color="#eba000"/><stop offset=".9409" stop-color="#cd1a00"/><stop offset=".9554" stop-color="#953b02"/><stop offset=".9637" stop-color="#655d07"/><stop offset=".9969" stop-color="#7d4c04"/><stop offset=".999" stop-color="#1a8a2d"/></linearGradient><linearGradient id="g227" x2="0" y2="1"><stop offset=".001" stop-color="#0b942d"/><stop offset=".0031" stop-color="#0b9013"/><stop offset=".2085" stop-color="#1e860a"/><stop offset=".3102" stop-color="#447403"/><stop offset=".3766" stop-color="#646202"/><stop offset=".6048" stop-color="#ac2a02"/><stop offset=".6317" stop-color="#c91601"/><stop offset=".7334" stop-color="#cd1a00"/><stop offset=".8039" stop-color="#eba400"/><stop offset=".8496" stop-color="#f6d300"/><stop offset=".8849" stop-color="#f7d600"/><stop offset=".9056" stop-color="#eba400"/><stop offset=".9409" stop-color="#cd1a00"/><stop offset=".9554" stop-color="#953b02"/><stop offset=".9637" stop-color="#655d07"/><stop offset=".9969" stop-color="#7d4c04"/><stop offset=".999" stop-color="#1a8a2d"/></linearGradient><linearGradient id="g228" x2="0" y2="1"><stop offset=".001" stop-color="#0b942d"/><stop offset=".0031" stop-color="#0b9013"/><stop offset=".2127" stop-color="#1e860a"/><stop offset=".3019" stop-color="#516d02"/><stop offset=".3537" stop-color="#765702"/><stop offset=".5861" stop-color="#b42302"/><stop offset=".6131" stop-color="#c91601"/><stop offset=".7334" stop-color="#cd1a00"/><stop offset=".8039" stop-color="#eba300"/><stop offset=".8496" stop-color="#f6d200"/><stop offset=".8849" stop-color="#f7d500"/><stop offset=".9056" stop-color="#eba300"/><stop offset=".9409" stop-color="#cd1a00"/><stop offset=".9554" stop-color="#953b02"/><stop offset=".9637" stop-color="#655d07"/><stop offset=".9969" stop-color="#7d4c04"/><stop offset=".999" stop-color="#1a8a2d"/></linearGradient><linearGradient id="g229" x2="0" y2="1"><stop offset=".001" stop-color="#0b942d"/><stop offset=".0031" stop-color="#0b9013"/><stop offset=".2085" stop-color="#1e860a"/><stop offset=".3102" stop-color="#447403"/><stop offset=".3766" stop-color="#646202"/><stop offset=".6048" stop-color="#ac2a02"/><stop offset=".6317" stop-color="#c91601"/><stop offset=".7355" stop-color="#cf1c00"/><stop offset=".8039" stop-color="#eba100"/><stop offset=".8496" stop-color="#f5d000"/><stop offset=".8849" stop-color="#f6d300"/><stop offset=".9056" stop-color="#eba100"/><stop offset=".9409" stop-color="#cd1a00"/><stop offset=".9554" stop-color="#953b02"/><stop offset=".9637" stop-color="#655d07"/><stop offset=".9969" stop-color="#7d4c04"/><stop offset=".999" stop-color="#1a8a2d"/></linearGradient><linearGradient id="g230" x2="0" y2="1"><stop offset=".001" stop-color="#0b942d"/><stop offset=".0031" stop-color="#0b9013"/><stop offset=".3185" stop-color="#25830a"/><stop offset=".6027" stop-color="#715703"/><stop offset=".6338" stop-color="#b62202"/><stop offset=".6608" stop-color="#c91701"/><stop offset=".7106" stop-color="#d22400"/><stop offset=".7666" stop-color="#dd5c00"/><stop offset=".8185" stop-color="#efb300"/><stop offset=".8641" stop-color="#f7d400"/><stop offset=".8869" stop-color="#f5cf00"/><stop offset=".9098" stop-color="#e89200"/><stop offset=".9388" stop-color="#d01e00"/><stop offset=".9429" stop-color="#c81901"/><stop offset=".9575" stop-color="#8a4303"/><stop offset=".9637" stop-color="#655d07"/><stop offset=".9969" stop-color="#7d4c04"/><stop offset=".999" stop-color="#1a8a2d"/></linearGradient><linearGradient id="g231" x2="0" y2="1"><stop offset=".001" stop-color="#0b942d"/><stop offset=".0031" stop-color="#0b9013"/><stop offset=".582" stop-color="#347c0b"/><stop offset=".6193" stop-color="#824b02"/><stop offset=".6483" stop-color="#bb1e01"/><stop offset=".6753" stop-color="#cf1b00"/><stop offset=".7479" stop-color="#e17100"/><stop offset=".7998" stop-color="#eeb200"/><stop offset=".8226" stop-color="#f0b900"/><stop offset=".8703" stop-color="#f7d600"/><stop offset=".889" stop-color="#f4cc00"/><stop offset=".9118" stop-color="#e68b00"/><stop offset=".9388" stop-color="#d01e00"/><stop offset=".9429" stop-color="#c81901"/><stop offset=".9575" stop-color="#8a4303"/><stop offset=".9637" stop-color="#655d07"/><stop offset=".9969" stop-color="#7d4c04"/><stop offset=".999" stop-color="#1a8a2d"/></linearGradient><linearGradient id="g232" x2="0" y2="1"><stop offset=".001" stop-color="#0b942d"/><stop offset=".0031" stop-color="#0b9013"/><stop offset=".5923" stop-color="#347b0b"/><stop offset=".6297" stop-color="#824b02"/><stop offset=".6587" stop-color="#bb1e01"/><stop offset=".6961" stop-color="#cf1c00"/><stop offset=".7624" stop-color="#db5400"/><stop offset=".8122" stop-color="#edad00"/><stop offset=".8579" stop-color="#f7d400"/><stop offset=".8849" stop-color="#f6d300"/><stop offset=".9056" stop-color="#eba100"/><stop offset=".9409" stop-color="#cd1a00"/><stop offset=".9554" stop-color="#953b02"/><stop offset=".9637" stop-color="#655d07"/><stop offset=".9969" stop-color="#7d4c04"/><stop offset=".999" stop-color="#1a8a2d"/></linearGradient><linearGradient id="g233" x2="0" y2="1"><stop offset=".001" stop-color="#0b942d"/><stop offset=".0031" stop-color="#0b9013"/><stop offset=".6027" stop-color="#357b0b"/><stop offset=".64" stop-color="#824b02"/><stop offset=".6712" stop-color="#be1c01"/><stop offset=".6981" stop-color="#c81801"/><stop offset=".7376" stop-color="#d01f00"/><stop offset=".7998" stop-color="#ea9d00"/><stop offset=".8454" stop-color="#f6d100"/><stop offset=".8828" stop-color="#f8d800"/><stop offset=".9015" stop-color="#eeb100"/><stop offset=".9284" stop-color="#d94800"/><stop offset=".9409" stop-color="#cd1a00"/><stop offset=".9554" stop-color="#953b02"/><stop offset=".9637" stop-color="#655d07"/><stop offset=".9969" stop-color="#7d4c04"/><stop offset=".999" stop-color="#1a8a2d"/></linearGradient><linearGradient id="g234" x2="0" y2="1"><stop offset=".001" stop-color="#0b942d"/><stop offset=".0031" stop-color="#0b9013"/><stop offset=".6131" stop-color="#357b0c"/><stop offset=".6504" stop-color="#824b02"/><stop offset=".6815" stop-color="#bd1d01"/><stop offset=".7085" stop-color="#c81801"/><stop offset=".7376" stop-color="#d12000"/><stop offset=".7998" stop-color="#ea9f00"/><stop offset=".8454" stop-color="#f6d300"/><stop offset=".8828" stop-color="#f8db00"/><stop offset=".9015" stop-color="#efb300"/><stop offset=".9284" stop-color="#d94900"/><stop offset=".9409" stop-color="#cd1a00"/><stop offset=".9554" stop-color="#953b02"/><stop offset=".9637" stop-color="#655d07"/><stop offset=".9969" stop-color="#7d4c04"/><stop offset=".999" stop-color="#1a8a2d"/></linearGradient><linearGradient id="g235" x2="0" y2="1"><stop offset=".001" stop-color="#0b942d"/><stop offset=".0031" stop-color="#0b9013"/><stop offset=".582" stop-color="#347c0b"/><stop offset=".6193" stop-color="#824b02"/><stop offset=".6483" stop-color="#bb1e01"/><stop offset=".6732" stop-color="#c91701"/><stop offset=".7334" stop-color="#ce1b00"/><stop offset=".8019" stop-color="#eca600"/><stop offset=".8454" stop-color="#f7d700"/><stop offset=".8849" stop-color="#f8dc00"/><stop offset=".9035" stop-color="#eeb000"/><stop offset=".9409" stop-color="#cd1a00"/><stop offset=".9554" stop-color="#953b02"/><stop offset=".9637" stop-color="#655d07"/><stop offset=".9969" stop-color="#7d4c04"/><stop offset=".999" stop-color="#1a8a2d"/></linearGradient><linearGradient id="g236" x2="0" y2="1"><stop offset=".001" stop-color="#0b942d"/><stop offset=".0031" stop-color="#0b9013"/><stop offset=".3185" stop-color="#25830a"/><stop offset=".5799" stop-color="#6b5b03"/><stop offset=".611" stop-color="#b32402"/><stop offset=".638" stop-color="#c91601"/><stop offset=".7313" stop-color="#cc1900"/><stop offset=".8039" stop-color="#eeae00"/><stop offset=".8475" stop-color="#f9dd00"/><stop offset=".8849" stop-color="#fae100"/><stop offset=".9035" stop-color="#efb500"/><stop offset=".9326" stop-color="#d63800"/><stop offset=".9409" stop-color="#cd1a00"/><stop offset=".9554" stop-color="#953b02"/><stop offset=".9637" stop-color="#655d07"/><stop offset=".9969" stop-color="#7d4c04"/><stop offset=".999" stop-color="#1a8a2d"/></linearGradient><linearGradient id="g237" x2="0" y2="1"><stop offset=".001" stop-color="#0b942d"/><stop offset=".0031" stop-color="#0b9013"/><stop offset=".2085" stop-color="#1e860a"/><stop offset=".3102" stop-color="#447403"/><stop offset=".3766" stop-color="#646202"/><stop offset=".584" stop-color="#a53002"/><stop offset=".611" stop-color="#c81601"/><stop offset=".7334" stop-color="#d12100"/><stop offset=".7521" stop-color="#d84600"/><stop offset=".8019" stop-color="#eeb100"/><stop offset=".8434" stop-color="#fae100"/><stop offset=".8849" stop-color="#fbe600"/><stop offset=".9035" stop-color="#f0bb00"/><stop offset=".9305" stop-color="#d84400"/><stop offset=".9409" stop-color="#cd1a00"/><stop offset=".9533" stop-color="#a03402"/><stop offset=".9637" stop-color="#655d07"/><stop offset=".9969" stop-color="#7d4c04"/><stop offset=".999" stop-color="#1a8a2d"/></linearGradient><linearGradient id="g238" x2="0" y2="1"><stop offset=".001" stop-color="#0b942d"/><stop offset=".0031" stop-color="#0b9013"/><stop offset=".2127" stop-color="#1e860a"/><stop offset=".3019" stop-color="#516d02"/><stop offset=".3537" stop-color="#765702"/><stop offset=".5716" stop-color="#b12602"/><stop offset=".5985" stop-color="#c91601"/><stop offset=".6815" stop-color="#d12000"/><stop offset=".7624" stop-color="#de6300"/><stop offset=".8122" stop-color="#f3c600"/><stop offset=".8537" stop-color="#fcea00"/><stop offset=".8869" stop-color="#fbe800"/><stop offset=".9056" stop-color="#f0b800"/><stop offset=".9409" stop-color="#cd1a00"/><stop offset=".9533" stop-color="#a03402"/><stop offset=".9637" stop-color="#655d07"/><stop offset=".9969" stop-color="#7d4c04"/><stop offset=".999" stop-color="#1a8a2d"/></linearGradient><linearGradient id="g239" x2="0" y2="1"><stop offset=".001" stop-color="#0b942d"/><stop offset=".0031" stop-color="#0b9013"/><stop offset=".2085" stop-color="#1e860a"/><stop offset=".3102" stop-color="#447403"/><stop offset=".3766" stop-color="#646202"/><stop offset=".5965" stop-color="#a92d02"/><stop offset=".6234" stop-color="#c91601"/><stop offset=".6525" stop-color="#c91701"/><stop offset=".6629" stop-color="#d22600"/><stop offset=".7998" stop-color="#f1bf00"/><stop offset=".8185" stop-color="#f5cf00"/><stop offset=".862" stop-color="#fcec00"/><stop offset=".8869" stop-color="#fbe800"/><stop offset=".9056" stop-color="#f0b800"/><stop offset=".9409" stop-color="#cd1a00"/><stop offset=".9533" stop-color="#a03402"/><stop offset=".9637" stop-color="#655d07"/><stop offset=".9969" stop-color="#7d4c04"/><stop offset=".999" stop-color="#1a8a2d"/></linearGradient><linearGradient id="g240" x2="0" y2="1"><stop offset=".001" stop-color="#0b942d"/><stop offset=".0031" stop-color="#0b9013"/><stop offset=".3185" stop-color="#25830a"/><stop offset=".6027" stop-color="#715703"/><stop offset=".6338" stop-color="#b62202"/><stop offset=".6629" stop-color="#cd1800"/><stop offset=".7459" stop-color="#db5100"/><stop offset=".7687" stop-color="#e06c00"/><stop offset=".8185" stop-color="#f3c600"/><stop offset=".8641" stop-color="#fbe600"/><stop offset=".8869" stop-color="#f9e000"/><stop offset=".9056" stop-color="#eeb000"/><stop offset=".9409" stop-color="#cd1a00"/><stop offset=".9554" stop-color="#953b02"/><stop offset=".9637" stop-color="#655d07"/><stop offset=".9969" stop-color="#7d4c04"/><stop offset=".999" stop-color="#1a8a2d"/></linearGradient><linearGradient id="g241" x2="0" y2="1"><stop offset=".001" stop-color="#0b942d"/><stop offset=".0031" stop-color="#0b9013"/><stop offset=".6172" stop-color="#387a0b"/><stop offset=".6525" stop-color="#7f4d02"/><stop offset=".6546" stop-color="#ba1f01"/><stop offset=".7189" stop-color="#cf1c00"/><stop offset=".7417" stop-color="#d32900"/><stop offset=".7977" stop-color="#eba000"/><stop offset=".8413" stop-color="#f7d500"/><stop offset=".8828" stop-color="#f9df00"/><stop offset=".9015" stop-color="#f0b700"/><stop offset=".9284" stop-color="#d94a00"/><stop offset=".9409" stop-color="#cd1a00"/><stop offset=".9554" stop-color="#953b02"/><stop offset=".9637" stop-color="#655d07"/><stop offset=".9969" stop-color="#7d4c04"/><stop offset=".999" stop-color="#1a8a2d"/></linearGradient><linearGradient id="g242" x2="0" y2="1"><stop offset=".001" stop-color="#0b942d"/><stop offset=".0031" stop-color="#0b9013"/><stop offset=".6525" stop-color="#317d0e"/><stop offset=".6546" stop-color="#9a3902"/><stop offset=".723" stop-color="#bb1f01"/><stop offset=".7355" stop-color="#cf1c00"/><stop offset=".8019" stop-color="#eba200"/><stop offset=".8475" stop-color="#f6d300"/><stop offset=".8849" stop-color="#f7d700"/><stop offset=".9056" stop-color="#eca500"/><stop offset=".9409" stop-color="#cd1a00"/><stop offset=".9554" stop-color="#953b02"/><stop offset=".9637" stop-color="#655d07"/><stop offset=".9969" stop-color="#7d4c04"/><stop offset=".999" stop-color="#1a8a2d"/></linearGradient><linearGradient id="g243" x2="0" y2="1"><stop offset=".001" stop-color="#0b942d"/><stop offset=".0031" stop-color="#0b9013"/><stop offset=".6608" stop-color="#367b0c"/><stop offset=".6981" stop-color="#814b02"/><stop offset=".7293" stop-color="#c81801"/><stop offset=".75" stop-color="#d63700"/><stop offset=".8019" stop-color="#ea9d00"/><stop offset=".8475" stop-color="#f5cf00"/><stop offset=".8849" stop-color="#f6d300"/><stop offset=".9056" stop-color="#eba100"/><stop offset=".9409" stop-color="#cd1a00"/><stop offset=".9554" stop-color="#953b02"/><stop offset=".9637" stop-color="#655d07"/><stop offset=".9969" stop-color="#7d4c04"/><stop offset=".999" stop-color="#1a8a2d"/></linearGradient><linearGradient id="g244" x2="0" y2="1"><stop offset=".001" stop-color="#0b942d"/><stop offset=".0031" stop-color="#0b9013"/><stop offset=".36" stop-color="#28820a"/><stop offset=".6919" stop-color="#804c02"/><stop offset=".7023" stop-color="#8c4402"/><stop offset=".7313" stop-color="#ca1801"/><stop offset=".7583" stop-color="#d94700"/><stop offset=".8081" stop-color="#eba200"/><stop offset=".8558" stop-color="#f5ce00"/><stop offset=".8849" stop-color="#f5ce00"/><stop offset=".9056" stop-color="#ea9d00"/><stop offset=".9409" stop-color="#cc1a00"/><stop offset=".9554" stop-color="#953b02"/><stop offset=".9637" stop-color="#655d07"/><stop offset=".9969" stop-color="#7d4c04"/><stop offset=".999" stop-color="#1a8a2d"/></linearGradient><linearGradient id="g245" x2="0" y2="1"><stop offset=".001" stop-color="#0b942d"/><stop offset=".0031" stop-color="#0b9013"/><stop offset=".2936" stop-color="#23840a"/><stop offset=".3869" stop-color="#576902"/><stop offset=".4616" stop-color="#765502"/><stop offset=".6898" stop-color="#a92d02"/><stop offset=".7189" stop-color="#ae2902"/><stop offset=".7334" stop-color="#cc1900"/><stop offset=".8081" stop-color="#ea9e00"/><stop offset=".8558" stop-color="#f4c900"/><stop offset=".8849" stop-color="#f4c900"/><stop offset=".9077" stop-color="#e89200"/><stop offset=".9409" stop-color="#cc1a00"/><stop offset=".9554" stop-color="#953b02"/><stop offset=".9637" stop-color="#655d07"/><stop offset=".9969" stop-color="#7d4c04"/><stop offset=".999" stop-color="#1a8a2d"/></linearGradient><linearGradient id="g246" x2="0" y2="1"><stop offset=".001" stop-color="#0b942d"/><stop offset=".0031" stop-color="#0b9013"/><stop offset=".36" stop-color="#28820a"/><stop offset=".6919" stop-color="#804c02"/><stop offset=".7023" stop-color="#8c4402"/><stop offset=".7313" stop-color="#c91801"/><stop offset=".7562" stop-color="#d73e00"/><stop offset=".8081" stop-color="#e99800"/><stop offset=".8579" stop-color="#f3c400"/><stop offset=".8849" stop-color="#f2c300"/><stop offset=".9077" stop-color="#e78e00"/><stop offset=".9409" stop-color="#cc1900"/><stop offset=".9554" stop-color="#953b02"/><stop offset=".9637" stop-color="#655d07"/><stop offset=".9969" stop-color="#7d4c04"/><stop offset=".999" stop-color="#1a8a2d"/></linearGradient><linearGradient id="g247" x2="0" y2="1"><stop offset=".001" stop-color="#0b942d"/><stop offset=".0031" stop-color="#0b9013"/><stop offset=".6608" stop-color="#367b0c"/><stop offset=".6981" stop-color="#814b02"/><stop offset=".7313" stop-color="#c81801"/><stop offset=".7541" stop-color="#d53500"/><stop offset=".8081" stop-color="#e79100"/><stop offset=".8579" stop-color="#f0ba00"/><stop offset=".8849" stop-color="#f0ba00"/><stop offset=".9098" stop-color="#e48100"/><stop offset=".9388" stop-color="#cf1d00"/><stop offset=".9429" stop-color="#c81901"/><stop offset=".9575" stop-color="#8a4303"/><stop offset=".9637" stop-color="#655d07"/><stop offset=".9969" stop-color="#7d4c04"/><stop offset=".999" stop-color="#1a8a2d"/></linearGradient><linearGradient id="g248" x2="0" y2="1"><stop offset=".001" stop-color="#0b942d"/><stop offset=".0031" stop-color="#0b9013"/><stop offset=".6608" stop-color="#367b0c"/><stop offset=".6981" stop-color="#814b02"/><stop offset=".7334" stop-color="#c91801"/><stop offset=".7604" stop-color="#d73c00"/><stop offset=".8143" stop-color="#e78f00"/><stop offset=".8662" stop-color="#eeb100"/><stop offset=".8869" stop-color="#edac00"/><stop offset=".9139" stop-color="#e06d00"/><stop offset=".9388" stop-color="#cf1c00"/><stop offset=".9429" stop-color="#c81901"/><stop offset=".9575" stop-color="#8a4303"/><stop offset=".9637" stop-color="#655d07"/><stop offset=".9969" stop-color="#7d4c04"/><stop offset=".999" stop-color="#1a8a2d"/></linearGradient><linearGradient id="g249" x2="0" y2="1"><stop offset=".001" stop-color="#0b942d"/><stop offset=".0031" stop-color="#0b9013"/><stop offset=".6608" stop-color="#367b0c"/><stop offset=".6981" stop-color="#814b02"/><stop offset=".7334" stop-color="#c81801"/><stop offset=".7604" stop-color="#d63900"/><stop offset=".8143" stop-color="#e68900"/><stop offset=".8683" stop-color="#edaa00"/><stop offset=".889" stop-color="#eba100"/><stop offset=".918" stop-color="#dd5b00"/><stop offset=".9409" stop-color="#cc1900"/><stop offset=".9554" stop-color="#953b02"/><stop offset=".9637" stop-color="#655d07"/><stop offset=".9969" stop-color="#7d4c04"/><stop offset=".999" stop-color="#1a8a2d"/></linearGradient><linearGradient id="g250" x2="0" y2="1"><stop offset=".001" stop-color="#0b942d"/><stop offset=".0031" stop-color="#0b9013"/><stop offset=".6608" stop-color="#367b0c"/><stop offset=".6981" stop-color="#814b02"/><stop offset=".7334" stop-color="#c91801"/><stop offset=".7624" stop-color="#d73d00"/><stop offset=".8164" stop-color="#e68a00"/><stop offset=".8703" stop-color="#edaa00"/><stop offset=".889" stop-color="#eba000"/><stop offset=".918" stop-color="#dc5a00"/><stop offset=".9409" stop-color="#cc1900"/><stop offset=".9554" stop-color="#953b02"/><stop offset=".9637" stop-color="#655d07"/><stop offset=".9969" stop-color="#7d4c04"/><stop offset=".999" stop-color="#1a8a2d"/></linearGradient><linearGradient id="g251" x2="0" y2="1"><stop offset=".001" stop-color="#0b942d"/><stop offset=".0031" stop-color="#0b9013"/><stop offset=".6608" stop-color="#367b0c"/><stop offset=".6981" stop-color="#814b02"/><stop offset=".7334" stop-color="#c91801"/><stop offset=".7645" stop-color="#d84300"/><stop offset=".8164" stop-color="#e78c00"/><stop offset=".8703" stop-color="#edac00"/><stop offset=".889" stop-color="#eba100"/><stop offset=".918" stop-color="#dd5b00"/><stop offset=".9409" stop-color="#cc1900"/><stop offset=".9554" stop-color="#953b02"/><stop offset=".9637" stop-color="#655d07"/><stop offset=".9969" stop-color="#7d4c04"/><stop offset=".999" stop-color="#1a8a2d"/></linearGradient><linearGradient id="g252" x2="0" y2="1"><stop offset=".001" stop-color="#0b942d"/><stop offset=".0031" stop-color="#0b9013"/><stop offset=".6608" stop-color="#367b0c"/><stop offset=".6981" stop-color="#814b02"/><stop offset=".7313" stop-color="#c71801"/><stop offset=".7562" stop-color="#d53400"/><stop offset=".8122" stop-color="#e68800"/><stop offset=".8662" stop-color="#edab00"/><stop offset=".8869" stop-color="#eba300"/><stop offset=".916" stop-color="#de6100"/><stop offset=".9388" stop-color="#ce1c00"/><stop offset=".9429" stop-color="#c81901"/><stop offset=".9575" stop-color="#8a4303"/><stop offset=".9637" stop-color="#655d07"/><stop offset=".9969" stop-color="#7d4c04"/><stop offset=".999" stop-color="#1a8a2d"/></linearGradient><linearGradient id="g253" x2="0" y2="1"><stop offset=".001" stop-color="#0b942d"/><stop offset=".0031" stop-color="#0b9013"/><stop offset=".6608" stop-color="#367b0c"/><stop offset=".6981" stop-color="#814b02"/><stop offset=".7313" stop-color="#c71801"/><stop offset=".7562" stop-color="#d53400"/><stop offset=".8122" stop-color="#e58600"/><stop offset=".8662" stop-color="#eca800"/><stop offset=".8869" stop-color="#eba000"/><stop offset=".916" stop-color="#dd5e00"/><stop offset=".9388" stop-color="#ce1b00"/><stop offset=".9429" stop-color="#c81901"/><stop offset=".9575" stop-color="#8a4303"/><stop offset=".9637" stop-color="#655d07"/><stop offset=".9969" stop-color="#7d4c04"/><stop offset=".999" stop-color="#1a8a2d"/></linearGradient><linearGradient id="g254" x2="0" y2="1"><stop offset=".001" stop-color="#0b942d"/><stop offset=".0031" stop-color="#0b9013"/><stop offset=".6608" stop-color="#367b0c"/><stop offset=".6981" stop-color="#814b02"/><stop offset=".7313" stop-color="#c71801"/><stop offset=".7562" stop-color="#d53200"/><stop offset=".8143" stop-color="#e58500"/><stop offset=".8683" stop-color="#eba400"/><stop offset=".889" stop-color="#e99900"/><stop offset=".918" stop-color="#dc5500"/><stop offset=".9409" stop-color="#cb1900"/><stop offset=".9554" stop-color="#953b02"/><stop offset=".9637" stop-color="#655d07"/><stop offset=".9969" stop-color="#7d4c04"/><stop offset=".999" stop-color="#1a8a2d"/></linearGradient><linearGradient id="g255" x2="0" y2="1"><stop offset=".001" stop-color="#0b942d"/><stop offset=".0031" stop-color="#0b9013"/><stop offset=".6608" stop-color="#367b0c"/><stop offset=".6981" stop-color="#814b02"/><stop offset=".7313" stop-color="#c71801"/><stop offset=".7562" stop-color="#d53100"/><stop offset=".8143" stop-color="#e48200"/><stop offset=".8683" stop-color="#ea9f00"/><stop offset=".889" stop-color="#e89400"/><stop offset=".918" stop-color="#db5300"/><stop offset=".9409" stop-color="#cb1900"/><stop offset=".9554" stop-color="#953b02"/><stop offset=".9637" stop-color="#655d07"/><stop offset=".9969" stop-color="#7d4c04"/><stop offset=".999" stop-color="#1a8a2d"/></linearGradient><linearGradient id="g256" x2="0" y2="1"><stop offset=".001" stop-color="#0b942d"/><stop offset=".0031" stop-color="#0b9013"/><stop offset=".6608" stop-color="#367b0c"/><stop offset=".6981" stop-color="#814b02"/><stop offset=".7313" stop-color="#c71801"/><stop offset=".7562" stop-color="#d43000"/><stop offset=".8164" stop-color="#e48000"/><stop offset=".8724" stop-color="#ea9c00"/><stop offset=".8952" stop-color="#e58600"/><stop offset=".9409" stop-color="#cb1900"/><stop offset=".9554" stop-color="#953b02"/><stop offset=".9637" stop-color="#655d07"/><stop offset=".9969" stop-color="#7d4c04"/><stop offset=".999" stop-color="#1a8a2d"/></linearGradient><linearGradient id="g257" x2="0" y2="1"><stop offset=".001" stop-color="#0b942d"/><stop offset=".0031" stop-color="#0b9013"/><stop offset=".2521" stop-color="#1a890e"/><stop offset=".2811" stop-color="#23840a"/><stop offset=".6857" stop-color="#636004"/><stop offset=".7313" stop-color="#c71801"/><stop offset=".7583" stop-color="#d53200"/><stop offset=".8164" stop-color="#e47e00"/><stop offset=".8724" stop-color="#e99800"/><stop offset=".8952" stop-color="#e58300"/><stop offset=".9409" stop-color="#cb1900"/><stop offset=".9554" stop-color="#953b02"/><stop offset=".9637" stop-color="#655d07"/><stop offset=".9969" stop-color="#7d4c04"/><stop offset=".999" stop-color="#1a8a2d"/></linearGradient><linearGradient id="g258" x2="0" y2="1"><stop offset=".001" stop-color="#0b942d"/><stop offset=".0031" stop-color="#3d7600"/><stop offset=".4616" stop-color="#a43102"/><stop offset=".6836" stop-color="#c51801"/><stop offset=".7438" stop-color="#d01f00"/><stop offset=".8143" stop-color="#e37d00"/><stop offset=".8703" stop-color="#e99900"/><stop offset=".8932" stop-color="#e58600"/><stop offset=".9284" stop-color="#d53100"/><stop offset=".9429" stop-color="#c81901"/><stop offset=".9575" stop-color="#8a4303"/><stop offset=".9637" stop-color="#655d07"/><stop offset=".9969" stop-color="#7d4c04"/><stop offset=".999" stop-color="#1a8a2d"/></linearGradient><linearGradient id="g259" x2="0" y2="1"><stop offset=".001" stop-color="#0b942d"/><stop offset=".0031" stop-color="#3d7600"/><stop offset=".4616" stop-color="#a43102"/><stop offset=".6234" stop-color="#be1b01"/><stop offset=".6504" stop-color="#c91701"/><stop offset=".7376" stop-color="#ce1a00"/><stop offset=".8164" stop-color="#e58300"/><stop offset=".8724" stop-color="#ea9e00"/><stop offset=".8952" stop-color="#e58600"/><stop offset=".9409" stop-color="#cb1900"/><stop offset=".9554" stop-color="#953b02"/><stop offset=".9637" stop-color="#655d07"/><stop offset=".9969" stop-color="#7d4c04"/><stop offset=".999" stop-color="#1a8a2d"/></linearGradient><linearGradient id="g260" x2="0" y2="1"><stop offset=".001" stop-color="#0b942d"/><stop offset=".0031" stop-color="#0b9013"/><stop offset=".2521" stop-color="#1a890e"/><stop offset=".2811" stop-color="#23840a"/><stop offset=".6027" stop-color="#576804"/><stop offset=".6463" stop-color="#b62202"/><stop offset=".6732" stop-color="#c91701"/><stop offset=".7396" stop-color="#cf1c00"/><stop offset=".8164" stop-color="#e47f00"/><stop offset=".8724" stop-color="#e99800"/><stop offset=".8973" stop-color="#e47e00"/><stop offset=".9409" stop-color="#cb1900"/><stop offset=".9554" stop-color="#953b02"/><stop offset=".9637" stop-color="#655d07"/><stop offset=".9969" stop-color="#7d4c04"/><stop offset=".999" stop-color="#1a8a2d"/></linearGradient><linearGradient id="g261" x2="0" y2="1"><stop offset=".001" stop-color="#0b942d"/><stop offset=".0031" stop-color="#0b9013"/><stop offset=".6131" stop-color="#357b0c"/><stop offset=".6504" stop-color="#824b02"/><stop offset=".6815" stop-color="#bd1d01"/><stop offset=".7085" stop-color="#c81801"/><stop offset=".7479" stop-color="#d12100"/><stop offset=".8205" stop-color="#e17300"/><stop offset=".8766" stop-color="#e58700"/><stop offset=".9056" stop-color="#dd5f00"/><stop offset=".9388" stop-color="#cc1900"/><stop offset=".9533" stop-color="#9b3702"/><stop offset=".9637" stop-color="#655d07"/><stop offset=".9969" stop-color="#7d4c04"/><stop offset=".999" stop-color="#1a8a2d"/></linearGradient><linearGradient id="g262" x2="0" y2="1"><stop offset=".001" stop-color="#0b942d"/><stop offset=".0031" stop-color="#0b9013"/><stop offset=".6421" stop-color="#377a0b"/><stop offset=".6795" stop-color="#844902"/><stop offset=".7106" stop-color="#be1c01"/><stop offset=".7479" stop-color="#d01e00"/><stop offset=".8288" stop-color="#e06b00"/><stop offset=".8807" stop-color="#e27500"/><stop offset=".9139" stop-color="#d84300"/><stop offset=".9388" stop-color="#cb1901"/><stop offset=".9533" stop-color="#953b02"/><stop offset=".9616" stop-color="#655d07"/><stop offset=".9865" stop-color="#735305"/><stop offset=".9969" stop-color="#7d4c04"/><stop offset=".999" stop-color="#1a8a2d"/></linearGradient><linearGradient id="g263" x2="0" y2="1"><stop offset=".001" stop-color="#0b942d"/><stop offset=".0031" stop-color="#0b9013"/><stop offset=".6691" stop-color="#367a0c"/><stop offset=".7023" stop-color="#765303"/><stop offset=".721" stop-color="#b32401"/><stop offset=".7417" stop-color="#cc1900"/><stop offset=".8371" stop-color="#df6500"/><stop offset=".8828" stop-color="#df6900"/><stop offset=".9388" stop-color="#c91901"/><stop offset=".9533" stop-color="#903f03"/><stop offset=".9616" stop-color="#655d07"/><stop offset=".9865" stop-color="#735305"/><stop offset=".9969" stop-color="#7d4c04"/><stop offset=".999" stop-color="#1a8a2d"/></linearGradient><linearGradient id="g264" x2="0" y2="1"><stop offset=".001" stop-color="#0b942d"/><stop offset=".0031" stop-color="#0b9013"/><stop offset=".6691" stop-color="#367a0c"/><stop offset=".7002" stop-color="#745503"/><stop offset=".721" stop-color="#b42301"/><stop offset=".7438" stop-color="#cd1a00"/><stop offset=".8392" stop-color="#de6000"/><stop offset=".8828" stop-color="#de6300"/><stop offset=".9367" stop-color="#ca1901"/><stop offset=".9512" stop-color="#953b02"/><stop offset=".9595" stop-color="#655d07"/><stop offset=".9824" stop-color="#6f5606"/><stop offset=".9969" stop-color="#7d4c04"/><stop offset=".999" stop-color="#1a8a2d"/></linearGradient><linearGradient id="g265" x2="0" y2="1"><stop offset=".001" stop-color="#0b942d"/><stop offset=".0031" stop-color="#0b9013"/><stop offset=".6691" stop-color="#367a0c"/><stop offset=".7002" stop-color="#745503"/><stop offset=".7189" stop-color="#b12602"/><stop offset=".7396" stop-color="#cb1900"/><stop offset=".8392" stop-color="#de6400"/><stop offset=".8828" stop-color="#df6700"/><stop offset=".9367" stop-color="#ca1901"/><stop offset=".9512" stop-color="#953b02"/><stop offset=".9595" stop-color="#655d07"/><stop offset=".9824" stop-color="#6f5606"/><stop offset=".9969" stop-color="#7d4c04"/><stop offset=".999" stop-color="#1a8a2d"/></linearGradient><linearGradient id="g266" x2="0" y2="1"><stop offset=".001" stop-color="#0b942d"/><stop offset=".0031" stop-color="#0b9013"/><stop offset=".6691" stop-color="#367a0c"/><stop offset=".7002" stop-color="#745403"/><stop offset=".7189" stop-color="#b22502"/><stop offset=".7396" stop-color="#cc1900"/><stop offset=".8371" stop-color="#df6700"/><stop offset=".8828" stop-color="#e06a00"/><stop offset=".9367" stop-color="#ca1901"/><stop offset=".9512" stop-color="#953b02"/><stop offset=".9595" stop-color="#655d07"/><stop offset=".9824" stop-color="#6f5606"/><stop offset=".9969" stop-color="#7d4c04"/><stop offset=".999" stop-color="#1a8a2d"/></linearGradient><linearGradient id="g267" x2="0" y2="1"><stop offset=".001" stop-color="#0b942d"/><stop offset=".0031" stop-color="#0b9013"/><stop offset=".6691" stop-color="#367a0c"/><stop offset=".7002" stop-color="#745403"/><stop offset=".7189" stop-color="#b32501"/><stop offset=".7396" stop-color="#cc1900"/><stop offset=".8351" stop-color="#df6700"/><stop offset=".8828" stop-color="#e06c00"/><stop offset=".9222" stop-color="#d42c00"/><stop offset=".9388" stop-color="#c81901"/><stop offset=".9533" stop-color="#8a4303"/><stop offset=".9595" stop-color="#655d07"/><stop offset=".9824" stop-color="#6f5606"/><stop offset=".9969" stop-color="#7d4c04"/><stop offset=".999" stop-color="#1a8a2d"/></linearGradient><linearGradient id="g268" x2="0" y2="1"><stop offset=".001" stop-color="#0b942d"/><stop offset=".0031" stop-color="#278002"/><stop offset=".3081" stop-color="#993d02"/><stop offset=".5322" stop-color="#ca1401"/><stop offset=".7459" stop-color="#d63a00"/><stop offset=".7977" stop-color="#da4f00"/><stop offset=".86" stop-color="#e17000"/><stop offset=".8869" stop-color="#df6800"/><stop offset=".9077" stop-color="#dc5800"/><stop offset=".9533" stop-color="#cf2300"/><stop offset=".9824" stop-color="#b72401"/><stop offset=".9969" stop-color="#9d3602"/><stop offset=".999" stop-color="#1a8a2d"/></linearGradient><linearGradient id="g269" x2="0" y2="1"><stop offset=".001" stop-color="#0b942d"/><stop offset=".0031" stop-color="#914a03"/><stop offset=".1566" stop-color="#c21301"/><stop offset=".3226" stop-color="#d01600"/><stop offset=".5218" stop-color="#d73c00"/><stop offset=".9015" stop-color="#eeae00"/><stop offset=".9803" stop-color="#d12700"/><stop offset=".9969" stop-color="#c61e01"/><stop offset=".999" stop-color="#1a8a2d"/></linearGradient><linearGradient id="g270" x2="0" y2="1"><stop offset=".001" stop-color="#0b942d"/><stop offset=".0031" stop-color="#9e3c04"/><stop offset=".1276" stop-color="#c51001"/><stop offset=".2998" stop-color="#d01900"/><stop offset=".501" stop-color="#d84400"/><stop offset=".9015" stop-color="#f4c800"/><stop offset=".9865" stop-color="#d22900"/><stop offset=".9969" stop-color="#cc2000"/><stop offset=".999" stop-color="#1a8a2d"/></linearGradient><linearGradient id="g271" x2="0" y2="1"><stop offset=".001" stop-color="#0b942d"/><stop offset=".0031" stop-color="#387800"/><stop offset=".1795" stop-color="#9c3c03"/><stop offset=".3164" stop-color="#c41401"/><stop offset=".472" stop-color="#d11c00"/><stop offset=".9015" stop-color="#eeae00"/><stop offset=".9741" stop-color="#d22800"/><stop offset=".9969" stop-color="#bd2101"/><stop offset=".999" stop-color="#1a8a2d"/></linearGradient><linearGradient id="g272" x2="0" y2="1"><stop offset=".001" stop-color="#0b942d"/><stop offset=".0031" stop-color="#198705"/><stop offset=".4471" stop-color="#8d4502"/><stop offset=".5384" stop-color="#c11801"/><stop offset=".64" stop-color="#d11f00"/><stop offset=".9015" stop-color="#e37a00"/><stop offset=".9595" stop-color="#d02400"/><stop offset=".9844" stop-color="#b82401"/><stop offset=".9969" stop-color="#9e3502"/><stop offset=".999" stop-color="#1a8a2d"/></linearGradient><linearGradient id="g273" x2="0" y2="1"><stop offset=".001" stop-color="#0b942d"/><stop offset=".0031" stop-color="#0f8d0b"/><stop offset=".4512" stop-color="#536b03"/><stop offset=".5902" stop-color="#ac2a02"/><stop offset=".7023" stop-color="#ca1801"/><stop offset=".779" stop-color="#d22500"/><stop offset=".8454" stop-color="#da4f00"/><stop offset=".8745" stop-color="#d94800"/><stop offset=".8932" stop-color="#d73c00"/><stop offset=".9533" stop-color="#c51e01"/><stop offset=".9907" stop-color="#933d02"/><stop offset=".9969" stop-color="#874503"/><stop offset=".999" stop-color="#1a8a2d"/></linearGradient><linearGradient id="g274" x2="0" y2="1"><stop offset=".001" stop-color="#0b942d"/><stop offset=".0031" stop-color="#0b9013"/><stop offset=".6919" stop-color="#377a0d"/><stop offset=".7272" stop-color="#7d4e03"/><stop offset=".7459" stop-color="#b72201"/><stop offset=".7687" stop-color="#ce1b00"/><stop offset=".8454" stop-color="#d94900"/><stop offset=".8745" stop-color="#d73f00"/><stop offset=".9118" stop-color="#c81901"/><stop offset=".9243" stop-color="#884403"/><stop offset=".9326" stop-color="#4d6c0c"/><stop offset=".9782" stop-color="#53680a"/><stop offset=".9969" stop-color="#655d07"/><stop offset=".999" stop-color="#1a8a2d"/></linearGradient><linearGradient id="g275" x2="0" y2="1"><stop offset=".001" stop-color="#0b942d"/><stop offset=".0031" stop-color="#0b9013"/><stop offset=".6919" stop-color="#377a0d"/><stop offset=".7293" stop-color="#814b02"/><stop offset=".7479" stop-color="#b82101"/><stop offset=".7728" stop-color="#cf1c00"/><stop offset=".8454" stop-color="#d94700"/><stop offset=".8745" stop-color="#d73d00"/><stop offset=".9098" stop-color="#ca1901"/><stop offset=".9222" stop-color="#943c02"/><stop offset=".9326" stop-color="#4d6c0c"/><stop offset=".9782" stop-color="#53680a"/><stop offset=".9969" stop-color="#655d07"/><stop offset=".999" stop-color="#1a8a2d"/></linearGradient><linearGradient id="g276" x2="0" y2="1"><stop offset=".001" stop-color="#0b942d"/><stop offset=".0031" stop-color="#0b9013"/><stop offset=".6919" stop-color="#377a0d"/><stop offset=".7293" stop-color="#814b02"/><stop offset=".7541" stop-color="#bf1c01"/><stop offset=".7832" stop-color="#d12100"/><stop offset=".8496" stop-color="#d84400"/><stop offset=".8807" stop-color="#d53400"/><stop offset=".9098" stop-color="#c91901"/><stop offset=".9222" stop-color="#923d02"/><stop offset=".9326" stop-color="#4d6c0c"/><stop offset=".9782" stop-color="#53680a"/><stop offset=".9969" stop-color="#655d07"/><stop offset=".999" stop-color="#1a8a2d"/></linearGradient><linearGradient id="g277" x2="0" y2="1"><stop offset=".001" stop-color="#0b942d"/><stop offset=".0031" stop-color="#0b9013"/><stop offset=".6919" stop-color="#377a0d"/><stop offset=".7293" stop-color="#814b02"/><stop offset=".7583" stop-color="#c21b01"/><stop offset=".7936" stop-color="#d22600"/><stop offset=".8558" stop-color="#d84200"/><stop offset=".9098" stop-color="#c91901"/><stop offset=".9222" stop-color="#903f03"/><stop offset=".9326" stop-color="#4d6c0c"/><stop offset=".9782" stop-color="#53680a"/><stop offset=".9969" stop-color="#655d07"/><stop offset=".999" stop-color="#1a8a2d"/></linearGradient><linearGradient id="g278" x2="0" y2="1"><stop offset=".001" stop-color="#0b942d"/><stop offset=".0031" stop-color="#0b9013"/><stop offset=".6919" stop-color="#377a0d"/><stop offset=".7293" stop-color="#814b02"/><stop offset=".7604" stop-color="#c31a01"/><stop offset=".7998" stop-color="#d32b00"/><stop offset=".8579" stop-color="#d84200"/><stop offset=".9098" stop-color="#c91901"/><stop offset=".9222" stop-color="#8e4003"/><stop offset=".9305" stop-color="#54680a"/><stop offset=".9741" stop-color="#4f6a0b"/><stop offset=".9969" stop-color="#655d07"/><stop offset=".999" stop-color="#1a8a2d"/></linearGradient><linearGradient id="g279" x2="0" y2="1"><stop offset=".001" stop-color="#0b942d"/><stop offset=".0031" stop-color="#0b9013"/><stop offset=".6919" stop-color="#377a0d"/><stop offset=".7293" stop-color="#814b02"/><stop offset=".7604" stop-color="#c31a01"/><stop offset=".7956" stop-color="#d32900"/><stop offset=".8537" stop-color="#d84600"/><stop offset=".8869" stop-color="#d42d00"/><stop offset=".9098" stop-color="#c81901"/><stop offset=".9222" stop-color="#8c4203"/><stop offset=".9305" stop-color="#52690b"/><stop offset=".9782" stop-color="#53680a"/><stop offset=".9969" stop-color="#655d07"/><stop offset=".999" stop-color="#1a8a2d"/></linearGradient><linearGradient id="g280" x2="0" y2="1"><stop offset=".001" stop-color="#0b942d"/><stop offset=".0031" stop-color="#0b9013"/><stop offset=".6919" stop-color="#377a0d"/><stop offset=".7293" stop-color="#814b02"/><stop offset=".7624" stop-color="#c51901"/><stop offset=".8039" stop-color="#d43100"/><stop offset=".8579" stop-color="#d94800"/><stop offset=".9098" stop-color="#c81901"/><stop offset=".9222" stop-color="#8a4303"/><stop offset=".9305" stop-color="#4f6a0b"/><stop offset=".9782" stop-color="#53680a"/><stop offset=".9969" stop-color="#655d07"/><stop offset=".999" stop-color="#1a8a2d"/></linearGradient><linearGradient id="g281" x2="0" y2="1"><stop offset=".001" stop-color="#0b942d"/><stop offset=".0031" stop-color="#0b9013"/><stop offset=".6919" stop-color="#377a0d"/><stop offset=".7293" stop-color="#814b02"/><stop offset=".7645" stop-color="#c51901"/><stop offset=".8143" stop-color="#d63600"/><stop offset=".862" stop-color="#d84500"/><stop offset=".9098" stop-color="#c81901"/><stop offset=".9222" stop-color="#884403"/><stop offset=".9305" stop-color="#4d6c0c"/><stop offset=".9782" stop-color="#53680a"/><stop offset=".9969" stop-color="#655d07"/><stop offset=".999" stop-color="#1a8a2d"/></linearGradient><linearGradient id="g282" x2="0" y2="1"><stop offset=".001" stop-color="#0b942d"/><stop offset=".0031" stop-color="#0b9013"/><stop offset=".6919" stop-color="#377a0d"/><stop offset=".7293" stop-color="#814b02"/><stop offset=".7645" stop-color="#c41a01"/><stop offset=".8081" stop-color="#d43000"/><stop offset=".862" stop-color="#d84200"/><stop offset=".9077" stop-color="#ca1901"/><stop offset=".9201" stop-color="#943c02"/><stop offset=".9305" stop-color="#4d6c0c"/><stop offset=".9782" stop-color="#53680a"/><stop offset=".9969" stop-color="#655d07"/><stop offset=".999" stop-color="#1a8a2d"/></linearGradient><linearGradient id="g283" x2="0" y2="1"><stop offset=".001" stop-color="#0b942d"/><stop offset=".0031" stop-color="#0b9013"/><stop offset=".6919" stop-color="#377a0d"/><stop offset=".7293" stop-color="#814b02"/><stop offset=".7645" stop-color="#c31a01"/><stop offset=".806" stop-color="#d42c00"/><stop offset=".86" stop-color="#d74000"/><stop offset=".9077" stop-color="#c91901"/><stop offset=".9201" stop-color="#923e02"/><stop offset=".9305" stop-color="#4d6c0c"/><stop offset=".9782" stop-color="#53680a"/><stop offset=".9969" stop-color="#655d07"/><stop offset=".999" stop-color="#1a8a2d"/></linearGradient><linearGradient id="g284" x2="0" y2="1"><stop offset=".001" stop-color="#0b942d"/><stop offset=".0031" stop-color="#0b9013"/><stop offset=".6919" stop-color="#337c0e"/><stop offset=".7334" stop-color="#8a4502"/><stop offset=".7666" stop-color="#c51901"/><stop offset=".8371" stop-color="#d63b00"/><stop offset=".8703" stop-color="#d63800"/><stop offset=".9077" stop-color="#c91901"/><stop offset=".9201" stop-color="#903f03"/><stop offset=".9305" stop-color="#4d6c0c"/><stop offset=".9782" stop-color="#53680a"/><stop offset=".9969" stop-color="#655d07"/><stop offset=".999" stop-color="#1a8a2d"/></linearGradient><linearGradient id="g285" x2="0" y2="1"><stop offset=".001" stop-color="#0b942d"/><stop offset=".0031" stop-color="#0b9013"/><stop offset=".694" stop-color="#38790c"/><stop offset=".7313" stop-color="#844902"/><stop offset=".7666" stop-color="#c51901"/><stop offset=".8351" stop-color="#d63a00"/><stop offset=".8703" stop-color="#d63700"/><stop offset=".9077" stop-color="#c81901"/><stop offset=".9201" stop-color="#8d4103"/><stop offset=".9284" stop-color="#53680b"/><stop offset=".9782" stop-color="#53680a"/><stop offset=".9969" stop-color="#655d07"/><stop offset=".999" stop-color="#1a8a2d"/></linearGradient><linearGradient id="g286" x2="0" y2="1"><stop offset=".001" stop-color="#0b942d"/><stop offset=".0031" stop-color="#0b9013"/><stop offset=".694" stop-color="#38790c"/><stop offset=".7334" stop-color="#884602"/><stop offset=".7666" stop-color="#c41a01"/><stop offset=".8351" stop-color="#d63900"/><stop offset=".8703" stop-color="#d63700"/><stop offset=".9077" stop-color="#c81901"/><stop offset=".9201" stop-color="#8b4203"/><stop offset=".9284" stop-color="#506a0b"/><stop offset=".9782" stop-color="#53680a"/><stop offset=".9969" stop-color="#655d07"/><stop offset=".999" stop-color="#1a8a2d"/></linearGradient><linearGradient id="g287" x2="0" y2="1"><stop offset=".001" stop-color="#0b942d"/><stop offset=".0031" stop-color="#0b9013"/><stop offset=".694" stop-color="#377a0c"/><stop offset=".7334" stop-color="#874702"/><stop offset=".7666" stop-color="#c41a01"/><stop offset=".833" stop-color="#d63800"/><stop offset=".8703" stop-color="#d63600"/><stop offset=".9077" stop-color="#c81901"/><stop offset=".9201" stop-color="#894403"/><stop offset=".9284" stop-color="#4e6b0c"/><stop offset=".9782" stop-color="#53680a"/><stop offset=".9969" stop-color="#655d07"/><stop offset=".999" stop-color="#1a8a2d"/></linearGradient><linearGradient id="g288" x2="0" y2="1"><stop offset=".001" stop-color="#0b942d"/><stop offset=".0031" stop-color="#0b9013"/><stop offset=".694" stop-color="#377a0d"/><stop offset=".7334" stop-color="#864802"/><stop offset=".7666" stop-color="#c41a01"/><stop offset=".8309" stop-color="#d63600"/><stop offset=".8703" stop-color="#d53500"/><stop offset=".9056" stop-color="#c91901"/><stop offset=".916" stop-color="#a13302"/><stop offset=".9284" stop-color="#4d6c0c"/><stop offset=".9782" stop-color="#53680a"/><stop offset=".9969" stop-color="#655d07"/><stop offset=".999" stop-color="#1a8a2d"/></linearGradient><linearGradient id="g289" x2="0" y2="1"><stop offset=".001" stop-color="#0b942d"/><stop offset=".0031" stop-color="#0b9013"/><stop offset=".694" stop-color="#337c0e"/><stop offset=".7355" stop-color="#8a4502"/><stop offset=".7687" stop-color="#c51901"/><stop offset=".8454" stop-color="#d63900"/><stop offset=".8766" stop-color="#d42f00"/><stop offset=".9056" stop-color="#c91901"/><stop offset=".918" stop-color="#923d02"/><stop offset=".9284" stop-color="#4d6c0c"/><stop offset=".9782" stop-color="#53680a"/><stop offset=".9969" stop-color="#655d07"/><stop offset=".999" stop-color="#1a8a2d"/></linearGradient><linearGradient id="g290" x2="0" y2="1"><stop offset=".001" stop-color="#0b942d"/><stop offset=".0031" stop-color="#0b9013"/><stop offset=".6961" stop-color="#39790c"/><stop offset=".7334" stop-color="#844902"/><stop offset=".7666" stop-color="#c31a01"/><stop offset=".8164" stop-color="#d42d00"/><stop offset=".8662" stop-color="#d63600"/><stop offset=".9056" stop-color="#c91901"/><stop offset=".918" stop-color="#903f03"/><stop offset=".9284" stop-color="#4d6c0c"/><stop offset=".9782" stop-color="#53680a"/><stop offset=".9969" stop-color="#655d07"/><stop offset=".999" stop-color="#1a8a2d"/></linearGradient><linearGradient id="g291" x2="0" y2="1"><stop offset=".001" stop-color="#0b942d"/><stop offset=".0031" stop-color="#0b9013"/><stop offset=".6961" stop-color="#38790c"/><stop offset=".7355" stop-color="#884602"/><stop offset=".7687" stop-color="#c51901"/><stop offset=".8413" stop-color="#d63600"/><stop offset=".8745" stop-color="#d42f00"/><stop offset=".9056" stop-color="#c91901"/><stop offset=".918" stop-color="#8e4003"/><stop offset=".9263" stop-color="#53680a"/><stop offset=".9761" stop-color="#51690b"/><stop offset=".9969" stop-color="#655d07"/><stop offset=".999" stop-color="#1a8a2d"/></linearGradient><linearGradient id="g292" x2="0" y2="1"><stop offset=".001" stop-color="#0b942d"/><stop offset=".0031" stop-color="#0b9013"/><stop offset=".6961" stop-color="#377a0d"/><stop offset=".7355" stop-color="#874702"/><stop offset=".7687" stop-color="#c41a01"/><stop offset=".8392" stop-color="#d53500"/><stop offset=".8745" stop-color="#d42e00"/><stop offset=".9056" stop-color="#c81901"/><stop offset=".918" stop-color="#8c4203"/><stop offset=".9263" stop-color="#51690b"/><stop offset=".9782" stop-color="#53680a"/><stop offset=".9969" stop-color="#655d07"/><stop offset=".999" stop-color="#1a8a2d"/></linearGradient><linearGradient id="g293" x2="0" y2="1"><stop offset=".001" stop-color="#0b942d"/><stop offset=".0031" stop-color="#0b9013"/><stop offset=".6961" stop-color="#377a0d"/><stop offset=".7355" stop-color="#864802"/><stop offset=".7687" stop-color="#c41a01"/><stop offset=".8392" stop-color="#d53500"/><stop offset=".8745" stop-color="#d42e00"/><stop offset=".9056" stop-color="#c81901"/><stop offset=".918" stop-color="#8a4303"/><stop offset=".9263" stop-color="#4f6b0c"/><stop offset=".9782" stop-color="#53680a"/><stop offset=".9969" stop-color="#655d07"/><stop offset=".999" stop-color="#1a8a2d"/></linearGradient><linearGradient id="g294" x2="0" y2="1"><stop offset=".001" stop-color="#0b942d"/><stop offset=".0031" stop-color="#0b9013"/><stop offset=".6898" stop-color="#38790c"/><stop offset=".7272" stop-color="#844902"/><stop offset=".7583" stop-color="#be1d01"/><stop offset=".7936" stop-color="#d01f00"/><stop offset=".86" stop-color="#d63700"/><stop offset=".9035" stop-color="#ca1901"/><stop offset=".9139" stop-color="#a23302"/><stop offset=".9263" stop-color="#4d6c0c"/><stop offset=".9782" stop-color="#53680a"/><stop offset=".9969" stop-color="#655d07"/><stop offset=".999" stop-color="#1a8a2d"/></linearGradient><linearGradient id="g295" x2="0" y2="1"><stop offset=".001" stop-color="#0b942d"/><stop offset=".0031" stop-color="#0b9013"/><stop offset=".6815" stop-color="#377a0c"/><stop offset=".721" stop-color="#874702"/><stop offset=".7521" stop-color="#bf1c01"/><stop offset=".7936" stop-color="#d01f00"/><stop offset=".86" stop-color="#d63800"/><stop offset=".9035" stop-color="#c91901"/><stop offset=".916" stop-color="#933d02"/><stop offset=".9263" stop-color="#4d6c0c"/><stop offset=".9782" stop-color="#53680a"/><stop offset=".9969" stop-color="#655d07"/><stop offset=".999" stop-color="#1a8a2d"/></linearGradient><linearGradient id="g296" x2="0" y2="1"><stop offset=".001" stop-color="#0b942d"/><stop offset=".0031" stop-color="#0b9013"/><stop offset=".6732" stop-color="#327d0e"/><stop offset=".7147" stop-color="#8a4502"/><stop offset=".7459" stop-color="#c01b01"/><stop offset=".7936" stop-color="#d12000"/><stop offset=".8579" stop-color="#d63900"/><stop offset=".9035" stop-color="#c91901"/><stop offset=".916" stop-color="#913e03"/><stop offset=".9263" stop-color="#4d6c0c"/><stop offset=".9782" stop-color="#53680a"/><stop offset=".9969" stop-color="#655d07"/><stop offset=".999" stop-color="#1a8a2d"/></linearGradient><linearGradient id="g297" x2="0" y2="1"><stop offset=".001" stop-color="#0b942d"/><stop offset=".0031" stop-color="#0b9013"/><stop offset=".667" stop-color="#377a0c"/><stop offset=".7044" stop-color="#834a02"/><stop offset=".7355" stop-color="#bd1d01"/><stop offset=".7645" stop-color="#c81901"/><stop offset=".86" stop-color="#d63a00"/><stop offset=".9035" stop-color="#c91901"/><stop offset=".916" stop-color="#8f4003"/><stop offset=".9243" stop-color="#54670a"/><stop offset=".9409" stop-color="#4d6c0c"/><stop offset=".9782" stop-color="#53680a"/><stop offset=".9969" stop-color="#655d07"/><stop offset=".999" stop-color="#1a8a2d"/></linearGradient><linearGradient id="g298" x2="0" y2="1"><stop offset=".001" stop-color="#0b942d"/><stop offset=".0031" stop-color="#0b9013"/><stop offset=".6587" stop-color="#367b0c"/><stop offset=".6961" stop-color="#814b02"/><stop offset=".7272" stop-color="#bd1e01"/><stop offset=".7521" stop-color="#c81901"/><stop offset=".7977" stop-color="#d22400"/><stop offset=".86" stop-color="#d63b00"/><stop offset=".9035" stop-color="#c81901"/><stop offset=".916" stop-color="#8d4103"/><stop offset=".9243" stop-color="#52690b"/><stop offset=".9782" stop-color="#53680a"/><stop offset=".9969" stop-color="#655d07"/><stop offset=".999" stop-color="#1a8a2d"/></linearGradient><linearGradient id="g299" x2="0" y2="1"><stop offset=".001" stop-color="#0b942d"/><stop offset=".0031" stop-color="#0b9013"/><stop offset=".6421" stop-color="#357b0c"/><stop offset=".6795" stop-color="#814b02"/><stop offset=".7106" stop-color="#bd1d01"/><stop offset=".7355" stop-color="#c81801"/><stop offset=".7936" stop-color="#d12200"/><stop offset=".8579" stop-color="#d73d00"/><stop offset=".9035" stop-color="#c81901"/><stop offset=".916" stop-color="#8b4303"/><stop offset=".9243" stop-color="#506a0b"/><stop offset=".9782" stop-color="#53680a"/><stop offset=".9969" stop-color="#655d07"/><stop offset=".999" stop-color="#1a8a2d"/></linearGradient><linearGradient id="g300" x2="0" y2="1"><stop offset=".001" stop-color="#0b942d"/><stop offset=".0031" stop-color="#0b9013"/><stop offset=".6255" stop-color="#357b0c"/><stop offset=".6629" stop-color="#824b02"/><stop offset=".694" stop-color="#bd1d01"/><stop offset=".721" stop-color="#c81801"/><stop offset=".7873" stop-color="#d01e00"/><stop offset=".8537" stop-color="#d73d00"/><stop offset=".8869" stop-color="#d22400"/><stop offset=".9035" stop-color="#c81901"/><stop offset=".916" stop-color="#884403"/><stop offset=".9243" stop-color="#4d6c0c"/><stop offset=".9782" stop-color="#53680a"/><stop offset=".9969" stop-color="#655d07"/><stop offset=".999" stop-color="#1a8a2d"/></linearGradient><linearGradient id="g301" x2="0" y2="1"><stop offset=".001" stop-color="#0b942d"/><stop offset=".0031" stop-color="#0b9013"/><stop offset=".5612" stop-color="#377a0a"/><stop offset=".6234" stop-color="#4f6d06"/><stop offset=".6732" stop-color="#b82001"/><stop offset=".6981" stop-color="#c81801"/><stop offset=".7728" stop-color="#ce1b00"/><stop offset=".8454" stop-color="#d94a00"/><stop offset=".8703" stop-color="#d84200"/><stop offset=".9035" stop-color="#ca1901"/><stop offset=".916" stop-color="#933d02"/><stop offset=".9263" stop-color="#4d6c0c"/><stop offset=".9782" stop-color="#53680a"/><stop offset=".9969" stop-color="#655d07"/><stop offset=".999" stop-color="#1a8a2d"/></linearGradient><linearGradient id="g302" x2="0" y2="1"><stop offset=".001" stop-color="#0b942d"/><stop offset=".0031" stop-color="#0b9013"/><stop offset=".3039" stop-color="#24830a"/><stop offset=".611" stop-color="#824b02"/><stop offset=".638" stop-color="#8f4202"/><stop offset=".667" stop-color="#c11a01"/><stop offset=".7147" stop-color="#c81801"/><stop offset=".7687" stop-color="#d01e00"/><stop offset=".8371" stop-color="#dc5500"/><stop offset=".8662" stop-color="#db5400"/><stop offset=".9056" stop-color="#ca1901"/><stop offset=".918" stop-color="#913f03"/><stop offset=".9284" stop-color="#4d6c0c"/><stop offset=".9782" stop-color="#53680a"/><stop offset=".9969" stop-color="#655d07"/><stop offset=".999" stop-color="#1a8a2d"/></linearGradient><linearGradient id="g303" x2="0" y2="1"><stop offset=".001" stop-color="#0b942d"/><stop offset=".0031" stop-color="#0b9013"/><stop offset=".2147" stop-color="#1f850a"/><stop offset=".3081" stop-color="#467303"/><stop offset=".3662" stop-color="#695f02"/><stop offset=".6172" stop-color="#b42302"/><stop offset=".6546" stop-color="#c21901"/><stop offset=".7583" stop-color="#ce1b00"/><stop offset=".8288" stop-color="#de6100"/><stop offset=".8641" stop-color="#df6500"/><stop offset=".9077" stop-color="#c91901"/><stop offset=".9201" stop-color="#8e4003"/><stop offset=".9284" stop-color="#53680a"/><stop offset=".9782" stop-color="#53680a"/><stop offset=".9969" stop-color="#655d07"/><stop offset=".999" stop-color="#1a8a2d"/></linearGradient><linearGradient id="g304" x2="0" y2="1"><stop offset=".001" stop-color="#0b942d"/><stop offset=".0031" stop-color="#0b9013"/><stop offset=".2147" stop-color="#1f860a"/><stop offset=".2998" stop-color="#536c02"/><stop offset=".3517" stop-color="#7c5302"/><stop offset=".6027" stop-color="#b82002"/><stop offset=".6442" stop-color="#c51801"/><stop offset=".7521" stop-color="#cf1c00"/><stop offset=".8205" stop-color="#e06c00"/><stop offset=".862" stop-color="#e27700"/><stop offset=".8869" stop-color="#d94900"/><stop offset=".9077" stop-color="#cc1900"/><stop offset=".9201" stop-color="#983902"/><stop offset=".9305" stop-color="#506a0b"/><stop offset=".9782" stop-color="#53680a"/><stop offset=".9969" stop-color="#655d07"/><stop offset=".999" stop-color="#1a8a2d"/></linearGradient><linearGradient id="g305" x2="0" y2="1"><stop offset=".001" stop-color="#0b942d"/><stop offset=".0031" stop-color="#0b9013"/><stop offset=".2147" stop-color="#1f850a"/><stop offset=".3081" stop-color="#467303"/><stop offset=".3662" stop-color="#695f02"/><stop offset=".6193" stop-color="#b91f01"/><stop offset=".6442" stop-color="#c91701"/><stop offset=".7438" stop-color="#ce1a00"/><stop offset=".8143" stop-color="#e27700"/><stop offset=".86" stop-color="#e68900"/><stop offset=".8828" stop-color="#de6100"/><stop offset=".9098" stop-color="#cc1900"/><stop offset=".9201" stop-color="#a23202"/><stop offset=".9326" stop-color="#4d6c0c"/><stop offset=".9782" stop-color="#53680a"/><stop offset=".9969" stop-color="#655d07"/><stop offset=".999" stop-color="#1a8a2d"/></linearGradient><linearGradient id="g306" x2="0" y2="1"><stop offset=".001" stop-color="#0b942d"/><stop offset=".0031" stop-color="#0b9013"/><stop offset=".3122" stop-color="#26820a"/><stop offset=".6068" stop-color="#824b02"/><stop offset=".6359" stop-color="#bc1d01"/><stop offset=".6608" stop-color="#c91701"/><stop offset=".7459" stop-color="#ce1b00"/><stop offset=".8164" stop-color="#e27500"/><stop offset=".86" stop-color="#e58400"/><stop offset=".8828" stop-color="#dd5c00"/><stop offset=".9077" stop-color="#cc1a00"/><stop offset=".918" stop-color="#a53002"/><stop offset=".9305" stop-color="#51690b"/><stop offset=".9782" stop-color="#53680a"/><stop offset=".9969" stop-color="#655d07"/><stop offset=".999" stop-color="#1a8a2d"/></linearGradient><linearGradient id="g307" x2="0" y2="1"><stop offset=".001" stop-color="#0b942d"/><stop offset=".0031" stop-color="#0b9013"/><stop offset=".5778" stop-color="#3b7809"/><stop offset=".5944" stop-color="#467107"/><stop offset=".6276" stop-color="#924002"/><stop offset=".6566" stop-color="#c21901"/><stop offset=".75" stop-color="#cf1c00"/><stop offset=".8185" stop-color="#e17000"/><stop offset=".862" stop-color="#e37d00"/><stop offset=".8849" stop-color="#da5000"/><stop offset=".9056" stop-color="#cd1a00"/><stop offset=".916" stop-color="#a82e02"/><stop offset=".9305" stop-color="#4d6c0c"/><stop offset=".9782" stop-color="#53680a"/><stop offset=".9969" stop-color="#655d07"/><stop offset=".999" stop-color="#1a8a2d"/></linearGradient><linearGradient id="g308" x2="0" y2="1"><stop offset=".001" stop-color="#0b942d"/><stop offset=".0031" stop-color="#0b9013"/><stop offset=".6027" stop-color="#3b7809"/><stop offset=".638" stop-color="#874702"/><stop offset=".667" stop-color="#be1c01"/><stop offset=".694" stop-color="#c81801"/><stop offset=".7521" stop-color="#cf1c00"/><stop offset=".8226" stop-color="#e06c00"/><stop offset=".862" stop-color="#e27500"/><stop offset=".8869" stop-color="#d84300"/><stop offset=".9056" stop-color="#cb1901"/><stop offset=".918" stop-color="#933d02"/><stop offset=".9284" stop-color="#4d6c0c"/><stop offset=".9782" stop-color="#53680a"/><stop offset=".9969" stop-color="#655d07"/><stop offset=".999" stop-color="#1a8a2d"/></linearGradient><linearGradient id="g309" x2="0" y2="1"><stop offset=".001" stop-color="#0b942d"/><stop offset=".0031" stop-color="#0b9013"/><stop offset=".6172" stop-color="#3c770a"/><stop offset=".6525" stop-color="#874702"/><stop offset=".6836" stop-color="#c01b01"/><stop offset=".7147" stop-color="#c81801"/><stop offset=".7562" stop-color="#cf1d00"/><stop offset=".8247" stop-color="#de6400"/><stop offset=".8641" stop-color="#e06a00"/><stop offset=".9035" stop-color="#cb1900"/><stop offset=".916" stop-color="#963b02"/><stop offset=".9263" stop-color="#4d6c0c"/><stop offset=".9782" stop-color="#53680a"/><stop offset=".9969" stop-color="#655d07"/><stop offset=".999" stop-color="#1a8a2d"/></linearGradient><linearGradient id="g310" x2="0" y2="1"><stop offset=".001" stop-color="#0b942d"/><stop offset=".0031" stop-color="#0b9013"/><stop offset=".6629" stop-color="#3d770a"/><stop offset=".6981" stop-color="#864702"/><stop offset=".7293" stop-color="#bf1c01"/><stop offset=".7624" stop-color="#d01f00"/><stop offset=".8309" stop-color="#dd5f00"/><stop offset=".8641" stop-color="#de6100"/><stop offset=".9035" stop-color="#c91901"/><stop offset=".916" stop-color="#8c4203"/><stop offset=".9243" stop-color="#51690b"/><stop offset=".9782" stop-color="#53680a"/><stop offset=".9969" stop-color="#655d07"/><stop offset=".999" stop-color="#1a8a2d"/></linearGradient><linearGradient id="g311" x2="0" y2="1"><stop offset=".001" stop-color="#0b942d"/><stop offset=".0031" stop-color="#0b9013"/><stop offset=".6546" stop-color="#3e7609"/><stop offset=".6919" stop-color="#8e4202"/><stop offset=".723" stop-color="#c21a01"/><stop offset=".7666" stop-color="#d01f00"/><stop offset=".8351" stop-color="#dc5700"/><stop offset=".8662" stop-color="#db5500"/><stop offset=".9015" stop-color="#c91901"/><stop offset=".9139" stop-color="#8f3f03"/><stop offset=".9222" stop-color="#55670a"/><stop offset=".9346" stop-color="#4d6c0c"/><stop offset=".9782" stop-color="#53680a"/><stop offset=".9969" stop-color="#655d07"/><stop offset=".999" stop-color="#1a8a2d"/></linearGradient><linearGradient id="g312" x2="0" y2="1"><stop offset=".001" stop-color="#0b942d"/><stop offset=".0031" stop-color="#0b9013"/><stop offset=".6442" stop-color="#3c770a"/><stop offset=".6795" stop-color="#874702"/><stop offset=".7106" stop-color="#bf1c01"/><stop offset=".7417" stop-color="#c81801"/><stop offset=".777" stop-color="#d22400"/><stop offset=".8413" stop-color="#db5100"/><stop offset=".8662" stop-color="#da4d00"/><stop offset=".8994" stop-color="#ca1901"/><stop offset=".9118" stop-color="#933d02"/><stop offset=".9222" stop-color="#4d6c0c"/><stop offset=".9782" stop-color="#53680a"/><stop offset=".9969" stop-color="#655d07"/><stop offset=".999" stop-color="#1a8a2d"/></linearGradient><linearGradient id="g313" x2="0" y2="1"><stop offset=".001" stop-color="#0b942d"/><stop offset=".0031" stop-color="#0b9013"/><stop offset=".6359" stop-color="#3e7609"/><stop offset=".6712" stop-color="#894602"/><stop offset=".7023" stop-color="#c01b01"/><stop offset=".7459" stop-color="#c81901"/><stop offset=".7832" stop-color="#d22500"/><stop offset=".8475" stop-color="#d94a00"/><stop offset=".8703" stop-color="#d74000"/><stop offset=".8994" stop-color="#c81901"/><stop offset=".9118" stop-color="#884403"/><stop offset=".9201" stop-color="#4d6c0c"/><stop offset=".9782" stop-color="#53680a"/><stop offset=".9969" stop-color="#655d07"/><stop offset=".999" stop-color="#1a8a2d"/></linearGradient><linearGradient id="g314" x2="0" y2="1"><stop offset=".001" stop-color="#0b942d"/><stop offset=".0031" stop-color="#0b9013"/><stop offset=".6276" stop-color="#407509"/><stop offset=".6629" stop-color="#8c4402"/><stop offset=".6919" stop-color="#c01b01"/><stop offset=".723" stop-color="#c81801"/><stop offset=".7832" stop-color="#d12100"/><stop offset=".8517" stop-color="#d84300"/><stop offset=".8745" stop-color="#d53300"/><stop offset=".8973" stop-color="#c81901"/><stop offset=".9098" stop-color="#884403"/><stop offset=".918" stop-color="#4d6c0c"/><stop offset=".9782" stop-color="#53680a"/><stop offset=".9969" stop-color="#655d07"/><stop offset=".999" stop-color="#1a8a2d"/></linearGradient><linearGradient id="g315" x2="0" y2="1"><stop offset=".001" stop-color="#0b942d"/><stop offset=".0031" stop-color="#188805"/><stop offset=".4637" stop-color="#586803"/><stop offset=".6463" stop-color="#795102"/><stop offset=".6774" stop-color="#ba1f01"/><stop offset=".7023" stop-color="#c81801"/><stop offset=".7811" stop-color="#cf1c00"/><stop offset=".8558" stop-color="#d63b00"/><stop offset=".8952" stop-color="#c81901"/><stop offset=".9077" stop-color="#884403"/><stop offset=".916" stop-color="#4d6c0c"/><stop offset=".9782" stop-color="#53680a"/><stop offset=".9969" stop-color="#655d07"/><stop offset=".999" stop-color="#1a8a2d"/></linearGradient><linearGradient id="g316" x2="0" y2="1"><stop offset=".001" stop-color="#0b942d"/><stop offset=".0031" stop-color="#437400"/><stop offset=".4326" stop-color="#a33202"/><stop offset=".6753" stop-color="#c21a01"/><stop offset=".7624" stop-color="#c81901"/><stop offset=".862" stop-color="#d53100"/><stop offset=".8932" stop-color="#c81901"/><stop offset=".9056" stop-color="#884403"/><stop offset=".9139" stop-color="#4d6c0c"/><stop offset=".9782" stop-color="#53680a"/><stop offset=".9969" stop-color="#655d07"/><stop offset=".999" stop-color="#1a8a2d"/></linearGradient><linearGradient id="g317" x2="0" y2="1"><stop offset=".001" stop-color="#0b942d"/><stop offset=".0031" stop-color="#437400"/><stop offset=".4326" stop-color="#a33202"/><stop offset=".6981" stop-color="#c31901"/><stop offset=".8081" stop-color="#d02000"/><stop offset=".8662" stop-color="#d32700"/><stop offset=".8911" stop-color="#c81901"/><stop offset=".9035" stop-color="#884403"/><stop offset=".9118" stop-color="#4d6c0c"/><stop offset=".9782" stop-color="#53680a"/><stop offset=".9969" stop-color="#655d07"/><stop offset=".999" stop-color="#1a8a2d"/></linearGradient><linearGradient id="g318" x2="0" y2="1"><stop offset=".001" stop-color="#0b942d"/><stop offset=".0031" stop-color="#188805"/><stop offset=".4637" stop-color="#586803"/><stop offset=".6815" stop-color="#814b02"/><stop offset=".7127" stop-color="#bd1d01"/><stop offset=".7376" stop-color="#c81801"/><stop offset=".8703" stop-color="#d02000"/><stop offset=".889" stop-color="#c81901"/><stop offset=".9015" stop-color="#884403"/><stop offset=".9098" stop-color="#4d6c0c"/><stop offset=".9782" stop-color="#53680a"/><stop offset=".9969" stop-color="#655d07"/><stop offset=".999" stop-color="#1a8a2d"/></linearGradient><linearGradient id="g319" x2="0" y2="1"><stop offset=".001" stop-color="#0b942d"/><stop offset=".0031" stop-color="#0b9013"/><stop offset=".6712" stop-color="#407509"/><stop offset=".7064" stop-color="#8c4402"/><stop offset=".7376" stop-color="#c11b01"/><stop offset=".8309" stop-color="#d12100"/><stop offset=".8766" stop-color="#cf1c00"/><stop offset=".889" stop-color="#c81901"/><stop offset=".9015" stop-color="#8a4403"/><stop offset=".9098" stop-color="#4f6b0c"/><stop offset=".9782" stop-color="#53680a"/><stop offset=".9969" stop-color="#655d07"/><stop offset=".999" stop-color="#1a8a2d"/></linearGradient><linearGradient id="g320" x2="0" y2="1"><stop offset=".001" stop-color="#0b942d"/><stop offset=".0031" stop-color="#0b9013"/><stop offset=".6629" stop-color="#427409"/><stop offset=".6981" stop-color="#8f4102"/><stop offset=".7293" stop-color="#c21a01"/><stop offset=".8288" stop-color="#d12100"/><stop offset=".8745" stop-color="#d01e00"/><stop offset=".889" stop-color="#c81901"/><stop offset=".9015" stop-color="#8b4303"/><stop offset=".9098" stop-color="#506a0b"/><stop offset=".9782" stop-color="#53680a"/><stop offset=".9969" stop-color="#655d07"/><stop offset=".999" stop-color="#1a8a2d"/></linearGradient><linearGradient id="g321" x2="0" y2="1"><stop offset=".001" stop-color="#0b942d"/><stop offset=".0031" stop-color="#0b9013"/><stop offset=".6525" stop-color="#417509"/><stop offset=".6878" stop-color="#8d4302"/><stop offset=".7189" stop-color="#c21a01"/><stop offset=".8185" stop-color="#d12000"/><stop offset=".8703" stop-color="#d12100"/><stop offset=".889" stop-color="#c81901"/><stop offset=".9015" stop-color="#8c4203"/><stop offset=".9098" stop-color="#51690b"/><stop offset=".9782" stop-color="#53680a"/><stop offset=".9969" stop-color="#655d07"/><stop offset=".999" stop-color="#1a8a2d"/></linearGradient><linearGradient id="g322" x2="0" y2="1"><stop offset=".001" stop-color="#0b942d"/><stop offset=".0031" stop-color="#0b9013"/><stop offset=".6442" stop-color="#437308"/><stop offset=".6795" stop-color="#904102"/><stop offset=".7106" stop-color="#c31a01"/><stop offset=".8143" stop-color="#d12100"/><stop offset=".8683" stop-color="#d22400"/><stop offset=".889" stop-color="#c81901"/><stop offset=".9015" stop-color="#8d4103"/><stop offset=".9098" stop-color="#52690b"/><stop offset=".9782" stop-color="#53680a"/><stop offset=".9969" stop-color="#655d07"/><stop offset=".999" stop-color="#1a8a2d"/></linearGradient><linearGradient id="g323" x2="0" y2="1"><stop offset=".001" stop-color="#0b942d"/><stop offset=".0031" stop-color="#0b9013"/><stop offset=".3952" stop-color="#317d08"/><stop offset=".6525" stop-color="#655f04"/><stop offset=".6898" stop-color="#b62201"/><stop offset=".7147" stop-color="#c81801"/><stop offset=".8019" stop-color="#d01e00"/><stop offset=".8641" stop-color="#d32a00"/><stop offset=".889" stop-color="#c91901"/><stop offset=".9015" stop-color="#8e4003"/><stop offset=".9098" stop-color="#54680a"/><stop offset=".9741" stop-color="#4f6a0b"/><stop offset=".9969" stop-color="#655d07"/><stop offset=".999" stop-color="#1a8a2d"/></linearGradient><linearGradient id="g324" x2="0" y2="1"><stop offset=".001" stop-color="#0b942d"/><stop offset=".0031" stop-color="#0b9013"/><stop offset=".3185" stop-color="#298109"/><stop offset=".4305" stop-color="#5a6703"/><stop offset=".6587" stop-color="#8c4402"/><stop offset=".6878" stop-color="#c01b01"/><stop offset=".7189" stop-color="#c81801"/><stop offset=".8039" stop-color="#d02000"/><stop offset=".8641" stop-color="#d32b00"/><stop offset=".889" stop-color="#c91901"/><stop offset=".9015" stop-color="#8f3f03"/><stop offset=".9118" stop-color="#4d6c0c"/><stop offset=".9782" stop-color="#53680a"/><stop offset=".9969" stop-color="#655d07"/><stop offset=".999" stop-color="#1a8a2d"/></linearGradient><linearGradient id="g325" x2="0" y2="1"><stop offset=".001" stop-color="#0b942d"/><stop offset=".0031" stop-color="#0b9013"/><stop offset=".3952" stop-color="#317d08"/><stop offset=".6608" stop-color="#695d03"/><stop offset=".6961" stop-color="#b62201"/><stop offset=".721" stop-color="#c81801"/><stop offset=".8081" stop-color="#d12100"/><stop offset=".8641" stop-color="#d32b00"/><stop offset=".889" stop-color="#c91901"/><stop offset=".9015" stop-color="#913f03"/><stop offset=".9118" stop-color="#4d6c0c"/><stop offset=".9782" stop-color="#53680a"/><stop offset=".9969" stop-color="#655d07"/><stop offset=".999" stop-color="#1a8a2d"/></linearGradient><linearGradient id="g326" x2="0" y2="1"><stop offset=".001" stop-color="#0b942d"/><stop offset=".0031" stop-color="#0b9013"/><stop offset=".6566" stop-color="#427408"/><stop offset=".6919" stop-color="#8f4102"/><stop offset=".723" stop-color="#c31a01"/><stop offset=".8081" stop-color="#d12000"/><stop offset=".8662" stop-color="#d32800"/><stop offset=".889" stop-color="#c91901"/><stop offset=".9015" stop-color="#923e02"/><stop offset=".9118" stop-color="#4d6c0c"/><stop offset=".9782" stop-color="#53680a"/><stop offset=".9969" stop-color="#655d07"/><stop offset=".999" stop-color="#1a8a2d"/></linearGradient><linearGradient id="g327" x2="0" y2="1"><stop offset=".001" stop-color="#0b942d"/><stop offset=".0031" stop-color="#0b9013"/><stop offset=".6712" stop-color="#407509"/><stop offset=".7064" stop-color="#8c4402"/><stop offset=".7376" stop-color="#c11b01"/><stop offset=".8102" stop-color="#d12100"/><stop offset=".8662" stop-color="#d32800"/><stop offset=".889" stop-color="#c91901"/><stop offset=".9015" stop-color="#933d02"/><stop offset=".9118" stop-color="#4d6c0c"/><stop offset=".9782" stop-color="#53680a"/><stop offset=".9969" stop-color="#655d07"/><stop offset=".999" stop-color="#1a8a2d"/></linearGradient><linearGradient id="g328" x2="0" y2="1"><stop offset=".001" stop-color="#0b942d"/><stop offset=".0031" stop-color="#0b9013"/><stop offset=".667" stop-color="#417409"/><stop offset=".7044" stop-color="#913f02"/><stop offset=".7355" stop-color="#c31a01"/><stop offset=".8122" stop-color="#d12200"/><stop offset=".8662" stop-color="#d32800"/><stop offset=".889" stop-color="#c91901"/><stop offset=".8994" stop-color="#a03302"/><stop offset=".9118" stop-color="#4d6c0c"/><stop offset=".9782" stop-color="#53680a"/><stop offset=".9969" stop-color="#655d07"/><stop offset=".999" stop-color="#1a8a2d"/></linearGradient><linearGradient id="g329" x2="0" y2="1"><stop offset=".001" stop-color="#0b942d"/><stop offset=".0031" stop-color="#0b9013"/><stop offset=".6629" stop-color="#417409"/><stop offset=".7002" stop-color="#923f02"/><stop offset=".7313" stop-color="#c41a01"/><stop offset=".8102" stop-color="#d12100"/><stop offset=".8662" stop-color="#d32800"/><stop offset=".889" stop-color="#ca1901"/><stop offset=".8994" stop-color="#a13302"/><stop offset=".9118" stop-color="#4d6c0c"/><stop offset=".9782" stop-color="#53680a"/><stop offset=".9969" stop-color="#655d07"/><stop offset=".999" stop-color="#1a8a2d"/></linearGradient><linearGradient id="g330" x2="0" y2="1"><stop offset=".001" stop-color="#0b942d"/><stop offset=".0031" stop-color="#0b9013"/><stop offset=".6587" stop-color="#427409"/><stop offset=".694" stop-color="#8e4202"/><stop offset=".7251" stop-color="#c21a01"/><stop offset=".8081" stop-color="#d12000"/><stop offset=".8662" stop-color="#d32800"/><stop offset=".8911" stop-color="#c81901"/><stop offset=".9035" stop-color="#894403"/><stop offset=".9118" stop-color="#4e6b0c"/><stop offset=".9782" stop-color="#53680a"/><stop offset=".9969" stop-color="#655d07"/><stop offset=".999" stop-color="#1a8a2d"/></linearGradient><linearGradient id="g331" x2="0" y2="1"><stop offset=".001" stop-color="#0b942d"/><stop offset=".0031" stop-color="#0b9013"/><stop offset=".6546" stop-color="#427408"/><stop offset=".6898" stop-color="#8f4102"/><stop offset=".721" stop-color="#c31a01"/><stop offset=".8081" stop-color="#d12100"/><stop offset=".8662" stop-color="#d32800"/><stop offset=".8911" stop-color="#c81901"/><stop offset=".9035" stop-color="#8a4303"/><stop offset=".9118" stop-color="#4f6b0c"/><stop offset=".9782" stop-color="#53680a"/><stop offset=".9969" stop-color="#655d07"/><stop offset=".999" stop-color="#1a8a2d"/></linearGradient><linearGradient id="g332" x2="0" y2="1"><stop offset=".001" stop-color="#0b942d"/><stop offset=".0031" stop-color="#0b9013"/><stop offset=".6504" stop-color="#437308"/><stop offset=".6857" stop-color="#904002"/><stop offset=".7168" stop-color="#c31a01"/><stop offset=".806" stop-color="#d12000"/><stop offset=".8662" stop-color="#d32900"/><stop offset=".8911" stop-color="#c81901"/><stop offset=".9035" stop-color="#8b4203"/><stop offset=".9118" stop-color="#506a0b"/><stop offset=".9782" stop-color="#53680a"/><stop offset=".9969" stop-color="#655d07"/><stop offset=".999" stop-color="#1a8a2d"/></linearGradient><linearGradient id="g333" x2="0" y2="1"><stop offset=".001" stop-color="#0b942d"/><stop offset=".0031" stop-color="#0b9013"/><stop offset=".6442" stop-color="#407509"/><stop offset=".6795" stop-color="#8c4402"/><stop offset=".7106" stop-color="#c11a01"/><stop offset=".8039" stop-color="#d01f00"/><stop offset=".8662" stop-color="#d32900"/><stop offset=".8911" stop-color="#c81901"/><stop offset=".9035" stop-color="#8c4203"/><stop offset=".9118" stop-color="#52690b"/><stop offset=".9782" stop-color="#53680a"/><stop offset=".9969" stop-color="#655d07"/><stop offset=".999" stop-color="#1a8a2d"/></linearGradient><linearGradient id="g334" x2="0" y2="1"><stop offset=".001" stop-color="#0b942d"/><stop offset=".0031" stop-color="#0b9013"/><stop offset=".6525" stop-color="#407509"/><stop offset=".6878" stop-color="#8c4402"/><stop offset=".7189" stop-color="#c11b01"/><stop offset=".8039" stop-color="#d02000"/><stop offset=".8641" stop-color="#d32a00"/><stop offset=".8911" stop-color="#c81901"/><stop offset=".9035" stop-color="#8e4103"/><stop offset=".9118" stop-color="#53680b"/><stop offset=".9782" stop-color="#53680a"/><stop offset=".9969" stop-color="#655d07"/><stop offset=".999" stop-color="#1a8a2d"/></linearGradient><linearGradient id="g335" x2="0" y2="1"><stop offset=".001" stop-color="#0b942d"/><stop offset=".0031" stop-color="#0b9013"/><stop offset=".6608" stop-color="#407509"/><stop offset=".6961" stop-color="#8c4402"/><stop offset=".7272" stop-color="#c11b01"/><stop offset=".8039" stop-color="#d02000"/><stop offset=".8641" stop-color="#d32b00"/><stop offset=".8911" stop-color="#c91901"/><stop offset=".9035" stop-color="#8f4003"/><stop offset=".9118" stop-color="#54680a"/><stop offset=".9367" stop-color="#4d6c0c"/><stop offset=".9782" stop-color="#53680a"/><stop offset=".9969" stop-color="#655d07"/><stop offset=".999" stop-color="#1a8a2d"/></linearGradient><linearGradient id="g336" x2="0" y2="1"><stop offset=".001" stop-color="#0b942d"/><stop offset=".0031" stop-color="#0b9013"/><stop offset=".6691" stop-color="#407509"/><stop offset=".7044" stop-color="#8c4402"/><stop offset=".7355" stop-color="#c11b01"/><stop offset=".8039" stop-color="#d12000"/><stop offset=".8641" stop-color="#d32b00"/><stop offset=".8911" stop-color="#c91901"/><stop offset=".9035" stop-color="#903f03"/><stop offset=".9139" stop-color="#4d6c0c"/><stop offset=".9782" stop-color="#53680a"/><stop offset=".9969" stop-color="#655d07"/><stop offset=".999" stop-color="#1a8a2d"/></linearGradient><linearGradient id="g337" x2="0" y2="1"><stop offset=".001" stop-color="#0b942d"/><stop offset=".0031" stop-color="#0b9013"/><stop offset=".6795" stop-color="#447308"/><stop offset=".7147" stop-color="#904002"/><stop offset=".7459" stop-color="#c31a01"/><stop offset=".8081" stop-color="#d12200"/><stop offset=".8662" stop-color="#d32a00"/><stop offset=".8911" stop-color="#c91901"/><stop offset=".9035" stop-color="#913e03"/><stop offset=".9139" stop-color="#4d6c0c"/><stop offset=".9782" stop-color="#53680a"/><stop offset=".9969" stop-color="#655d07"/><stop offset=".999" stop-color="#1a8a2d"/></linearGradient><linearGradient id="g338" x2="0" y2="1"><stop offset=".001" stop-color="#0b942d"/><stop offset=".0031" stop-color="#0b9013"/><stop offset=".6795" stop-color="#437309"/><stop offset=".7147" stop-color="#8f4102"/><stop offset=".7459" stop-color="#c21a01"/><stop offset=".8081" stop-color="#d12200"/><stop offset=".8662" stop-color="#d32a00"/><stop offset=".8911" stop-color="#c91901"/><stop offset=".9035" stop-color="#923d02"/><stop offset=".9139" stop-color="#4d6c0c"/><stop offset=".9782" stop-color="#53680a"/><stop offset=".9969" stop-color="#655d07"/><stop offset=".999" stop-color="#1a8a2d"/></linearGradient><linearGradient id="g339" x2="0" y2="1"><stop offset=".001" stop-color="#0b942d"/><stop offset=".0031" stop-color="#0b9013"/><stop offset=".6795" stop-color="#437309"/><stop offset=".7168" stop-color="#933e02"/><stop offset=".7479" stop-color="#c41a01"/><stop offset=".8081" stop-color="#d22300"/><stop offset=".8662" stop-color="#d32b00"/><stop offset=".8911" stop-color="#c91901"/><stop offset=".9035" stop-color="#933d02"/><stop offset=".9139" stop-color="#4d6c0c"/><stop offset=".9782" stop-color="#53680a"/><stop offset=".9969" stop-color="#655d07"/><stop offset=".999" stop-color="#1a8a2d"/></linearGradient><linearGradient id="g340" x2="0" y2="1"><stop offset=".001" stop-color="#0b942d"/><stop offset=".0031" stop-color="#0b9013"/><stop offset=".6795" stop-color="#427409"/><stop offset=".7168" stop-color="#933e02"/><stop offset=".7479" stop-color="#c41a01"/><stop offset=".806" stop-color="#d22400"/><stop offset=".8641" stop-color="#d42f00"/><stop offset=".8911" stop-color="#ca1901"/><stop offset=".9035" stop-color="#943c02"/><stop offset=".9139" stop-color="#4d6c0c"/><stop offset=".9782" stop-color="#53680a"/><stop offset=".9969" stop-color="#655d07"/><stop offset=".999" stop-color="#1a8a2d"/></linearGradient><linearGradient id="g341" x2="0" y2="1"><stop offset=".001" stop-color="#0b942d"/><stop offset=".0031" stop-color="#0b9013"/><stop offset=".6795" stop-color="#417409"/><stop offset=".7168" stop-color="#923f02"/><stop offset=".7479" stop-color="#c31a01"/><stop offset=".8019" stop-color="#d12300"/><stop offset=".862" stop-color="#d53200"/><stop offset=".8911" stop-color="#ca1901"/><stop offset=".9015" stop-color="#a23202"/><stop offset=".9139" stop-color="#4d6c0c"/><stop offset=".9782" stop-color="#53680a"/><stop offset=".9969" stop-color="#655d07"/><stop offset=".999" stop-color="#1a8a2d"/></linearGradient><linearGradient id="g342" x2="0" y2="1"><stop offset=".001" stop-color="#0b942d"/><stop offset=".0031" stop-color="#0b9013"/><stop offset=".6795" stop-color="#417409"/><stop offset=".7168" stop-color="#914002"/><stop offset=".7479" stop-color="#c31a01"/><stop offset=".8019" stop-color="#d22300"/><stop offset=".862" stop-color="#d53200"/><stop offset=".8932" stop-color="#c81901"/><stop offset=".9056" stop-color="#894403"/><stop offset=".9139" stop-color="#4e6b0c"/><stop offset=".9782" stop-color="#53680a"/><stop offset=".9969" stop-color="#655d07"/><stop offset=".999" stop-color="#1a8a2d"/></linearGradient><linearGradient id="g343" x2="0" y2="1"><stop offset=".001" stop-color="#0b942d"/><stop offset=".0031" stop-color="#0b9013"/><stop offset=".6815" stop-color="#447309"/><stop offset=".7168" stop-color="#904002"/><stop offset=".7479" stop-color="#c31a01"/><stop offset=".8019" stop-color="#d12200"/><stop offset=".8641" stop-color="#d43000"/><stop offset=".8932" stop-color="#c81901"/><stop offset=".9056" stop-color="#8a4303"/><stop offset=".9139" stop-color="#4f6a0b"/><stop offset=".9782" stop-color="#53680a"/><stop offset=".9969" stop-color="#655d07"/><stop offset=".999" stop-color="#1a8a2d"/></linearGradient><linearGradient id="g344" x2="0" y2="1"><stop offset=".001" stop-color="#0b942d"/><stop offset=".0031" stop-color="#0b9013"/><stop offset=".6815" stop-color="#437309"/><stop offset=".7189" stop-color="#943d02"/><stop offset=".75" stop-color="#c41a01"/><stop offset=".8081" stop-color="#d22400"/><stop offset=".8641" stop-color="#d42e00"/><stop offset=".8932" stop-color="#c81901"/><stop offset=".9056" stop-color="#8c4203"/><stop offset=".9139" stop-color="#516a0b"/><stop offset=".9782" stop-color="#53680a"/><stop offset=".9969" stop-color="#655d07"/><stop offset=".999" stop-color="#1a8a2d"/></linearGradient><linearGradient id="g345" x2="0" y2="1"><stop offset=".001" stop-color="#0b942d"/><stop offset=".0031" stop-color="#0b9013"/><stop offset=".6815" stop-color="#427309"/><stop offset=".7189" stop-color="#933e02"/><stop offset=".75" stop-color="#c41a01"/><stop offset=".8081" stop-color="#d22400"/><stop offset=".8662" stop-color="#d42c00"/><stop offset=".8932" stop-color="#c81901"/><stop offset=".9056" stop-color="#8d4103"/><stop offset=".9139" stop-color="#52690b"/><stop offset=".9782" stop-color="#53680a"/><stop offset=".9969" stop-color="#655d07"/><stop offset=".999" stop-color="#1a8a2d"/></linearGradient><linearGradient id="g346" x2="0" y2="1"><stop offset=".001" stop-color="#0b942d"/><stop offset=".0031" stop-color="#0b9013"/><stop offset=".6815" stop-color="#427409"/><stop offset=".7189" stop-color="#923f02"/><stop offset=".75" stop-color="#c31a01"/><stop offset=".8081" stop-color="#d22400"/><stop offset=".8662" stop-color="#d42d00"/><stop offset=".8932" stop-color="#c91901"/><stop offset=".9056" stop-color="#8e4003"/><stop offset=".9139" stop-color="#53680a"/><stop offset=".9782" stop-color="#53680a"/><stop offset=".9969" stop-color="#655d07"/><stop offset=".999" stop-color="#1a8a2d"/></linearGradient><linearGradient id="g347" x2="0" y2="1"><stop offset=".001" stop-color="#0b942d"/><stop offset=".0031" stop-color="#0b9013"/><stop offset=".6815" stop-color="#417409"/><stop offset=".7189" stop-color="#913f02"/><stop offset=".75" stop-color="#c31a01"/><stop offset=".806" stop-color="#d22400"/><stop offset=".8641" stop-color="#d42e00"/><stop offset=".8932" stop-color="#c91901"/><stop offset=".9056" stop-color="#8f4003"/><stop offset=".9139" stop-color="#54670a"/><stop offset=".9284" stop-color="#4d6c0c"/><stop offset=".9782" stop-color="#53680a"/><stop offset=".9969" stop-color="#655d07"/><stop offset=".999" stop-color="#1a8a2d"/></linearGradient><linearGradient id="g348" x2="0" y2="1"><stop offset=".001" stop-color="#0b942d"/><stop offset=".0031" stop-color="#0b9013"/><stop offset=".6836" stop-color="#447309"/><stop offset=".7189" stop-color="#904002"/><stop offset=".75" stop-color="#c31a01"/><stop offset=".806" stop-color="#d22400"/><stop offset=".8641" stop-color="#d42f00"/><stop offset=".8932" stop-color="#c91901"/><stop offset=".9056" stop-color="#903f03"/><stop offset=".916" stop-color="#4d6c0c"/><stop offset=".9782" stop-color="#53680a"/><stop offset=".9969" stop-color="#655d07"/><stop offset=".999" stop-color="#1a8a2d"/></linearGradient><linearGradient id="g349" x2="0" y2="1"><stop offset=".001" stop-color="#0b942d"/><stop offset=".0031" stop-color="#0b9013"/><stop offset=".6795" stop-color="#447308"/><stop offset=".7147" stop-color="#904002"/><stop offset=".7459" stop-color="#c31a01"/><stop offset=".8039" stop-color="#d22300"/><stop offset=".8641" stop-color="#d42f00"/><stop offset=".8932" stop-color="#c91901"/><stop offset=".9056" stop-color="#913e03"/><stop offset=".916" stop-color="#4d6c0c"/><stop offset=".9782" stop-color="#53680a"/><stop offset=".9969" stop-color="#655d07"/><stop offset=".999" stop-color="#1a8a2d"/></linearGradient><linearGradient id="g350" x2="0" y2="1"><stop offset=".001" stop-color="#0b942d"/><stop offset=".0031" stop-color="#0b9013"/><stop offset=".6732" stop-color="#407509"/><stop offset=".7085" stop-color="#8b4402"/><stop offset=".7396" stop-color="#c11b01"/><stop offset=".7977" stop-color="#d12100"/><stop offset=".862" stop-color="#d43000"/><stop offset=".8932" stop-color="#c91901"/><stop offset=".9056" stop-color="#933d02"/><stop offset=".916" stop-color="#4d6c0c"/><stop offset=".9782" stop-color="#53680a"/><stop offset=".9969" stop-color="#655d07"/><stop offset=".999" stop-color="#1a8a2d"/></linearGradient><linearGradient id="g351" x2="0" y2="1"><stop offset=".001" stop-color="#0b942d"/><stop offset=".0031" stop-color="#0b9013"/><stop offset=".6691" stop-color="#407509"/><stop offset=".7044" stop-color="#8c4402"/><stop offset=".7355" stop-color="#c11b01"/><stop offset=".7977" stop-color="#d12100"/><stop offset=".862" stop-color="#d43100"/><stop offset=".8932" stop-color="#ca1901"/><stop offset=".9056" stop-color="#943c02"/><stop offset=".916" stop-color="#4d6c0c"/><stop offset=".9782" stop-color="#53680a"/><stop offset=".9969" stop-color="#655d07"/><stop offset=".999" stop-color="#1a8a2d"/></linearGradient><linearGradient id="g352" x2="0" y2="1"><stop offset=".001" stop-color="#0b942d"/><stop offset=".0031" stop-color="#0b9013"/><stop offset=".6649" stop-color="#407509"/><stop offset=".7002" stop-color="#8c4402"/><stop offset=".7313" stop-color="#c11b01"/><stop offset=".7956" stop-color="#d12000"/><stop offset=".862" stop-color="#d53100"/><stop offset=".8932" stop-color="#ca1901"/><stop offset=".9035" stop-color="#a13302"/><stop offset=".916" stop-color="#4d6c0c"/><stop offset=".9782" stop-color="#53680a"/><stop offset=".9969" stop-color="#655d07"/><stop offset=".999" stop-color="#1a8a2d"/></linearGradient><linearGradient id="g353" x2="0" y2="1"><stop offset=".001" stop-color="#0b942d"/><stop offset=".0031" stop-color="#0b9013"/><stop offset=".6608" stop-color="#407509"/><stop offset=".6961" stop-color="#8c4402"/><stop offset=".7272" stop-color="#c11b01"/><stop offset=".7956" stop-color="#d12000"/><stop offset=".862" stop-color="#d53100"/><stop offset=".8952" stop-color="#c81901"/><stop offset=".9077" stop-color="#884403"/><stop offset=".916" stop-color="#4d6c0c"/><stop offset=".9782" stop-color="#53680a"/><stop offset=".9969" stop-color="#655d07"/><stop offset=".999" stop-color="#1a8a2d"/></linearGradient><linearGradient id="g354" x2="0" y2="1"><stop offset=".001" stop-color="#0b942d"/><stop offset=".0031" stop-color="#0b9013"/><stop offset=".6566" stop-color="#407509"/><stop offset=".6919" stop-color="#8c4402"/><stop offset=".723" stop-color="#c11b01"/><stop offset=".7936" stop-color="#d02000"/><stop offset=".862" stop-color="#d53200"/><stop offset=".8952" stop-color="#c81901"/><stop offset=".9077" stop-color="#8a4303"/><stop offset=".916" stop-color="#4f6b0b"/><stop offset=".9782" stop-color="#53680a"/><stop offset=".9969" stop-color="#655d07"/><stop offset=".999" stop-color="#1a8a2d"/></linearGradient><linearGradient id="g355" x2="0" y2="1"><stop offset=".001" stop-color="#0b942d"/><stop offset=".0031" stop-color="#0b9013"/><stop offset=".6525" stop-color="#407509"/><stop offset=".6878" stop-color="#8c4402"/><stop offset=".7189" stop-color="#c11b01"/><stop offset=".7936" stop-color="#d12000"/><stop offset=".862" stop-color="#d53300"/><stop offset=".8952" stop-color="#c81901"/><stop offset=".9077" stop-color="#8c4203"/><stop offset=".916" stop-color="#51690b"/><stop offset=".9782" stop-color="#53680a"/><stop offset=".9969" stop-color="#655d07"/><stop offset=".999" stop-color="#1a8a2d"/></linearGradient><linearGradient id="g356" x2="0" y2="1"><stop offset=".001" stop-color="#0b942d"/><stop offset=".0031" stop-color="#0b9013"/><stop offset=".6546" stop-color="#427409"/><stop offset=".6898" stop-color="#8e4202"/><stop offset=".721" stop-color="#c21a01"/><stop offset=".7936" stop-color="#d12000"/><stop offset=".862" stop-color="#d53400"/><stop offset=".8952" stop-color="#c91901"/><stop offset=".9077" stop-color="#8e4103"/><stop offset=".916" stop-color="#53680b"/><stop offset=".9782" stop-color="#53680a"/><stop offset=".9969" stop-color="#655d07"/><stop offset=".999" stop-color="#1a8a2d"/></linearGradient><linearGradient id="g357" x2="0" y2="1"><stop offset=".001" stop-color="#0b942d"/><stop offset=".0031" stop-color="#0b9013"/><stop offset=".6546" stop-color="#407509"/><stop offset=".6898" stop-color="#8c4402"/><stop offset=".721" stop-color="#c11b01"/><stop offset=".7915" stop-color="#d02000"/><stop offset=".862" stop-color="#d53400"/><stop offset=".8952" stop-color="#c91901"/><stop offset=".9077" stop-color="#8f3f03"/><stop offset=".916" stop-color="#55670a"/><stop offset=".9284" stop-color="#4d6c0c"/><stop offset=".9782" stop-color="#53680a"/><stop offset=".9969" stop-color="#655d07"/><stop offset=".999" stop-color="#1a8a2d"/></linearGradient><linearGradient id="g358" x2="0" y2="1"><stop offset=".001" stop-color="#0b942d"/><stop offset=".0031" stop-color="#0b9013"/><stop offset=".6566" stop-color="#427409"/><stop offset=".6919" stop-color="#8e4202"/><stop offset=".723" stop-color="#c21a01"/><stop offset=".7915" stop-color="#d12000"/><stop offset=".862" stop-color="#d53500"/><stop offset=".8952" stop-color="#c91901"/><stop offset=".9077" stop-color="#913e03"/><stop offset=".918" stop-color="#4d6c0c"/><stop offset=".9782" stop-color="#53680a"/><stop offset=".9969" stop-color="#655d07"/><stop offset=".999" stop-color="#1a8a2d"/></linearGradient><linearGradient id="g359" x2="0" y2="1"><stop offset=".001" stop-color="#0b942d"/><stop offset=".0031" stop-color="#0b9013"/><stop offset=".6566" stop-color="#407509"/><stop offset=".6919" stop-color="#8c4402"/><stop offset=".723" stop-color="#c11b01"/><stop offset=".7915" stop-color="#d12000"/><stop offset=".862" stop-color="#d53600"/><stop offset=".8952" stop-color="#c91901"/><stop offset=".9077" stop-color="#933d02"/><stop offset=".918" stop-color="#4d6c0c"/><stop offset=".9782" stop-color="#53680a"/><stop offset=".9969" stop-color="#655d07"/><stop offset=".999" stop-color="#1a8a2d"/></linearGradient><linearGradient id="g360" x2="0" y2="1"><stop offset=".001" stop-color="#0b942d"/><stop offset=".0031" stop-color="#0b9013"/><stop offset=".6566" stop-color="#407509"/><stop offset=".6919" stop-color="#8c4402"/><stop offset=".723" stop-color="#c11b01"/><stop offset=".7894" stop-color="#d02000"/><stop offset=".86" stop-color="#d63700"/><stop offset=".8952" stop-color="#ca1901"/><stop offset=".9077" stop-color="#943c02"/><stop offset=".918" stop-color="#4d6c0c"/><stop offset=".9782" stop-color="#53680a"/><stop offset=".9969" stop-color="#655d07"/><stop offset=".999" stop-color="#1a8a2d"/></linearGradient><linearGradient id="g361" x2="0" y2="1"><stop offset=".001" stop-color="#0b942d"/><stop offset=".0031" stop-color="#0b9013"/><stop offset=".6566" stop-color="#407509"/><stop offset=".6919" stop-color="#8c4402"/><stop offset=".723" stop-color="#c11b01"/><stop offset=".7894" stop-color="#d12000"/><stop offset=".86" stop-color="#d63800"/><stop offset=".8973" stop-color="#c81901"/><stop offset=".9098" stop-color="#884403"/><stop offset=".918" stop-color="#4d6c0c"/><stop offset=".9782" stop-color="#53680a"/><stop offset=".9969" stop-color="#655d07"/><stop offset=".999" stop-color="#1a8a2d"/></linearGradient><linearGradient id="g362" x2="0" y2="1"><stop offset=".001" stop-color="#0b942d"/><stop offset=".0031" stop-color="#0b9013"/><stop offset=".6566" stop-color="#407509"/><stop offset=".6919" stop-color="#8c4402"/><stop offset=".723" stop-color="#c11b01"/><stop offset=".7894" stop-color="#d12000"/><stop offset=".86" stop-color="#d63900"/><stop offset=".8973" stop-color="#c81901"/><stop offset=".9098" stop-color="#8a4303"/><stop offset=".918" stop-color="#4f6b0b"/><stop offset=".9782" stop-color="#53680a"/><stop offset=".9969" stop-color="#655d07"/><stop offset=".999" stop-color="#1a8a2d"/></linearGradient><linearGradient id="g363" x2="0" y2="1"><stop offset=".001" stop-color="#0b942d"/><stop offset=".0031" stop-color="#0b9013"/><stop offset=".6566" stop-color="#407509"/><stop offset=".6919" stop-color="#8c4402"/><stop offset=".723" stop-color="#c11b01"/><stop offset=".7873" stop-color="#d02000"/><stop offset=".86" stop-color="#d63a00"/><stop offset=".8973" stop-color="#c81901"/><stop offset=".9098" stop-color="#8c4203"/><stop offset=".918" stop-color="#51690b"/><stop offset=".9782" stop-color="#53680a"/><stop offset=".9969" stop-color="#655d07"/><stop offset=".999" stop-color="#1a8a2d"/></linearGradient><linearGradient id="g364" x2="0" y2="1"><stop offset=".001" stop-color="#0b942d"/><stop offset=".0031" stop-color="#0b9013"/><stop offset=".6649" stop-color="#427409"/><stop offset=".7023" stop-color="#933e02"/><stop offset=".7334" stop-color="#c41901"/><stop offset=".7894" stop-color="#d12100"/><stop offset=".86" stop-color="#d63a00"/><stop offset=".8973" stop-color="#c91901"/><stop offset=".9098" stop-color="#8e4103"/><stop offset=".918" stop-color="#53680b"/><stop offset=".9782" stop-color="#53680a"/><stop offset=".9969" stop-color="#655d07"/><stop offset=".999" stop-color="#1a8a2d"/></linearGradient><linearGradient id="g365" x2="0" y2="1"><stop offset=".001" stop-color="#0b942d"/><stop offset=".0031" stop-color="#0b9013"/><stop offset=".6712" stop-color="#407509"/><stop offset=".7064" stop-color="#8c4402"/><stop offset=".7376" stop-color="#c11b01"/><stop offset=".7873" stop-color="#d12000"/><stop offset=".86" stop-color="#d63b00"/><stop offset=".8973" stop-color="#c91901"/><stop offset=".9098" stop-color="#8f3f03"/><stop offset=".918" stop-color="#55670a"/><stop offset=".9305" stop-color="#4d6c0c"/><stop offset=".9782" stop-color="#53680a"/><stop offset=".9969" stop-color="#655d07"/><stop offset=".999" stop-color="#1a8a2d"/></linearGradient><linearGradient id="g366" x2="0" y2="1"><stop offset=".001" stop-color="#0b942d"/><stop offset=".0031" stop-color="#0b9013"/><stop offset=".6795" stop-color="#427409"/><stop offset=".7168" stop-color="#933e02"/><stop offset=".7479" stop-color="#c41a01"/><stop offset=".7936" stop-color="#d22400"/><stop offset=".862" stop-color="#d73b00"/><stop offset=".8973" stop-color="#c91901"/><stop offset=".9098" stop-color="#913e03"/><stop offset=".9201" stop-color="#4d6c0c"/><stop offset=".9782" stop-color="#53680a"/><stop offset=".9969" stop-color="#655d07"/><stop offset=".999" stop-color="#1a8a2d"/></linearGradient><linearGradient id="g367" x2="0" y2="1"><stop offset=".001" stop-color="#0b942d"/><stop offset=".0031" stop-color="#0b9013"/><stop offset=".6878" stop-color="#447209"/><stop offset=".723" stop-color="#904002"/><stop offset=".7541" stop-color="#c31a01"/><stop offset=".7977" stop-color="#d22700"/><stop offset=".862" stop-color="#d73c00"/><stop offset=".8973" stop-color="#ca1901"/><stop offset=".9098" stop-color="#933d02"/><stop offset=".9201" stop-color="#4d6c0c"/><stop offset=".9782" stop-color="#53680a"/><stop offset=".9969" stop-color="#655d07"/><stop offset=".999" stop-color="#1a8a2d"/></linearGradient><linearGradient id="g368" x2="0" y2="1"><stop offset=".001" stop-color="#0b942d"/><stop offset=".0031" stop-color="#0b9013"/><stop offset=".6857" stop-color="#427409"/><stop offset=".723" stop-color="#923f02"/><stop offset=".7541" stop-color="#c31a01"/><stop offset=".7998" stop-color="#d32900"/><stop offset=".8641" stop-color="#d73c00"/><stop offset=".8973" stop-color="#ca1901"/><stop offset=".9098" stop-color="#943c02"/><stop offset=".9201" stop-color="#4d6c0c"/><stop offset=".9782" stop-color="#53680a"/><stop offset=".9969" stop-color="#655d07"/><stop offset=".999" stop-color="#1a8a2d"/></linearGradient><linearGradient id="g369" x2="0" y2="1"><stop offset=".001" stop-color="#0b942d"/><stop offset=".0031" stop-color="#0b9013"/><stop offset=".6857" stop-color="#437309"/><stop offset=".721" stop-color="#8f4102"/><stop offset=".7521" stop-color="#c21a01"/><stop offset=".7936" stop-color="#d22500"/><stop offset=".862" stop-color="#d73e00"/><stop offset=".8994" stop-color="#c81901"/><stop offset=".9118" stop-color="#884403"/><stop offset=".9201" stop-color="#4d6c0c"/><stop offset=".9782" stop-color="#53680a"/><stop offset=".9969" stop-color="#655d07"/><stop offset=".999" stop-color="#1a8a2d"/></linearGradient><linearGradient id="g370" x2="0" y2="1"><stop offset=".001" stop-color="#0b942d"/><stop offset=".0031" stop-color="#0b9013"/><stop offset=".6836" stop-color="#417409"/><stop offset=".721" stop-color="#913f02"/><stop offset=".7521" stop-color="#c31a01"/><stop offset=".7956" stop-color="#d22700"/><stop offset=".862" stop-color="#d73f00"/><stop offset=".8994" stop-color="#c81901"/><stop offset=".9118" stop-color="#8a4303"/><stop offset=".9201" stop-color="#4f6b0b"/><stop offset=".9782" stop-color="#53680a"/><stop offset=".9969" stop-color="#655d07"/><stop offset=".999" stop-color="#1a8a2d"/></linearGradient><linearGradient id="g371" x2="0" y2="1"><stop offset=".001" stop-color="#0b942d"/><stop offset=".0031" stop-color="#0b9013"/><stop offset=".6836" stop-color="#437309"/><stop offset=".721" stop-color="#933e02"/><stop offset=".7521" stop-color="#c41a01"/><stop offset=".7956" stop-color="#d32800"/><stop offset=".862" stop-color="#d74000"/><stop offset=".8994" stop-color="#c81901"/><stop offset=".9118" stop-color="#8c4203"/><stop offset=".9201" stop-color="#51690b"/><stop offset=".9782" stop-color="#53680a"/><stop offset=".9969" stop-color="#655d07"/><stop offset=".999" stop-color="#1a8a2d"/></linearGradient><linearGradient id="g372" x2="0" y2="1"><stop offset=".001" stop-color="#0b942d"/><stop offset=".0031" stop-color="#0b9013"/><stop offset=".6836" stop-color="#447309"/><stop offset=".7189" stop-color="#904002"/><stop offset=".75" stop-color="#c31a01"/><stop offset=".7915" stop-color="#d22600"/><stop offset=".86" stop-color="#d84100"/><stop offset=".8994" stop-color="#c91901"/><stop offset=".9118" stop-color="#8e4103"/><stop offset=".9201" stop-color="#53680b"/><stop offset=".9782" stop-color="#53680a"/><stop offset=".9969" stop-color="#655d07"/><stop offset=".999" stop-color="#1a8a2d"/></linearGradient><linearGradient id="g373" x2="0" y2="1"><stop offset=".001" stop-color="#0b942d"/><stop offset=".0031" stop-color="#0b9013"/><stop offset=".6504" stop-color="#407509"/><stop offset=".6857" stop-color="#8c4402"/><stop offset=".7168" stop-color="#c11b01"/><stop offset=".779" stop-color="#d01f00"/><stop offset=".8537" stop-color="#d84300"/><stop offset=".8766" stop-color="#d53600"/><stop offset=".8994" stop-color="#c91901"/><stop offset=".9118" stop-color="#8f3f03"/><stop offset=".9201" stop-color="#55670a"/><stop offset=".9326" stop-color="#4d6c0c"/><stop offset=".9782" stop-color="#53680a"/><stop offset=".9969" stop-color="#655d07"/><stop offset=".999" stop-color="#1a8a2d"/></linearGradient><linearGradient id="g374" x2="0" y2="1"><stop offset=".001" stop-color="#0b942d"/><stop offset=".0031" stop-color="#0b9013"/><stop offset=".1317" stop-color="#138c0f"/><stop offset=".1359" stop-color="#1d8608"/><stop offset=".3869" stop-color="#3c7805"/><stop offset=".6442" stop-color="#715703"/><stop offset=".6753" stop-color="#b52302"/><stop offset=".7023" stop-color="#c81801"/><stop offset=".7728" stop-color="#cf1d00"/><stop offset=".8496" stop-color="#d94700"/><stop offset=".8724" stop-color="#d73f00"/><stop offset=".8994" stop-color="#ca1901"/><stop offset=".9118" stop-color="#913e03"/><stop offset=".9222" stop-color="#4d6c0c"/><stop offset=".9782" stop-color="#53680a"/><stop offset=".9969" stop-color="#655d07"/><stop offset=".999" stop-color="#1a8a2d"/></linearGradient><linearGradient id="g375" x2="0" y2="1"><stop offset=".001" stop-color="#0b942d"/><stop offset=".0031" stop-color="#0b9013"/><stop offset=".1753" stop-color="#1e8609"/><stop offset=".2707" stop-color="#506e02"/><stop offset=".3164" stop-color="#6b5f01"/><stop offset=".611" stop-color="#ad2902"/><stop offset=".6463" stop-color="#b92001"/><stop offset=".6712" stop-color="#c91701"/><stop offset=".7687" stop-color="#ce1b00"/><stop offset=".8475" stop-color="#d94900"/><stop offset=".8724" stop-color="#d84100"/><stop offset=".8994" stop-color="#ca1901"/><stop offset=".9118" stop-color="#933d02"/><stop offset=".9222" stop-color="#4d6c0c"/><stop offset=".9782" stop-color="#53680a"/><stop offset=".9969" stop-color="#655d07"/><stop offset=".999" stop-color="#1a8a2d"/></linearGradient><linearGradient id="g376" x2="0" y2="1"><stop offset=".001" stop-color="#0b942d"/><stop offset=".0031" stop-color="#0b9013"/><stop offset=".1753" stop-color="#1e8609"/><stop offset=".2707" stop-color="#506e02"/><stop offset=".3164" stop-color="#6b5f01"/><stop offset=".611" stop-color="#ad2902"/><stop offset=".6815" stop-color="#bc1e01"/><stop offset=".7085" stop-color="#c81801"/><stop offset=".7728" stop-color="#cf1d00"/><stop offset=".8496" stop-color="#d94800"/><stop offset=".8724" stop-color="#d84100"/><stop offset=".8994" stop-color="#ca1901"/><stop offset=".9118" stop-color="#943c02"/><stop offset=".9222" stop-color="#4d6c0c"/><stop offset=".9782" stop-color="#53680a"/><stop offset=".9969" stop-color="#655d07"/><stop offset=".999" stop-color="#1a8a2d"/></linearGradient><linearGradient id="g377" x2="0" y2="1"><stop offset=".001" stop-color="#0b942d"/><stop offset=".0031" stop-color="#0b9013"/><stop offset=".1317" stop-color="#138c0f"/><stop offset=".1359" stop-color="#1d8608"/><stop offset=".3869" stop-color="#3c7805"/><stop offset=".6815" stop-color="#7a5102"/><stop offset=".7127" stop-color="#b92001"/><stop offset=".7376" stop-color="#c81801"/><stop offset=".7832" stop-color="#d12300"/><stop offset=".8537" stop-color="#d94600"/><stop offset=".8766" stop-color="#d63900"/><stop offset=".9015" stop-color="#c81901"/><stop offset=".9139" stop-color="#884403"/><stop offset=".9222" stop-color="#4d6c0c"/><stop offset=".9782" stop-color="#53680a"/><stop offset=".9969" stop-color="#655d07"/><stop offset=".999" stop-color="#1a8a2d"/></linearGradient><linearGradient id="g378" x2="0" y2="1"><stop offset=".001" stop-color="#0b942d"/><stop offset=".0031" stop-color="#0b9013"/><stop offset=".6878" stop-color="#447209"/><stop offset=".723" stop-color="#904002"/><stop offset=".7541" stop-color="#c41a01"/><stop offset=".7977" stop-color="#d42d00"/><stop offset=".862" stop-color="#d84600"/><stop offset=".9015" stop-color="#c81901"/><stop offset=".9139" stop-color="#8a4303"/><stop offset=".9222" stop-color="#4f6b0b"/><stop offset=".9782" stop-color="#53680a"/><stop offset=".9969" stop-color="#655d07"/><stop offset=".999" stop-color="#1a8a2d"/></linearGradient><linearGradient id="g379" x2="0" y2="1"><stop offset=".001" stop-color="#0b942d"/><stop offset=".0031" stop-color="#0b9013"/><stop offset=".6878" stop-color="#437309"/><stop offset=".7251" stop-color="#943d02"/><stop offset=".7562" stop-color="#c61901"/><stop offset=".8413" stop-color="#d84300"/><stop offset=".8724" stop-color="#d73f00"/><stop offset=".9015" stop-color="#c81901"/><stop offset=".9139" stop-color="#8c4203"/><stop offset=".9222" stop-color="#51690b"/><stop offset=".9782" stop-color="#53680a"/><stop offset=".9969" stop-color="#655d07"/><stop offset=".999" stop-color="#1a8a2d"/></linearGradient><linearGradient id="g380" x2="0" y2="1"><stop offset=".001" stop-color="#0b942d"/><stop offset=".0031" stop-color="#0b9013"/><stop offset=".6878" stop-color="#437309"/><stop offset=".7251" stop-color="#933e02"/><stop offset=".7562" stop-color="#c61901"/><stop offset=".8434" stop-color="#d84400"/><stop offset=".8724" stop-color="#d73f00"/><stop offset=".9015" stop-color="#c91901"/><stop offset=".9139" stop-color="#8e4103"/><stop offset=".9222" stop-color="#53680b"/><stop offset=".9782" stop-color="#53680a"/><stop offset=".9969" stop-color="#655d07"/><stop offset=".999" stop-color="#1a8a2d"/></linearGradient><linearGradient id="g381" x2="0" y2="1"><stop offset=".001" stop-color="#0b942d"/><stop offset=".0031" stop-color="#0b9013"/><stop offset=".6878" stop-color="#427409"/><stop offset=".7251" stop-color="#923f02"/><stop offset=".7562" stop-color="#c61901"/><stop offset=".8475" stop-color="#d84600"/><stop offset=".8724" stop-color="#d74000"/><stop offset=".9015" stop-color="#c91901"/><stop offset=".9139" stop-color="#8f3f03"/><stop offset=".9222" stop-color="#55670a"/><stop offset=".9346" stop-color="#4d6c0c"/><stop offset=".9782" stop-color="#53680a"/><stop offset=".9969" stop-color="#655d07"/><stop offset=".999" stop-color="#1a8a2d"/></linearGradient><linearGradient id="g382" x2="0" y2="1"><stop offset=".001" stop-color="#0b942d"/><stop offset=".0031" stop-color="#0b9013"/><stop offset=".6878" stop-color="#417409"/><stop offset=".7251" stop-color="#913f02"/><stop offset=".7541" stop-color="#c41a01"/><stop offset=".8019" stop-color="#d53100"/><stop offset=".8641" stop-color="#d94800"/><stop offset=".9015" stop-color="#ca1901"/><stop offset=".9139" stop-color="#913e03"/><stop offset=".9243" stop-color="#4d6c0c"/><stop offset=".9782" stop-color="#53680a"/><stop offset=".9969" stop-color="#655d07"/><stop offset=".999" stop-color="#1a8a2d"/></linearGradient><linearGradient id="g383" x2="0" y2="1"><stop offset=".001" stop-color="#0b942d"/><stop offset=".0031" stop-color="#0b9013"/><stop offset=".6898" stop-color="#447209"/><stop offset=".7251" stop-color="#904002"/><stop offset=".7541" stop-color="#c51901"/><stop offset=".8019" stop-color="#d53100"/><stop offset=".8641" stop-color="#d94900"/><stop offset=".9015" stop-color="#ca1901"/><stop offset=".9139" stop-color="#933d02"/><stop offset=".9243" stop-color="#4d6c0c"/><stop offset=".9782" stop-color="#53680a"/><stop offset=".9969" stop-color="#655d07"/><stop offset=".999" stop-color="#1a8a2d"/></linearGradient><linearGradient id="g384" x2="0" y2="1"><stop offset=".001" stop-color="#0b942d"/><stop offset=".0031" stop-color="#0b9013"/><stop offset=".6898" stop-color="#437309"/><stop offset=".7272" stop-color="#943d02"/><stop offset=".7541" stop-color="#c51901"/><stop offset=".8039" stop-color="#d53300"/><stop offset=".8641" stop-color="#d94900"/><stop offset=".9015" stop-color="#ca1901"/><stop offset=".9139" stop-color="#943c02"/><stop offset=".9243" stop-color="#4d6c0c"/><stop offset=".9782" stop-color="#53680a"/><stop offset=".9969" stop-color="#655d07"/><stop offset=".999" stop-color="#1a8a2d"/></linearGradient><linearGradient id="g385" x2="0" y2="1"><stop offset=".001" stop-color="#0b942d"/><stop offset=".0031" stop-color="#0b9013"/><stop offset=".6898" stop-color="#437309"/><stop offset=".7272" stop-color="#933e02"/><stop offset=".7521" stop-color="#c31a01"/><stop offset=".7915" stop-color="#d32b00"/><stop offset=".8579" stop-color="#d94a00"/><stop offset=".8786" stop-color="#d73b00"/><stop offset=".9035" stop-color="#c81901"/><stop offset=".916" stop-color="#884403"/><stop offset=".9243" stop-color="#4d6c0c"/><stop offset=".9782" stop-color="#53680a"/><stop offset=".9969" stop-color="#655d07"/><stop offset=".999" stop-color="#1a8a2d"/></linearGradient><linearGradient id="g386" x2="0" y2="1"><stop offset=".001" stop-color="#0b942d"/><stop offset=".0031" stop-color="#0b9013"/><stop offset=".6898" stop-color="#427409"/><stop offset=".7272" stop-color="#923f02"/><stop offset=".7521" stop-color="#c41a01"/><stop offset=".7915" stop-color="#d32c00"/><stop offset=".8558" stop-color="#da4b00"/><stop offset=".8766" stop-color="#d74000"/><stop offset=".9035" stop-color="#c81901"/><stop offset=".916" stop-color="#8a4303"/><stop offset=".9243" stop-color="#4f6a0b"/><stop offset=".9782" stop-color="#53680a"/><stop offset=".9969" stop-color="#655d07"/><stop offset=".999" stop-color="#1a8a2d"/></linearGradient><linearGradient id="g387" x2="0" y2="1"><stop offset=".001" stop-color="#0b942d"/><stop offset=".0031" stop-color="#0b9013"/><stop offset=".6857" stop-color="#3e760a"/><stop offset=".7189" stop-color="#7d4e02"/><stop offset=".75" stop-color="#c21b01"/><stop offset=".7832" stop-color="#d22600"/><stop offset=".8517" stop-color="#da4c00"/><stop offset=".8745" stop-color="#d84400"/><stop offset=".9035" stop-color="#c91901"/><stop offset=".916" stop-color="#8c4203"/><stop offset=".9243" stop-color="#52690b"/><stop offset=".9782" stop-color="#53680a"/><stop offset=".9969" stop-color="#655d07"/><stop offset=".999" stop-color="#1a8a2d"/></linearGradient><linearGradient id="g388" x2="0" y2="1"><stop offset=".001" stop-color="#0b942d"/><stop offset=".0031" stop-color="#0b9013"/><stop offset=".6857" stop-color="#3e760a"/><stop offset=".7189" stop-color="#7c4f03"/><stop offset=".7479" stop-color="#c01c01"/><stop offset=".779" stop-color="#d22300"/><stop offset=".8496" stop-color="#da4d00"/><stop offset=".8745" stop-color="#d84600"/><stop offset=".9035" stop-color="#c91901"/><stop offset=".916" stop-color="#8e4003"/><stop offset=".9243" stop-color="#54680a"/><stop offset=".9741" stop-color="#4f6a0b"/><stop offset=".9969" stop-color="#655d07"/><stop offset=".999" stop-color="#1a8a2d"/></linearGradient><linearGradient id="g389" x2="0" y2="1"><stop offset=".001" stop-color="#0b942d"/><stop offset=".0031" stop-color="#0b9013"/><stop offset=".6857" stop-color="#3e760a"/><stop offset=".7168" stop-color="#755403"/><stop offset=".7479" stop-color="#c01c01"/><stop offset=".779" stop-color="#d22400"/><stop offset=".8475" stop-color="#da4e00"/><stop offset=".8724" stop-color="#d94a00"/><stop offset=".9035" stop-color="#ca1901"/><stop offset=".916" stop-color="#903f03"/><stop offset=".9263" stop-color="#4d6c0c"/><stop offset=".9782" stop-color="#53680a"/><stop offset=".9969" stop-color="#655d07"/><stop offset=".999" stop-color="#1a8a2d"/></linearGradient><linearGradient id="g390" x2="0" y2="1"><stop offset=".001" stop-color="#0b942d"/><stop offset=".0031" stop-color="#0b9013"/><stop offset=".6857" stop-color="#3e760a"/><stop offset=".7147" stop-color="#6f5803"/><stop offset=".7459" stop-color="#be1d01"/><stop offset=".7728" stop-color="#d02000"/><stop offset=".8454" stop-color="#da4f00"/><stop offset=".8724" stop-color="#da4b00"/><stop offset=".9035" stop-color="#ca1901"/><stop offset=".916" stop-color="#923d02"/><stop offset=".9263" stop-color="#4d6c0c"/><stop offset=".9782" stop-color="#53680a"/><stop offset=".9969" stop-color="#655d07"/><stop offset=".999" stop-color="#1a8a2d"/></linearGradient><linearGradient id="g391" x2="0" y2="1"><stop offset=".001" stop-color="#0b942d"/><stop offset=".0031" stop-color="#0b9013"/><stop offset=".6857" stop-color="#3e760a"/><stop offset=".7085" stop-color="#616104"/><stop offset=".7459" stop-color="#be1d01"/><stop offset=".7728" stop-color="#d12000"/><stop offset=".8454" stop-color="#db5100"/><stop offset=".8724" stop-color="#da4d00"/><stop offset=".9035" stop-color="#cb1901"/><stop offset=".916" stop-color="#943c02"/><stop offset=".9263" stop-color="#4d6c0c"/><stop offset=".9782" stop-color="#53680a"/><stop offset=".9969" stop-color="#655d07"/><stop offset=".999" stop-color="#1a8a2d"/></linearGradient><linearGradient id="g392" x2="0" y2="1"><stop offset=".001" stop-color="#0b942d"/><stop offset=".0031" stop-color="#0b9013"/><stop offset=".6857" stop-color="#3e760a"/><stop offset=".7064" stop-color="#5c6405"/><stop offset=".7313" stop-color="#9d3602"/><stop offset=".75" stop-color="#c41a01"/><stop offset=".7853" stop-color="#d32c00"/><stop offset=".8496" stop-color="#db5300"/><stop offset=".8724" stop-color="#da4e00"/><stop offset=".9056" stop-color="#c81901"/><stop offset=".918" stop-color="#884403"/><stop offset=".9263" stop-color="#4d6c0c"/><stop offset=".9782" stop-color="#53680a"/><stop offset=".9969" stop-color="#655d07"/><stop offset=".999" stop-color="#1a8a2d"/></linearGradient><linearGradient id="g393" x2="0" y2="1"><stop offset=".001" stop-color="#0b942d"/><stop offset=".0031" stop-color="#0b9013"/><stop offset=".6857" stop-color="#3e760a"/><stop offset=".7044" stop-color="#576705"/><stop offset=".7272" stop-color="#8e4102"/><stop offset=".7459" stop-color="#bf1c01"/><stop offset=".7728" stop-color="#d12200"/><stop offset=".8434" stop-color="#db5300"/><stop offset=".8724" stop-color="#da5000"/><stop offset=".9056" stop-color="#c81901"/><stop offset=".918" stop-color="#8a4303"/><stop offset=".9263" stop-color="#4f6a0b"/><stop offset=".9782" stop-color="#53680a"/><stop offset=".9969" stop-color="#655d07"/><stop offset=".999" stop-color="#1a8a2d"/></linearGradient><linearGradient id="g394" x2="0" y2="1"><stop offset=".001" stop-color="#0b942d"/><stop offset=".0031" stop-color="#0b9013"/><stop offset=".6898" stop-color="#437309"/><stop offset=".7272" stop-color="#933e02"/><stop offset=".7479" stop-color="#c21a01"/><stop offset=".779" stop-color="#d32800"/><stop offset=".8434" stop-color="#db5500"/><stop offset=".8724" stop-color="#db5100"/><stop offset=".9056" stop-color="#c91901"/><stop offset=".918" stop-color="#8c4203"/><stop offset=".9263" stop-color="#52690b"/><stop offset=".9782" stop-color="#53680a"/><stop offset=".9969" stop-color="#655d07"/><stop offset=".999" stop-color="#1a8a2d"/></linearGradient><linearGradient id="g395" x2="0" y2="1"><stop offset=".001" stop-color="#0b942d"/><stop offset=".0031" stop-color="#0b9013"/><stop offset=".6857" stop-color="#427409"/><stop offset=".723" stop-color="#923f02"/><stop offset=".75" stop-color="#c51901"/><stop offset=".7873" stop-color="#d43000"/><stop offset=".8475" stop-color="#dc5800"/><stop offset=".8724" stop-color="#db5300"/><stop offset=".9056" stop-color="#c91901"/><stop offset=".918" stop-color="#8e4003"/><stop offset=".9263" stop-color="#54680a"/><stop offset=".9741" stop-color="#4f6a0b"/><stop offset=".9969" stop-color="#655d07"/><stop offset=".999" stop-color="#1a8a2d"/></linearGradient><linearGradient id="g396" x2="0" y2="1"><stop offset=".001" stop-color="#0b942d"/><stop offset=".0031" stop-color="#0b9013"/><stop offset=".6836" stop-color="#447309"/><stop offset=".7189" stop-color="#904002"/><stop offset=".75" stop-color="#c61901"/><stop offset=".7873" stop-color="#d53200"/><stop offset=".8475" stop-color="#dc5a00"/><stop offset=".8724" stop-color="#dc5500"/><stop offset=".9056" stop-color="#ca1901"/><stop offset=".918" stop-color="#903f03"/><stop offset=".9284" stop-color="#4d6c0c"/><stop offset=".9782" stop-color="#53680a"/><stop offset=".9969" stop-color="#655d07"/><stop offset=".999" stop-color="#1a8a2d"/></linearGradient><linearGradient id="g397" x2="0" y2="1"><stop offset=".001" stop-color="#0b942d"/><stop offset=".0031" stop-color="#0b9013"/><stop offset=".6795" stop-color="#437309"/><stop offset=".7168" stop-color="#943d02"/><stop offset=".7479" stop-color="#c41a01"/><stop offset=".779" stop-color="#d32b00"/><stop offset=".8413" stop-color="#dd5c00"/><stop offset=".8703" stop-color="#dd5b00"/><stop offset=".9056" stop-color="#ca1901"/><stop offset=".918" stop-color="#923d02"/><stop offset=".9284" stop-color="#4d6c0c"/><stop offset=".9782" stop-color="#53680a"/><stop offset=".9969" stop-color="#655d07"/><stop offset=".999" stop-color="#1a8a2d"/></linearGradient><linearGradient id="g398" x2="0" y2="1"><stop offset=".001" stop-color="#0b942d"/><stop offset=".0031" stop-color="#0b9013"/><stop offset=".6753" stop-color="#427409"/><stop offset=".7127" stop-color="#923f02"/><stop offset=".7438" stop-color="#c31a01"/><stop offset=".7728" stop-color="#d22700"/><stop offset=".8371" stop-color="#dd5e00"/><stop offset=".8703" stop-color="#dd5f00"/><stop offset=".9056" stop-color="#cb1900"/><stop offset=".918" stop-color="#943c02"/><stop offset=".9284" stop-color="#4d6c0c"/><stop offset=".9782" stop-color="#53680a"/><stop offset=".9969" stop-color="#655d07"/><stop offset=".999" stop-color="#1a8a2d"/></linearGradient><linearGradient id="g399" x2="0" y2="1"><stop offset=".001" stop-color="#0b942d"/><stop offset=".0031" stop-color="#0b9013"/><stop offset=".6608" stop-color="#487007"/><stop offset=".6815" stop-color="#536a06"/><stop offset=".7293" stop-color="#b72101"/><stop offset=".7583" stop-color="#ce1b00"/><stop offset=".8351" stop-color="#de6000"/><stop offset=".8703" stop-color="#de6200"/><stop offset=".9056" stop-color="#cb1900"/><stop offset=".918" stop-color="#963b02"/><stop offset=".9284" stop-color="#4d6c0c"/><stop offset=".9782" stop-color="#53680a"/><stop offset=".9969" stop-color="#655d07"/><stop offset=".999" stop-color="#1a8a2d"/></linearGradient><linearGradient id="g400" x2="0" y2="1"><stop offset=".001" stop-color="#0b942d"/><stop offset=".0031" stop-color="#0b9013"/><stop offset=".1774" stop-color="#1e8609"/><stop offset=".389" stop-color="#5d6602"/><stop offset=".6898" stop-color="#a23202"/><stop offset=".7189" stop-color="#c81801"/><stop offset=".7645" stop-color="#d12100"/><stop offset=".833" stop-color="#de6200"/><stop offset=".8703" stop-color="#df6500"/><stop offset=".9056" stop-color="#cc1900"/><stop offset=".918" stop-color="#983902"/><stop offset=".9284" stop-color="#4f6a0b"/><stop offset=".9782" stop-color="#53680a"/><stop offset=".9969" stop-color="#655d07"/><stop offset=".999" stop-color="#1a8a2d"/></linearGradient><linearGradient id="g401" x2="0" y2="1"><stop offset=".001" stop-color="#0b942d"/><stop offset=".0031" stop-color="#0b9013"/><stop offset=".1753" stop-color="#1e8609"/><stop offset=".2707" stop-color="#546c01"/><stop offset=".3143" stop-color="#6f5c01"/><stop offset=".6421" stop-color="#b12602"/><stop offset=".6795" stop-color="#bc1e01"/><stop offset=".7064" stop-color="#c81801"/><stop offset=".7604" stop-color="#cf1d00"/><stop offset=".833" stop-color="#de6200"/><stop offset=".8703" stop-color="#df6500"/><stop offset=".9077" stop-color="#c91901"/><stop offset=".9201" stop-color="#8c4203"/><stop offset=".9284" stop-color="#52690b"/><stop offset=".9782" stop-color="#53680a"/><stop offset=".9969" stop-color="#655d07"/><stop offset=".999" stop-color="#1a8a2d"/></linearGradient><linearGradient id="g402" x2="0" y2="1"><stop offset=".001" stop-color="#0b942d"/><stop offset=".0031" stop-color="#0b9013"/><stop offset=".1774" stop-color="#1e8609"/><stop offset=".389" stop-color="#5d6602"/><stop offset=".6317" stop-color="#963c02"/><stop offset=".6608" stop-color="#c41801"/><stop offset=".7583" stop-color="#ce1b00"/><stop offset=".833" stop-color="#de6200"/><stop offset=".8703" stop-color="#df6500"/><stop offset=".9077" stop-color="#c91901"/><stop offset=".9201" stop-color="#8e4003"/><stop offset=".9284" stop-color="#54680a"/><stop offset=".9741" stop-color="#4f6a0b"/><stop offset=".9969" stop-color="#655d07"/><stop offset=".999" stop-color="#1a8a2d"/></linearGradient><linearGradient id="g403" x2="0" y2="1"><stop offset=".001" stop-color="#0b942d"/><stop offset=".0031" stop-color="#0b9013"/><stop offset=".6234" stop-color="#447307"/><stop offset=".6587" stop-color="#933e02"/><stop offset=".6878" stop-color="#c21a01"/><stop offset=".7624" stop-color="#d01f00"/><stop offset=".833" stop-color="#de6100"/><stop offset=".8703" stop-color="#de6400"/><stop offset=".9077" stop-color="#ca1901"/><stop offset=".9201" stop-color="#903f03"/><stop offset=".9305" stop-color="#4d6c0c"/><stop offset=".9782" stop-color="#53680a"/><stop offset=".9969" stop-color="#655d07"/><stop offset=".999" stop-color="#1a8a2d"/></linearGradient><linearGradient id="g404" x2="0" y2="1"><stop offset=".001" stop-color="#0b942d"/><stop offset=".0031" stop-color="#0b9013"/><stop offset=".6504" stop-color="#427408"/><stop offset=".6857" stop-color="#8f4102"/><stop offset=".7168" stop-color="#c31a01"/><stop offset=".7624" stop-color="#d01f00"/><stop offset=".833" stop-color="#de6100"/><stop offset=".8703" stop-color="#de6400"/><stop offset=".9077" stop-color="#ca1901"/><stop offset=".9201" stop-color="#923d02"/><stop offset=".9305" stop-color="#4d6c0c"/><stop offset=".9782" stop-color="#53680a"/><stop offset=".9969" stop-color="#655d07"/><stop offset=".999" stop-color="#1a8a2d"/></linearGradient><linearGradient id="g405" x2="0" y2="1"><stop offset=".001" stop-color="#0b942d"/><stop offset=".0031" stop-color="#0b9013"/><stop offset=".6795" stop-color="#447308"/><stop offset=".7147" stop-color="#904002"/><stop offset=".7459" stop-color="#c41a01"/><stop offset=".7749" stop-color="#d42c00"/><stop offset=".8351" stop-color="#de6300"/><stop offset=".8703" stop-color="#df6500"/><stop offset=".9077" stop-color="#cb1900"/><stop offset=".9201" stop-color="#943c02"/><stop offset=".9305" stop-color="#4d6c0c"/><stop offset=".9782" stop-color="#53680a"/><stop offset=".9969" stop-color="#655d07"/><stop offset=".999" stop-color="#1a8a2d"/></linearGradient><linearGradient id="g406" x2="0" y2="1"><stop offset=".001" stop-color="#0b942d"/><stop offset=".0031" stop-color="#0b9013"/><stop offset=".6732" stop-color="#407509"/><stop offset=".7085" stop-color="#8b4402"/><stop offset=".7396" stop-color="#c11b01"/><stop offset=".7645" stop-color="#d12100"/><stop offset=".833" stop-color="#de6300"/><stop offset=".8703" stop-color="#df6600"/><stop offset=".9077" stop-color="#cb1900"/><stop offset=".9201" stop-color="#963b02"/><stop offset=".9305" stop-color="#4d6c0c"/><stop offset=".9782" stop-color="#53680a"/><stop offset=".9969" stop-color="#655d07"/><stop offset=".999" stop-color="#1a8a2d"/></linearGradient><linearGradient id="g407" x2="0" y2="1"><stop offset=".001" stop-color="#0b942d"/><stop offset=".0031" stop-color="#0b9013"/><stop offset=".6691" stop-color="#407509"/><stop offset=".7044" stop-color="#8c4402"/><stop offset=".7355" stop-color="#c11b01"/><stop offset=".7645" stop-color="#d12000"/><stop offset=".833" stop-color="#de6100"/><stop offset=".8703" stop-color="#df6500"/><stop offset=".9098" stop-color="#c91901"/><stop offset=".9222" stop-color="#8c4203"/><stop offset=".9305" stop-color="#51690b"/><stop offset=".9782" stop-color="#53680a"/><stop offset=".9969" stop-color="#655d07"/><stop offset=".999" stop-color="#1a8a2d"/></linearGradient><linearGradient id="g408" x2="0" y2="1"><stop offset=".001" stop-color="#0b942d"/><stop offset=".0031" stop-color="#0b9013"/><stop offset=".6649" stop-color="#407509"/><stop offset=".7002" stop-color="#8c4402"/><stop offset=".7313" stop-color="#c11b01"/><stop offset=".7645" stop-color="#d12100"/><stop offset=".833" stop-color="#de6100"/><stop offset=".8703" stop-color="#df6500"/><stop offset=".9098" stop-color="#ca1901"/><stop offset=".9222" stop-color="#8f3f03"/><stop offset=".9305" stop-color="#55670a"/><stop offset=".9429" stop-color="#4d6c0c"/><stop offset=".9803" stop-color="#55670a"/><stop offset=".9969" stop-color="#655d07"/><stop offset=".999" stop-color="#1a8a2d"/></linearGradient><linearGradient id="g409" x2="0" y2="1"><stop offset=".001" stop-color="#0b942d"/><stop offset=".0031" stop-color="#0b9013"/><stop offset=".1317" stop-color="#138c0f"/><stop offset=".1359" stop-color="#1d8608"/><stop offset=".3496" stop-color="#397905"/><stop offset=".64" stop-color="#775302"/><stop offset=".6712" stop-color="#b82001"/><stop offset=".6961" stop-color="#c81801"/><stop offset=".7583" stop-color="#ce1c00"/><stop offset=".833" stop-color="#de6300"/><stop offset=".8703" stop-color="#df6700"/><stop offset=".9098" stop-color="#ca1901"/><stop offset=".9222" stop-color="#933d02"/><stop offset=".9326" stop-color="#4d6c0c"/><stop offset=".9782" stop-color="#53680a"/><stop offset=".9969" stop-color="#655d07"/><stop offset=".999" stop-color="#1a8a2d"/></linearGradient><linearGradient id="g410" x2="0" y2="1"><stop offset=".001" stop-color="#0b942d"/><stop offset=".0031" stop-color="#0b9013"/><stop offset=".1649" stop-color="#1d8609"/><stop offset=".2562" stop-color="#516e01"/><stop offset=".3102" stop-color="#785602"/><stop offset=".5965" stop-color="#b42402"/><stop offset=".6234" stop-color="#be1b01"/><stop offset=".6504" stop-color="#c91701"/><stop offset=".7562" stop-color="#cd1a00"/><stop offset=".833" stop-color="#de6300"/><stop offset=".8703" stop-color="#df6600"/><stop offset=".9098" stop-color="#cb1900"/><stop offset=".9222" stop-color="#963b02"/><stop offset=".9326" stop-color="#4d6c0c"/><stop offset=".9782" stop-color="#53680a"/><stop offset=".9969" stop-color="#655d07"/><stop offset=".999" stop-color="#1a8a2d"/></linearGradient><linearGradient id="g411" x2="0" y2="1"><stop offset=".001" stop-color="#0b942d"/><stop offset=".0031" stop-color="#0b9013"/><stop offset=".1649" stop-color="#1d8609"/><stop offset=".2562" stop-color="#516e01"/><stop offset=".3102" stop-color="#785602"/><stop offset=".5965" stop-color="#b42402"/><stop offset=".6795" stop-color="#c21a01"/><stop offset=".7624" stop-color="#d01e00"/><stop offset=".8351" stop-color="#dd5f00"/><stop offset=".8703" stop-color="#de6200"/><stop offset=".9118" stop-color="#c91901"/><stop offset=".9243" stop-color="#8c4203"/><stop offset=".9326" stop-color="#51690b"/><stop offset=".9782" stop-color="#53680a"/><stop offset=".9969" stop-color="#655d07"/><stop offset=".999" stop-color="#1a8a2d"/></linearGradient><linearGradient id="g412" x2="0" y2="1"><stop offset=".001" stop-color="#0b942d"/><stop offset=".0031" stop-color="#0b9013"/><stop offset=".1317" stop-color="#138c0f"/><stop offset=".1359" stop-color="#1d8608"/><stop offset=".3496" stop-color="#397905"/><stop offset=".6961" stop-color="#814b02"/><stop offset=".7272" stop-color="#bd1e01"/><stop offset=".7645" stop-color="#d01e00"/><stop offset=".8371" stop-color="#dc5a00"/><stop offset=".8724" stop-color="#dc5a00"/><stop offset=".9118" stop-color="#c91901"/><stop offset=".9243" stop-color="#8f3f03"/><stop offset=".9326" stop-color="#55670a"/><stop offset=".945" stop-color="#4d6c0c"/><stop offset=".9803" stop-color="#55670a"/><stop offset=".9969" stop-color="#655d07"/><stop offset=".999" stop-color="#1a8a2d"/></linearGradient><linearGradient id="g413" x2="0" y2="1"><stop offset=".001" stop-color="#0b942d"/><stop offset=".0031" stop-color="#0b9013"/><stop offset=".6691" stop-color="#437309"/><stop offset=".7044" stop-color="#904102"/><stop offset=".7355" stop-color="#c31a01"/><stop offset=".7707" stop-color="#d12100"/><stop offset=".8413" stop-color="#dc5700"/><stop offset=".8724" stop-color="#db5500"/><stop offset=".9118" stop-color="#ca1901"/><stop offset=".9243" stop-color="#933d02"/><stop offset=".9346" stop-color="#4d6c0c"/><stop offset=".9782" stop-color="#53680a"/><stop offset=".9969" stop-color="#655d07"/><stop offset=".999" stop-color="#1a8a2d"/></linearGradient><linearGradient id="g414" x2="0" y2="1"><stop offset=".001" stop-color="#0b942d"/><stop offset=".0031" stop-color="#0b9013"/><stop offset=".6712" stop-color="#437309"/><stop offset=".7064" stop-color="#8f4102"/><stop offset=".7376" stop-color="#c21a01"/><stop offset=".7728" stop-color="#d12200"/><stop offset=".8434" stop-color="#db5400"/><stop offset=".8745" stop-color="#da5000"/><stop offset=".9118" stop-color="#cb1901"/><stop offset=".9243" stop-color="#963b02"/><stop offset=".9346" stop-color="#4d6c0c"/><stop offset=".9782" stop-color="#53680a"/><stop offset=".9969" stop-color="#655d07"/><stop offset=".999" stop-color="#1a8a2d"/></linearGradient><linearGradient id="g415" x2="0" y2="1"><stop offset=".001" stop-color="#0b942d"/><stop offset=".0031" stop-color="#0b9013"/><stop offset=".6732" stop-color="#427409"/><stop offset=".7106" stop-color="#933e02"/><stop offset=".7417" stop-color="#c41a01"/><stop offset=".7749" stop-color="#d22400"/><stop offset=".8434" stop-color="#db5400"/><stop offset=".8745" stop-color="#da5000"/><stop offset=".9139" stop-color="#c81901"/><stop offset=".9263" stop-color="#8a4303"/><stop offset=".9346" stop-color="#4f6b0c"/><stop offset=".9782" stop-color="#53680a"/><stop offset=".9969" stop-color="#655d07"/><stop offset=".999" stop-color="#1a8a2d"/></linearGradient><linearGradient id="g416" x2="0" y2="1"><stop offset=".001" stop-color="#0b942d"/><stop offset=".0031" stop-color="#0b9013"/><stop offset=".6753" stop-color="#417409"/><stop offset=".7127" stop-color="#923f02"/><stop offset=".7438" stop-color="#c31a01"/><stop offset=".777" stop-color="#d22500"/><stop offset=".8434" stop-color="#db5400"/><stop offset=".8745" stop-color="#da5000"/><stop offset=".9139" stop-color="#c81901"/><stop offset=".9263" stop-color="#8c4203"/><stop offset=".9346" stop-color="#516a0b"/><stop offset=".9782" stop-color="#53680a"/><stop offset=".9969" stop-color="#655d07"/><stop offset=".999" stop-color="#1a8a2d"/></linearGradient><linearGradient id="g417" x2="0" y2="1"><stop offset=".001" stop-color="#0b942d"/><stop offset=".0031" stop-color="#0b9013"/><stop offset=".6774" stop-color="#417409"/><stop offset=".7147" stop-color="#914002"/><stop offset=".7459" stop-color="#c31a01"/><stop offset=".777" stop-color="#d22500"/><stop offset=".8434" stop-color="#db5400"/><stop offset=".8745" stop-color="#da5000"/><stop offset=".9139" stop-color="#c91901"/><stop offset=".9263" stop-color="#8d4103"/><stop offset=".9346" stop-color="#53680b"/><stop offset=".9782" stop-color="#53680a"/><stop offset=".9969" stop-color="#655d07"/><stop offset=".999" stop-color="#1a8a2d"/></linearGradient><linearGradient id="g418" x2="0" y2="1"><stop offset=".001" stop-color="#0b942d"/><stop offset=".0031" stop-color="#0b9013"/><stop offset=".6815" stop-color="#447309"/><stop offset=".7168" stop-color="#904002"/><stop offset=".7479" stop-color="#c31a01"/><stop offset=".779" stop-color="#d32700"/><stop offset=".8454" stop-color="#db5500"/><stop offset=".8745" stop-color="#da5000"/><stop offset=".9139" stop-color="#c91901"/><stop offset=".9263" stop-color="#8f4003"/><stop offset=".9346" stop-color="#54670a"/><stop offset=".9533" stop-color="#4d6c0c"/><stop offset=".9803" stop-color="#55670a"/><stop offset=".9969" stop-color="#655d07"/><stop offset=".999" stop-color="#1a8a2d"/></linearGradient><linearGradient id="g419" x2="0" y2="1"><stop offset=".001" stop-color="#0b942d"/><stop offset=".0031" stop-color="#0b9013"/><stop offset=".6836" stop-color="#437309"/><stop offset=".721" stop-color="#943d02"/><stop offset=".7521" stop-color="#c71901"/><stop offset=".8039" stop-color="#d73d00"/><stop offset=".862" stop-color="#dc5700"/><stop offset=".889" stop-color="#d63b00"/><stop offset=".9139" stop-color="#c91901"/><stop offset=".9263" stop-color="#903f03"/><stop offset=".9367" stop-color="#4d6c0c"/><stop offset=".9782" stop-color="#53680a"/><stop offset=".9969" stop-color="#655d07"/><stop offset=".999" stop-color="#1a8a2d"/></linearGradient><linearGradient id="g420" x2="0" y2="1"><stop offset=".001" stop-color="#0b942d"/><stop offset=".0031" stop-color="#0b9013"/><stop offset=".6857" stop-color="#427309"/><stop offset=".723" stop-color="#933e02"/><stop offset=".7521" stop-color="#c71901"/><stop offset=".8039" stop-color="#d73d00"/><stop offset=".862" stop-color="#dc5700"/><stop offset=".889" stop-color="#d73c00"/><stop offset=".9139" stop-color="#ca1901"/><stop offset=".9263" stop-color="#923e02"/><stop offset=".9367" stop-color="#4d6c0c"/><stop offset=".9782" stop-color="#53680a"/><stop offset=".9969" stop-color="#655d07"/><stop offset=".999" stop-color="#1a8a2d"/></linearGradient><linearGradient id="g421" x2="0" y2="1"><stop offset=".001" stop-color="#0b942d"/><stop offset=".0031" stop-color="#0b9013"/><stop offset=".6878" stop-color="#427409"/><stop offset=".7251" stop-color="#923f02"/><stop offset=".75" stop-color="#c51901"/><stop offset=".7873" stop-color="#d42f00"/><stop offset=".8496" stop-color="#dc5600"/><stop offset=".8766" stop-color="#da4e00"/><stop offset=".9139" stop-color="#ca1901"/><stop offset=".9263" stop-color="#943c02"/><stop offset=".9367" stop-color="#4d6c0c"/><stop offset=".9782" stop-color="#53680a"/><stop offset=".9969" stop-color="#655d07"/><stop offset=".999" stop-color="#1a8a2d"/></linearGradient><linearGradient id="g422" x2="0" y2="1"><stop offset=".001" stop-color="#0b942d"/><stop offset=".0031" stop-color="#0b9013"/><stop offset=".6857" stop-color="#3e760a"/><stop offset=".7189" stop-color="#7d4e03"/><stop offset=".7479" stop-color="#c21b01"/><stop offset=".779" stop-color="#d32700"/><stop offset=".8454" stop-color="#db5500"/><stop offset=".8745" stop-color="#da5000"/><stop offset=".9139" stop-color="#ca1901"/><stop offset=".9263" stop-color="#953b02"/><stop offset=".9367" stop-color="#4d6c0c"/><stop offset=".9782" stop-color="#53680a"/><stop offset=".9969" stop-color="#655d07"/><stop offset=".999" stop-color="#1a8a2d"/></linearGradient><linearGradient id="g423" x2="0" y2="1"><stop offset=".001" stop-color="#0b942d"/><stop offset=".0031" stop-color="#0b9013"/><stop offset=".6857" stop-color="#3e760a"/><stop offset=".7044" stop-color="#576705"/><stop offset=".7272" stop-color="#8f4102"/><stop offset=".7459" stop-color="#bf1c01"/><stop offset=".7728" stop-color="#d12200"/><stop offset=".8434" stop-color="#db5400"/><stop offset=".8745" stop-color="#da5000"/><stop offset=".916" stop-color="#c81901"/><stop offset=".9284" stop-color="#894403"/><stop offset=".9367" stop-color="#4e6b0c"/><stop offset=".9782" stop-color="#53680a"/><stop offset=".9969" stop-color="#655d07"/><stop offset=".999" stop-color="#1a8a2d"/></linearGradient><linearGradient id="g424" x2="0" y2="1"><stop offset=".001" stop-color="#0b942d"/><stop offset=".0031" stop-color="#0b9013"/><stop offset=".6857" stop-color="#3e760a"/><stop offset=".7085" stop-color="#616104"/><stop offset=".7459" stop-color="#bf1c01"/><stop offset=".7728" stop-color="#d12200"/><stop offset=".8434" stop-color="#db5400"/><stop offset=".8745" stop-color="#db5000"/><stop offset=".916" stop-color="#c81901"/><stop offset=".9284" stop-color="#8b4303"/><stop offset=".9367" stop-color="#506a0b"/><stop offset=".9782" stop-color="#53680a"/><stop offset=".9969" stop-color="#655d07"/><stop offset=".999" stop-color="#1a8a2d"/></linearGradient><linearGradient id="g425" x2="0" y2="1"><stop offset=".001" stop-color="#0b942d"/><stop offset=".0031" stop-color="#0b9013"/><stop offset=".6857" stop-color="#3e760a"/><stop offset=".7168" stop-color="#755403"/><stop offset=".7459" stop-color="#bf1c01"/><stop offset=".7728" stop-color="#d12200"/><stop offset=".8434" stop-color="#db5400"/><stop offset=".8745" stop-color="#db5000"/><stop offset=".916" stop-color="#c91901"/><stop offset=".9284" stop-color="#8c4103"/><stop offset=".9367" stop-color="#52690b"/><stop offset=".9782" stop-color="#53680a"/><stop offset=".9969" stop-color="#655d07"/><stop offset=".999" stop-color="#1a8a2d"/></linearGradient><linearGradient id="g426" x2="0" y2="1"><stop offset=".001" stop-color="#0b942d"/><stop offset=".0031" stop-color="#0b9013"/><stop offset=".6857" stop-color="#3e760a"/><stop offset=".7189" stop-color="#7c4f03"/><stop offset=".7479" stop-color="#c21b01"/><stop offset=".779" stop-color="#d32700"/><stop offset=".8454" stop-color="#db5500"/><stop offset=".8745" stop-color="#db5000"/><stop offset=".916" stop-color="#c91901"/><stop offset=".9284" stop-color="#8e4003"/><stop offset=".9367" stop-color="#53680a"/><stop offset=".9782" stop-color="#53680a"/><stop offset=".9969" stop-color="#655d07"/><stop offset=".999" stop-color="#1a8a2d"/></linearGradient><linearGradient id="g427" x2="0" y2="1"><stop offset=".001" stop-color="#0b942d"/><stop offset=".0031" stop-color="#0b9013"/><stop offset=".6898" stop-color="#427309"/><stop offset=".7272" stop-color="#933e02"/><stop offset=".7479" stop-color="#c21b01"/><stop offset=".779" stop-color="#d32700"/><stop offset=".8454" stop-color="#db5500"/><stop offset=".8745" stop-color="#db5000"/><stop offset=".916" stop-color="#c91901"/><stop offset=".9284" stop-color="#903f03"/><stop offset=".9388" stop-color="#4d6c0c"/><stop offset=".9782" stop-color="#53680a"/><stop offset=".9969" stop-color="#655d07"/><stop offset=".999" stop-color="#1a8a2d"/></linearGradient><linearGradient id="g428" x2="0" y2="1"><stop offset=".001" stop-color="#0b942d"/><stop offset=".0031" stop-color="#0b9013"/><stop offset=".6898" stop-color="#447309"/><stop offset=".7251" stop-color="#904002"/><stop offset=".75" stop-color="#c51901"/><stop offset=".7873" stop-color="#d42f00"/><stop offset=".8496" stop-color="#dc5600"/><stop offset=".8766" stop-color="#da4e00"/><stop offset=".916" stop-color="#c91901"/><stop offset=".9284" stop-color="#913e03"/><stop offset=".9388" stop-color="#4d6c0c"/><stop offset=".9782" stop-color="#53680a"/><stop offset=".9969" stop-color="#655d07"/><stop offset=".999" stop-color="#1a8a2d"/></linearGradient><linearGradient id="g429" x2="0" y2="1"><stop offset=".001" stop-color="#0b942d"/><stop offset=".0031" stop-color="#0b9013"/><stop offset=".6878" stop-color="#417409"/><stop offset=".7251" stop-color="#913f02"/><stop offset=".75" stop-color="#c51901"/><stop offset=".7873" stop-color="#d42f00"/><stop offset=".8496" stop-color="#dc5600"/><stop offset=".8766" stop-color="#da4e00"/><stop offset=".916" stop-color="#ca1901"/><stop offset=".9284" stop-color="#933d02"/><stop offset=".9388" stop-color="#4d6c0c"/><stop offset=".9782" stop-color="#53680a"/><stop offset=".9969" stop-color="#655d07"/><stop offset=".999" stop-color="#1a8a2d"/></linearGradient><linearGradient id="g430" x2="0" y2="1"><stop offset=".001" stop-color="#0b942d"/><stop offset=".0031" stop-color="#0b9013"/><stop offset=".6878" stop-color="#437309"/><stop offset=".7251" stop-color="#933e02"/><stop offset=".75" stop-color="#c51901"/><stop offset=".7873" stop-color="#d42f00"/><stop offset=".8496" stop-color="#dc5600"/><stop offset=".8766" stop-color="#da4e00"/><stop offset=".916" stop-color="#ca1901"/><stop offset=".9284" stop-color="#943c02"/><stop offset=".9388" stop-color="#4d6c0c"/><stop offset=".9782" stop-color="#53680a"/><stop offset=".9969" stop-color="#655d07"/><stop offset=".999" stop-color="#1a8a2d"/></linearGradient></defs><rect x="0" width="1" height="482" fill="url(#g0)"/><rect x="1" width="1" height="482" fill="url(#g1)"/><rect x="2" width="1" height="482" fill="url(#g2)"/><rect x="3" width="1" height="482" fill="url(#g3)"/><rect x="4" width="1" height="482" fill="url(#g4)"/><rect x="5" width="1" height="482" fill="url(#g5)"/><rect x="6" width="1" height="482" fill="url(#g6)"/><rect x="7" width="1" height="482" fill="url(#g7)"/><rect x="8" width="1" height="482" fill="url(#g8)"/><rect x="9" width="1" height="482" fill="url(#g9)"/><rect x="10" width="1" height="482" fill="url(#g10)"/><rect x="11" width="1" height="482" fill="url(#g11)"/><rect x="12" width="1" height="482" fill="url(#g12)"/><rect x="13" width="1" height="482" fill="url(#g13)"/><rect x="14" width="1" height="482" fill="url(#g14)"/><rect x="15" width="1" height="482" fill="url(#g15)"/><rect x="16" width="1" height="482" fill="url(#g16)"/><rect x="17" width="1" height="482" fill="url(#g17)"/><rect x="18" width="1" height="482" fill="url(#g18)"/><rect x="19" width="1" height="482" fill="url(#g19)"/><rect x="20" width="1" height="482" fill="url(#g20)"/><rect x="21" width="1" height="482" fill="url(#g21)"/><rect x="22" width="1" height="482" fill="url(#g22)"/><rect x="23" width="1" height="482" fill="url(#g23)"/><rect x="24" width="1" height="482" fill="url(#g24)"/><rect x="25" width="1" height="482" fill="url(#g25)"/><rect x="26" width="1" height="482" fill="url(#g26)"/><rect x="27" width="1" height="482" fill="url(#g27)"/><rect x="28" width="1" height="482" fill="url(#g28)"/><rect x="29" width="1" height="482" fill="url(#g29)"/><rect x="30" width="1" height="482" fill="url(#g30)"/><rect x="31" width="1" height="482" fill="url(#g31)"/><rect x="32" width="1" height="482" fill="url(#g32)"/><rect x="33" width="1" height="482" fill="url(#g33)"/><rect x="34" width="1" height="482" fill="url(#g34)"/><rect x="35" width="1" height="482" fill="url(#g35)"/><rect x="36" width="1" height="482" fill="url(#g36)"/><rect x="37" width="1" height="482" fill="url(#g37)"/><rect x="38" width="1" height="482" fill="url(#g38)"/><rect x="39" width="1" height="482" fill="url(#g39)"/><rect x="40" width="1" height="482" fill="url(#g40)"/><rect x="41" width="1" height="482" fill="url(#g41)"/><rect x="42" width="1" height="482" fill="url(#g42)"/><rect x="43" width="1" height="482" fill="url(#g43)"/><rect x="44" width="1" height="482" fill="url(#g44)"/><rect x="45" width="1" height="482" fill="url(#g45)"/><rect x="46" width="1" height="482" fill="url(#g46)"/><rect x="47" width="1" height="482" fill="url(#g47)"/><rect x="48" width="1" height="482" fill="url(#g48)"/><rect x="49" width="1" height="482" fill="url(#g49)"/><rect x="50" width="1" height="482" fill="url(#g50)"/><rect x="51" width="1" height="482" fill="url(#g51)"/><rect x="52" width="1" height="482" fill="url(#g52)"/><rect x="53" width="1" height="482" fill="url(#g53)"/><rect x="54" width="1" height="482" fill="url(#g54)"/><rect x="55" width="1" height="482" fill="url(#g55)"/><rect x="56" width="1" height="482" fill="url(#g56)"/><rect x="57" width="1" height="482" fill="url(#g57)"/><rect x="58" width="1" height="482" fill="url(#g58)"/><rect x="59" width="1" height="482" fill="url(#g59)"/><rect x="60" width="1" height="482" fill="url(#g60)"/><rect x="61" width="1" height="482" fill="url(#g61)"/><rect x="62" width="1" height="482" fill="url(#g62)"/><rect x="63" width="1" height="482" fill="url(#g63)"/><rect x="64" width="1" height="482" fill="url(#g64)"/><rect x="65" width="1" height="482" fill="url(#g65)"/><rect x="66" width="1" height="482" fill="url(#g66)"/><rect x="67" width="1" height="482" fill="url(#g67)"/><rect x="68" width="1" height="482" fill="url(#g68)"/><rect x="69" width="1" height="482" fill="url(#g69)"/><rect x="70" width="1" height="482" fill="url(#g70)"/><rect x="71" width="1" height="482" fill="url(#g71)"/><rect x="72" width="1" height="482" fill="url(#g72)"/><rect x="73" width="1" height="482" fill="url(#g73)"/><rect x="74" width="1" height="482" fill="url(#g74)"/><rect x="75" width="1" height="482" fill="url(#g75)"/><rect x="76" width="1" height="482" fill="url(#g76)"/><rect x="77" width="1" height="482" fill="url(#g77)"/><rect x="78" width="1" height="482" fill="url(#g78)"/><rect x="79" width="1" height="482" fill="url(#g79)"/><rect x="80" width="1" height="482" fill="url(#g80)"/><rect x="81" width="1" height="482" fill="url(#g81)"/><rect x="82" width="1" height="482" fill="url(#g82)"/><rect x="83" width="1" height="482" fill="url(#g83)"/><rect x="84" width="1" height="482" fill="url(#g84)"/><rect x="85" width="1" height="482" fill="url(#g85)"/><rect x="86" width="1" height="482" fill="url(#g86)"/><rect x="87" width="1" height="482" fill="url(#g87)"/><rect x="88" width="1" height="482" fill="url(#g88)"/><rect x="89" width="1" height="482" fill="url(#g89)"/><rect x="90" width="1" height="482" fill="url(#g90)"/><rect x="91" width="1" height="482" fill="url(#g91)"/><rect x="92" width="1" height="482" fill="url(#g92)"/><rect x="93" width="1" height="482" fill="url(#g93)"/><rect x="94" width="1" height="482" fill="url(#g94)"/><rect x="95" width="1" height="482" fill="url(#g95)"/><rect x="96" width="1" height="482" fill="url(#g96)"/><rect x="97" width="1" height="482" fill="url(#g97)"/><rect x="98" width="1" height="482" fill="url(#g98)"/><rect x="99" width="1" height="482" fill="url(#g99)"/><rect x="100" width="1" height="482" fill="url(#g100)"/><rect x="101" width="1" height="482" fill="url(#g101)"/><rect x="102" width="1" height="482" fill="url(#g102)"/><rect x="103" width="1" height="482" fill="url(#g103)"/><rect x="104" width="1" height="482" fill="url(#g104)"/><rect x="105" width="1" height="482" fill="url(#g105)"/><rect x="106" width="1" height="482" fill="url(#g106)"/><rect x="107" width="1" height="482" fill="url(#g107)"/><rect x="108" width="1" height="482" fill="url(#g108)"/><rect x="109" width="1" height="482" fill="url(#g109)"/><rect x="110" width="1" height="482" fill="url(#g110)"/><rect x="111" width="1" height="482" fill="url(#g111)"/><rect x="112" width="1" height="482" fill="url(#g112)"/><rect x="113" width="1" height="482" fill="url(#g113)"/><rect x="114" width="1" height="482" fill="url(#g114)"/><rect x="115" width="1" height="482" fill="url(#g115)"/><rect x="116" width="1" height="482" fill="url(#g116)"/><rect x="117" width="1" height="482" fill="url(#g117)"/><rect x="118" width="1" height="482" fill="url(#g118)"/><rect x="119" width="1" height="482" fill="url(#g119)"/><rect x="120" width="1" height="482" fill="url(#g120)"/><rect x="121" width="1" height="482" fill="url(#g121)"/><rect x="122" width="1" height="482" fill="url(#g122)"/><rect x="123" width="1" height="482" fill="url(#g123)"/><rect x="124" width="1" height="482" fill="url(#g124)"/><rect x="125" width="1" height="482" fill="url(#g125)"/><rect x="126" width="1" height="482" fill="url(#g126)"/><rect x="127" width="1" height="482" fill="url(#g127)"/><rect x="128" width="1" height="482" fill="url(#g128)"/><rect x="129" width="1" height="482" fill="url(#g129)"/><rect x="130" width="1" height="482" fill="url(#g130)"/><rect x="131" width="1" height="482" fill="url(#g131)"/><rect x="132" width="1" height="482" fill="url(#g132)"/><rect x="133" width="1" height="482" fill="url(#g133)"/><rect x="134" width="1" height="482" fill="url(#g134)"/><rect x="135" width="1" height="482" fill="url(#g135)"/><rect x="136" width="1" height="482" fill="url(#g136)"/><rect x="137" width="1" height="482" fill="url(#g137)"/><rect x="138" width="1" height="482" fill="url(#g138)"/><rect x="139" width="1" height="482" fill="url(#g139)"/><rect x="140" width="1" height="482" fill="url(#g140)"/><rect x="141" width="1" height="482" fill="url(#g141)"/><rect x="142" width="1" height="482" fill="url(#g142)"/><rect x="143" width="1" height="482" fill="url(#g143)"/><rect x="144" width="1" height="482" fill="url(#g144)"/><rect x="145" width="1" height="482" fill="url(#g145)"/><rect x="146" width="1" height="482" fill="url(#g146)"/><rect x="147" width="1" height="482" fill="url(#g147)"/><rect x="148" width="1" height="482" fill="url(#g148)"/><rect x="149" width="1" height="482" fill="url(#g149)"/><rect x="150" width="1" height="482" fill="url(#g150)"/><rect x="151" width="1" height="482" fill="url(#g151)"/><rect x="152" width="1" height="482" fill="url(#g152)"/><rect x="153" width="1" height="482" fill="url(#g153)"/><rect x="154" width="1" height="482" fill="url(#g154)"/><rect x="155" width="1" height="482" fill="url(#g155)"/><rect x="156" width="1" height="482" fill="url(#g156)"/><rect x="157" width="1" height="482" fill="url(#g157)"/><rect x="158" width="1" height="482" fill="url(#g158)"/><rect x="159" width="1" height="482" fill="url(#g159)"/><rect x="160" width="1" height="482" fill="url(#g160)"/><rect x="161" width="1" height="482" fill="url(#g161)"/><rect x="162" width="1" height="482" fill="url(#g162)"/><rect x="163" width="1" height="482" fill="url(#g163)"/><rect x="164" width="1" height="482" fill="url(#g164)"/><rect x="165" width="1" height="482" fill="url(#g165)"/><rect x="166" width="1" height="482" fill="url(#g166)"/><rect x="167" width="1" height="482" fill="url(#g167)"/><rect x="168" width="1" height="482" fill="url(#g168)"/><rect x="169" width="1" height="482" fill="url(#g169)"/><rect x="170" width="1" height="482" fill="url(#g170)"/><rect x="171" width="1" height="482" fill="url(#g171)"/><rect x="172" width="1" height="482" fill="url(#g172)"/><rect x="173" width="1" height="482" fill="url(#g173)"/><rect x="174" width="1" height="482" fill="url(#g174)"/><rect x="175" width="1" height="482" fill="url(#g175)"/><rect x="176" width="1" height="482" fill="url(#g176)"/><rect x="177" width="1" height="482" fill="url(#g177)"/><rect x="178" width="1" height="482" fill="url(#g178)"/><rect x="179" width="1" height="482" fill="url(#g179)"/><rect x="180" width="1" height="482" fill="url(#g180)"/><rect x="181" width="1" height="482" fill="url(#g181)"/><rect x="182" width="1" height="482" fill="url(#g182)"/><rect x="183" width="1" height="482" fill="url(#g183)"/><rect x="184" width="1" height="482" fill="url(#g184)"/><rect x="185" width="1" height="482" fill="url(#g185)"/><rect x="186" width="1" height="482" fill="url(#g186)"/><rect x="187" width="1" height="482" fill="url(#g187)"/><rect x="188" width="1" height="482" fill="url(#g188)"/><rect x="189" width="1" height="482" fill="url(#g189)"/><rect x="190" width="1" height="482" fill="url(#g190)"/><rect x="191" width="1" height="482" fill="url(#g191)"/><rect x="192" width="1" height="482" fill="url(#g192)"/><rect x="193" width="1" height="482" fill="url(#g193)"/><rect x="194" width="1" height="482" fill="url(#g194)"/><rect x="195" width="1" height="482" fill="url(#g195)"/><rect x="196" width="1" height="482" fill="url(#g196)"/><rect x="197" width="1" height="482" fill="url(#g197)"/><rect x="198" width="1" height="482" fill="url(#g198)"/><rect x="199" width="1" height="482" fill="url(#g199)"/><rect x="200" width="1" height="482" fill="url(#g200)"/><rect x="201" width="1" height="482" fill="url(#g201)"/><rect x="202" width="1" height="482" fill="url(#g202)"/><rect x="203" width="1" height="482" fill="url(#g203)"/><rect x="204" width="1" height="482" fill="url(#g204)"/><rect x="205" width="1" height="482" fill="url(#g205)"/><rect x="206" width="1" height="482" fill="url(#g206)"/><rect x="207" width="1" height="482" fill="url(#g207)"/><rect x="208" width="1" height="482" fill="url(#g208)"/><rect x="209" width="1" height="482" fill="url(#g209)"/><rect x="210" width="1" height="482" fill="url(#g210)"/><rect x="211" width="1" height="482" fill="url(#g211)"/><rect x="212" width="1" height="482" fill="url(#g212)"/><rect x="213" width="1" height="482" fill="url(#g213)"/><rect x="214" width="1" height="482" fill="url(#g214)"/><rect x="215" width="1" height="482" fill="url(#g215)"/><rect x="216" width="1" height="482" fill="url(#g216)"/><rect x="217" width="1" height="482" fill="url(#g217)"/><rect x="218" width="1" height="482" fill="url(#g218)"/><rect x="219" width="1" height="482" fill="url(#g219)"/><rect x="220" width="1" height="482" fill="url(#g220)"/><rect x="221" width="1" height="482" fill="url(#g221)"/><rect x="222" width="1" height="482" fill="url(#g222)"/><rect x="223" width="1" height="482" fill="url(#g223)"/><rect x="224" width="1" height="482" fill="url(#g224)"/><rect x="225" width="1" height="482" fill="url(#g225)"/><rect x="226" width="1" height="482" fill="url(#g226)"/><rect x="227" width="1" height="482" fill="url(#g227)"/><rect x="228" width="1" height="482" fill="url(#g228)"/><rect x="229" width="1" height="482" fill="url(#g229)"/><rect x="230" width="1" height="482" fill="url(#g230)"/><rect x="231" width="1" height="482" fill="url(#g231)"/><rect x="232" width="1" height="482" fill="url(#g232)"/><rect x="233" width="1" height="482" fill="url(#g233)"/><rect x="234" width="1" height="482" fill="url(#g234)"/><rect x="235" width="1" height="482" fill="url(#g235)"/><rect x="236" width="1" height="482" fill="url(#g236)"/><rect x="237" width="1" height="482" fill="url(#g237)"/><rect x="238" width="1" height="482" fill="url(#g238)"/><rect x="239" width="1" height="482" fill="url(#g239)"/><rect x="240" width="1" height="482" fill="url(#g240)"/><rect x="241" width="1" height="482" fill="url(#g241)"/><rect x="242" width="1" height="482" fill="url(#g242)"/><rect x="243" width="1" height="482" fill="url(#g243)"/><rect x="244" width="1" height="482" fill="url(#g244)"/><rect x="245" width="1" height="482" fill="url(#g245)"/><rect x="246" width="1" height="482" fill="url(#g246)"/><rect x="247" width="1" height="482" fill="url(#g247)"/><rect x="248" width="1" height="482" fill="url(#g248)"/><rect x="249" width="1" height="482" fill="url(#g249)"/><rect x="250" width="1" height="482" fill="url(#g250)"/><rect x="251" width="1" height="482" fill="url(#g251)"/><rect x="252" width="1" height="482" fill="url(#g252)"/><rect x="253" width="1" height="482" fill="url(#g253)"/><rect x="254" width="1" height="482" fill="url(#g254)"/><rect x="255" width="1" height="482" fill="url(#g255)"/><rect x="256" width="1" height="482" fill="url(#g256)"/><rect x="257" width="1" height="482" fill="url(#g257)"/><rect x="258" width="1" height="482" fill="url(#g258)"/><rect x="259" width="1" height="482" fill="url(#g259)"/><rect x="260" width="1" height="482" fill="url(#g260)"/><rect x="261" width="1" height="482" fill="url(#g261)"/><rect x="262" width="1" height="482" fill="url(#g262)"/><rect x="263" width="1" height="482" fill="url(#g263)"/><rect x="264" width="1" height="482" fill="url(#g264)"/><rect x="265" width="1" height="482" fill="url(#g265)"/><rect x="266" width="1" height="482" fill="url(#g266)"/><rect x="267" width="1" height="482" fill="url(#g267)"/><rect x="268" width="1" height="482" fill="url(#g268)"/><rect x="269" width="1" height="482" fill="url(#g269)"/><rect x="270" width="1" height="482" fill="url(#g270)"/><rect x="271" width="1" height="482" fill="url(#g271)"/><rect x="272" width="1" height="482" fill="url(#g272)"/><rect x="273" width="1" height="482" fill="url(#g273)"/><rect x="274" width="1" height="482" fill="url(#g274)"/><rect x="275" width="1" height="482" fill="url(#g275)"/><rect x="276" width="1" height="482" fill="url(#g276)"/><rect x="277" width="1" height="482" fill="url(#g277)"/><rect x="278" width="1" height="482" fill="url(#g278)"/><rect x="279" width="1" height="482" fill="url(#g279)"/><rect x="280" width="1" height="482" fill="url(#g280)"/><rect x="281" width="1" height="482" fill="url(#g281)"/><rect x="282" width="1" height="482" fill="url(#g282)"/><rect x="283" width="1" height="482" fill="url(#g283)"/><rect x="284" width="1" height="482" fill="url(#g284)"/><rect x="285" width="1" height="482" fill="url(#g285)"/><rect x="286" width="1" height="482" fill="url(#g286)"/><rect x="287" width="1" height="482" fill="url(#g287)"/><rect x="288" width="1" height="482" fill="url(#g288)"/><rect x="289" width="1" height="482" fill="url(#g289)"/><rect x="290" width="1" height="482" fill="url(#g290)"/><rect x="291" width="1" height="482" fill="url(#g291)"/><rect x="292" width="1" height="482" fill="url(#g292)"/><rect x="293" width="1" height="482" fill="url(#g293)"/><rect x="294" width="1" height="482" fill="url(#g294)"/><rect x="295" width="1" height="482" fill="url(#g295)"/><rect x="296" width="1" height="482" fill="url(#g296)"/><rect x="297" width="1" height="482" fill="url(#g297)"/><rect x="298" width="1" height="482" fill="url(#g298)"/><rect x="299" width="1" height="482" fill="url(#g299)"/><rect x="300" width="1" height="482" fill="url(#g300)"/><rect x="301" width="1" height="482" fill="url(#g301)"/><rect x="302" width="1" height="482" fill="url(#g302)"/><rect x="303" width="1" height="482" fill="url(#g303)"/><rect x="304" width="1" height="482" fill="url(#g304)"/><rect x="305" width="1" height="482" fill="url(#g305)"/><rect x="306" width="1" height="482" fill="url(#g306)"/><rect x="307" width="1" height="482" fill="url(#g307)"/><rect x="308" width="1" height="482" fill="url(#g308)"/><rect x="309" width="1" height="482" fill="url(#g309)"/><rect x="310" width="1" height="482" fill="url(#g310)"/><rect x="311" width="1" height="482" fill="url(#g311)"/><rect x="312" width="1" height="482" fill="url(#g312)"/><rect x="313" width="1" height="482" fill="url(#g313)"/><rect x="314" width="1" height="482" fill="url(#g314)"/><rect x="315" width="1" height="482" fill="url(#g315)"/><rect x="316" width="1" height="482" fill="url(#g316)"/><rect x="317" width="1" height="482" fill="url(#g317)"/><rect x="318" width="1" height="482" fill="url(#g318)"/><rect x="319" width="1" height="482" fill="url(#g319)"/><rect x="320" width="1" height="482" fill="url(#g320)"/><rect x="321" width="1" height="482" fill="url(#g321)"/><rect x="322" width="1" height="482" fill="url(#g322)"/><rect x="323" width="1" height="482" fill="url(#g323)"/><rect x="324" width="1" height="482" fill="url(#g324)"/><rect x="325" width="1" height="482" fill="url(#g325)"/><rect x="326" width="1" height="482" fill="url(#g326)"/><rect x="327" width="1" height="482" fill="url(#g327)"/><rect x="328" width="1" height="482" fill="url(#g328)"/><rect x="329" width="1" height="482" fill="url(#g329)"/><rect x="330" width="1" height="482" fill="url(#g330)"/><rect x="331" width="1" height="482" fill="url(#g331)"/><rect x="332" width="1" height="482" fill="url(#g332)"/><rect x="333" width="1" height="482" fill="url(#g333)"/><rect x="334" width="1" height="482" fill="url(#g334)"/><rect x="335" width="1" height="482" fill="url(#g335)"/><rect x="336" width="1" height="482" fill="url(#g336)"/><rect x="337" width="1" height="482" fill="url(#g337)"/><rect x="338" width="1" height="482" fill="url(#g338)"/><rect x="339" width="1" height="482" fill="url(#g339)"/><rect x="340" width="1" height="482" fill="url(#g340)"/><rect x="341" width="1" height="482" fill="url(#g341)"/><rect x="342" width="1" height="482" fill="url(#g342)"/><rect x="343" width="1" height="482" fill="url(#g343)"/><rect x="344" width="1" height="482" fill="url(#g344)"/><rect x="345" width="1" height="482" fill="url(#g345)"/><rect x="346" width="1" height="482" fill="url(#g346)"/><rect x="347" width="1" height="482" fill="url(#g347)"/><rect x="348" width="1" height="482" fill="url(#g348)"/><rect x="349" width="1" height="482" fill="url(#g349)"/><rect x="350" width="1" height="482" fill="url(#g350)"/><rect x="351" width="1" height="482" fill="url(#g351)"/><rect x="352" width="1" height="482" fill="url(#g352)"/><rect x="353" width="1" height="482" fill="url(#g353)"/><rect x="354" width="1" height="482" fill="url(#g354)"/><rect x="355" width="1" height="482" fill="url(#g355)"/><rect x="356" width="1" height="482" fill="url(#g356)"/><rect x="357" width="1" height="482" fill="url(#g357)"/><rect x="358" width="1" height="482" fill="url(#g358)"/><rect x="359" width="1" height="482" fill="url(#g359)"/><rect x="360" width="1" height="482" fill="url(#g360)"/><rect x="361" width="1" height="482" fill="url(#g361)"/><rect x="362" width="1" height="482" fill="url(#g362)"/><rect x="363" width="1" height="482" fill="url(#g363)"/><rect x="364" width="1" height="482" fill="url(#g364)"/><rect x="365" width="1" height="482" fill="url(#g365)"/><rect x="366" width="1" height="482" fill="url(#g366)"/><rect x="367" width="1" height="482" fill="url(#g367)"/><rect x="368" width="1" height="482" fill="url(#g368)"/><rect x="369" width="1" height="482" fill="url(#g369)"/><rect x="370" width="1" height="482" fill="url(#g370)"/><rect x="371" width="1" height="482" fill="url(#g371)"/><rect x="372" width="1" height="482" fill="url(#g372)"/><rect x="373" width="1" height="482" fill="url(#g373)"/><rect x="374" width="1" height="482" fill="url(#g374)"/><rect x="375" width="1" height="482" fill="url(#g375)"/><rect x="376" width="1" height="482" fill="url(#g376)"/><rect x="377" width="1" height="482" fill="url(#g377)"/><rect x="378" width="1" height="482" fill="url(#g378)"/><rect x="379" width="1" height="482" fill="url(#g379)"/><rect x="380" width="1" height="482" fill="url(#g380)"/><rect x="381" width="1" height="482" fill="url(#g381)"/><rect x="382" width="1" height="482" fill="url(#g382)"/><rect x="383" width="1" height="482" fill="url(#g383)"/><rect x="384" width="1" height="482" fill="url(#g384)"/><rect x="385" width="1" height="482" fill="url(#g385)"/><rect x="386" width="1" height="482" fill="url(#g386)"/><rect x="387" width="1" height="482" fill="url(#g387)"/><rect x="388" width="1" height="482" fill="url(#g388)"/><rect x="389" width="1" height="482" fill="url(#g389)"/><rect x="390" width="1" height="482" fill="url(#g390)"/><rect x="391" width="1" height="482" fill="url(#g391)"/><rect x="392" width="1" height="482" fill="url(#g392)"/><rect x="393" width="1" height="482" fill="url(#g393)"/><rect x="394" width="1" height="482" fill="url(#g394)"/><rect x="395" width="1" height="482" fill="url(#g395)"/><rect x="396" width="1" height="482" fill="url(#g396)"/><rect x="397" width="1" height="482" fill="url(#g397)"/><rect x="398" width="1" height="482" fill="url(#g398)"/><rect x="399" width="1" height="482" fill="url(#g399)"/><rect x="400" width="1" height="482" fill="url(#g400)"/><rect x="401" width="1" height="482" fill="url(#g401)"/><rect x="402" width="1" height="482" fill="url(#g402)"/><rect x="403" width="1" height="482" fill="url(#g403)"/><rect x="404" width="1" height="482" fill="url(#g404)"/><rect x="405" width="1" height="482" fill="url(#g405)"/><rect x="406" width="1" height="482" fill="url(#g406)"/><rect x="407" width="1" height="482" fill="url(#g407)"/><rect x="408" width="1" height="482" fill="url(#g408)"/><rect x="409" width="1" height="482" fill="url(#g409)"/><rect x="410" width="1" height="482" fill="url(#g410)"/><rect x="411" width="1" height="482" fill="url(#g411)"/><rect x="412" width="1" height="482" fill="url(#g412)"/><rect x="413" width="1" height="482" fill="url(#g413)"/><rect x="414" width="1" height="482" fill="url(#g414)"/><rect x="415" width="1" height="482" fill="url(#g415)"/><rect x="416" width="1" height="482" fill="url(#g416)"/><rect x="417" width="1" height="482" fill="url(#g417)"/><rect x="418" width="1" height="482" fill="url(#g418)"/><rect x="419" width="1" height="482" fill="url(#g419)"/><rect x="420" width="1" height="482" fill="url(#g420)"/><rect x="421" width="1" height="482" fill="url(#g421)"/><rect x="422" width="1" height="482" fill="url(#g422)"/><rect x="423" width="1" height="482" fill="url(#g423)"/><rect x="424" width="1" height="482" fill="url(#g424)"/><rect x="425" width="1" height="482" fill="url(#g425)"/><rect x="426" width="1" height="482" fill="url(#g426)"/><rect x="427" width="1" height="482" fill="url(#g427)"/><rect x="428" width="1" height="482" fill="url(#g428)"/><rect x="429" width="1" height="482" fill="url(#g429)"/><rect x="430" width="1" height="482" fill="url(#g430)"/></svg>
<div class="bar" style="left:52px;top:519px;width:431px;height:26px;background:#002460;border-top:1px solid #001a40;box-sizing:border-box"></div>
<div class="bar" style="left:22px;top:648px;width:321px;height:11px;background:linear-gradient(to right,#000040 0%,#000048 13.4%,#003070 19.6%,#007070 27.4%,#10906a 32.1%,#109040 39.9%,#008c00 44.1%,#407000 47.6%,#6a6a00 49.5%,#8a5a00 51.3%,#a83008 53.7%,#c01000 56.2%,#d00000 57.5%,#d02000 64.8%,#d84000 71%,#e07000 77.3%,#e89000 83.5%,#f0c000 89.7%,#ffee00 97.5%,#ffff00 100%)"></div>
<div class="t" id="t1" style="left:184px;top:6px;font-size:13.8px;letter-spacing:0.47px">NEAR X-Ray Analysis</div>
<div class="t" id="t2" style="left:393px;top:6px;letter-spacing:0.83px">Date: Wed Jun  6 16:20:16 2001</div>
<div class="t" id="t3" style="left:7px;top:21px;letter-spacing:0.5px">256</div>
<div class="t" id="t4" style="left:18px;top:535px">0</div>
<div class="t" id="t5" style="left:38px;top:545px">0</div>
<div class="t" id="t6" style="left:247px;top:546px">File Time</div>
<div class="t" id="t7" style="left:501px;top:545px;letter-spacing:0.33px">1723</div>
<div class="t" id="t8" style="left:21px;top:631px;letter-spacing:0.55px">LOG10 Normalized Spectrogram Scale</div>
<div class="t" id="t9" style="left:22px;top:667px;letter-spacing:1px">0.0</div>
<div class="t" id="t10" style="left:180px;top:667px;letter-spacing:1px">0.5</div>
<div class="t" id="t11" style="left:341px;top:667px;letter-spacing:1px">1.0</div>
<div class="t" id="t12" style="left:368px;top:638px;letter-spacing:0.87px">Spect type= ACTIVE SOLAR,  256 Channels,        1 ch/bin</div>
<div class="t" id="t13" style="left:367px;top:658px;letter-spacing:1.29px">Directory = /near/xdr/XRS/2000/12-00/XSdaily-12_30_00out/</div>
<div class="t" id="t14" style="left:36px;top:302px;transform:rotate(-90deg);letter-spacing:1.57px">Channel # ----&gt;</div>
</body></html>
